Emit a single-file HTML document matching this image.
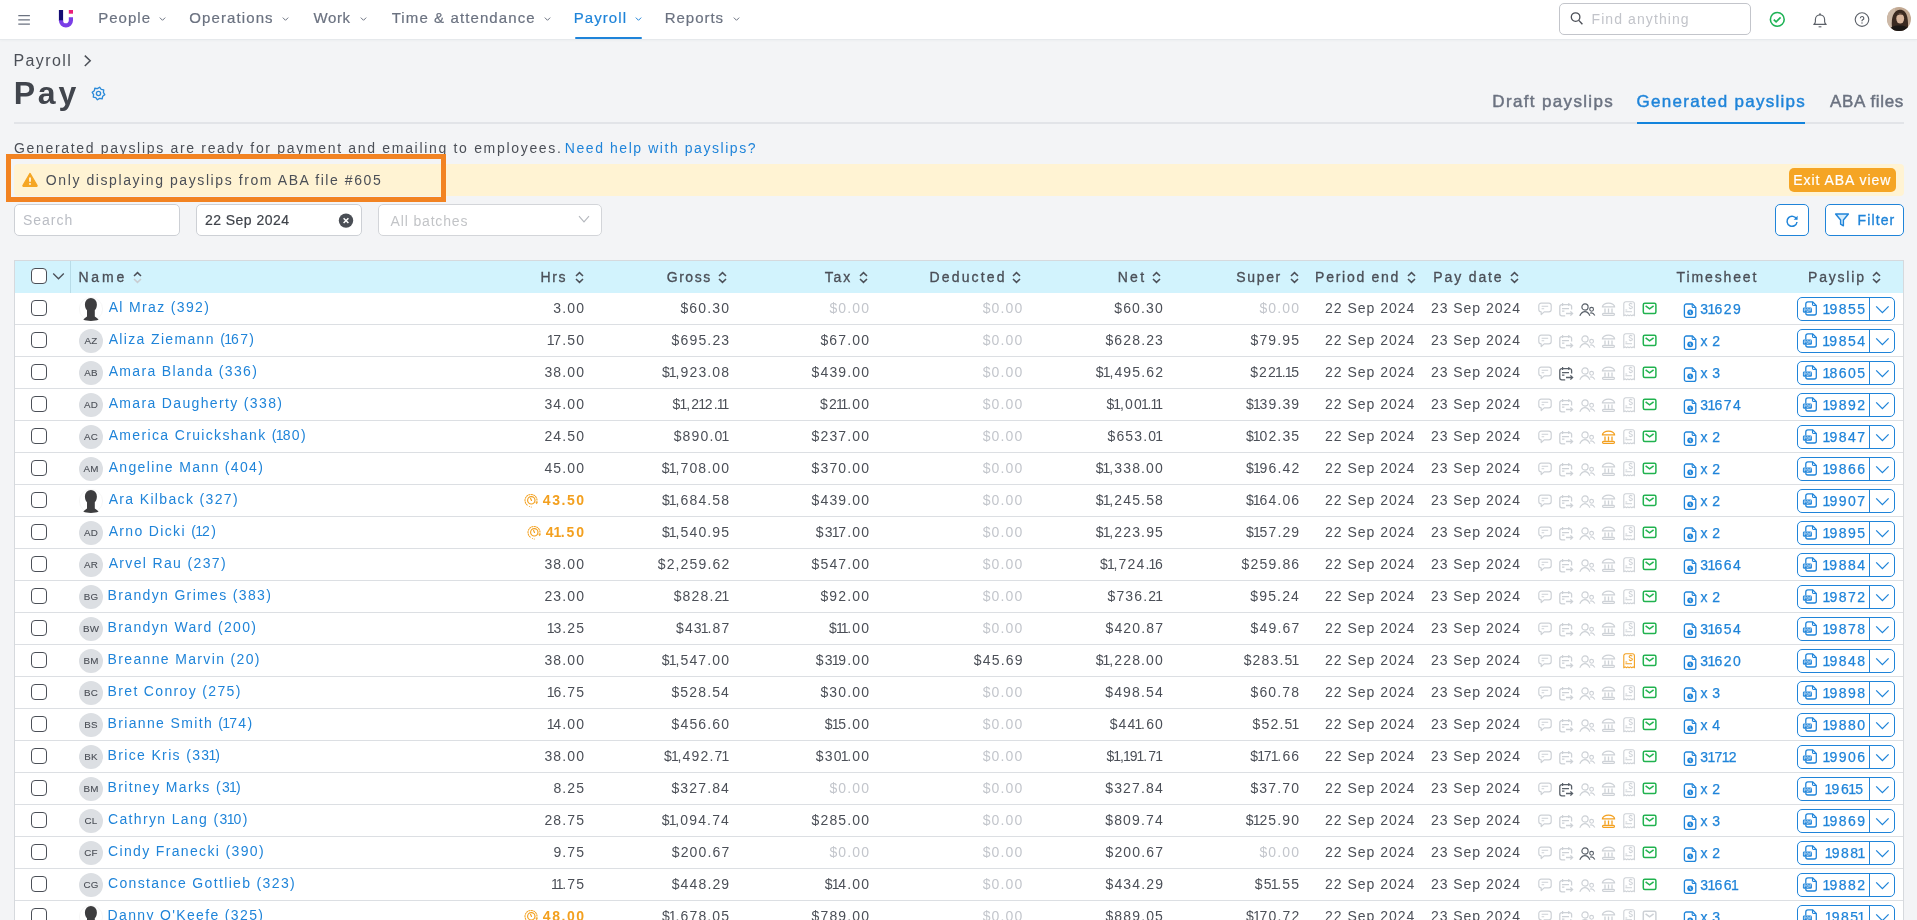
<!DOCTYPE html>
<html><head><meta charset="utf-8"><title>Pay</title>
<style>
html,body{margin:0;padding:0;}
body{width:1917px;height:920px;overflow:hidden;position:relative;background:#f3f4f6;font-family:"Liberation Sans",sans-serif;}
.t{position:absolute;white-space:nowrap;}
.b{position:absolute;}
.s{position:absolute;overflow:visible;}
.av{width:24px;height:24px;border-radius:50%;background:#dcdfe3;color:#4b4f57;font-size:9.8px;line-height:24.6px;text-align:center;letter-spacing:.15px;-webkit-text-stroke:.1px #4b4f57;}
</style></head><body>
<div style="position:absolute;left:0;top:0;width:1917px;height:920px;will-change:transform;">
<div class="b" style="left:0px;top:0px;width:1917px;height:39px;background:#fff;box-shadow:0 1px 3px rgba(30,60,80,.06);"></div>
<div class="b" style="left:0px;top:39px;width:1917px;height:1px;background:#e6e9ec;"></div>
<svg class="s" style="left:17px;top:13px;" width="14" height="13" viewBox="0 0 14 13" fill="none"><path d="M1.3 2.6h11.6M1.3 6.8h11.6M1.3 11.2h11.6" stroke="#6b7280" stroke-width="1.3"/></svg>
<svg class="s" style="left:58px;top:9px;" width="16" height="20" viewBox="0 0 16 20" fill="none"><path d="M3 1v11" stroke="#140c74" stroke-width="4.2"/><path d="M3 11.3v.2a4.95 4.95 0 0 0 9.9 0V8.2" stroke="#7a3ee6" stroke-width="4.2"/><rect x="10.8" y="1" width="4.2" height="3.7" fill="#ea1f78"/></svg>
<div class="t" style="top:10.00px;font-size:15px;line-height:15px;color:#6b7280;font-weight:400;letter-spacing:1.040px;-webkit-text-stroke:0.2px #6b7280;left:98.15px;">People</div>
<svg class="s" style="left:158.5px;top:16px;" width="7" height="6" viewBox="0 0 7 6" fill="none"><path d="M.8 1.6l2.7 2.7 2.7-2.7" stroke="#6b7280" stroke-width="1"/></svg>
<div class="t" style="top:10.00px;font-size:15px;line-height:15px;color:#6b7280;font-weight:400;letter-spacing:1.100px;-webkit-text-stroke:0.2px #6b7280;left:189.30px;">Operations</div>
<svg class="s" style="left:281.5px;top:16px;" width="7" height="6" viewBox="0 0 7 6" fill="none"><path d="M.8 1.6l2.7 2.7 2.7-2.7" stroke="#6b7280" stroke-width="1"/></svg>
<div class="t" style="top:10.00px;font-size:15px;line-height:15px;color:#6b7280;font-weight:400;letter-spacing:0.617px;-webkit-text-stroke:0.2px #6b7280;left:313.45px;">Work</div>
<svg class="s" style="left:359.5px;top:16px;" width="7" height="6" viewBox="0 0 7 6" fill="none"><path d="M.8 1.6l2.7 2.7 2.7-2.7" stroke="#6b7280" stroke-width="1"/></svg>
<div class="t" style="top:10.00px;font-size:15px;line-height:15px;color:#6b7280;font-weight:400;letter-spacing:1.103px;-webkit-text-stroke:0.2px #6b7280;left:391.65px;">Time &amp; attendance</div>
<svg class="s" style="left:543.5px;top:16px;" width="7" height="6" viewBox="0 0 7 6" fill="none"><path d="M.8 1.6l2.7 2.7 2.7-2.7" stroke="#6b7280" stroke-width="1"/></svg>
<div class="t" style="top:10.00px;font-size:15px;line-height:15px;color:#1f84d9;font-weight:400;letter-spacing:1.067px;-webkit-text-stroke:0.2px #1f84d9;left:573.75px;">Payroll</div>
<svg class="s" style="left:634.5px;top:16px;" width="7" height="6" viewBox="0 0 7 6" fill="none"><path d="M.8 1.6l2.7 2.7 2.7-2.7" stroke="#1f84d9" stroke-width="1"/></svg>
<div class="t" style="top:10.00px;font-size:15px;line-height:15px;color:#6b7280;font-weight:400;letter-spacing:0.967px;-webkit-text-stroke:0.2px #6b7280;left:664.75px;">Reports</div>
<svg class="s" style="left:732.5px;top:16px;" width="7" height="6" viewBox="0 0 7 6" fill="none"><path d="M.8 1.6l2.7 2.7 2.7-2.7" stroke="#6b7280" stroke-width="1"/></svg>
<div class="b" style="left:575px;top:37px;width:67px;height:2px;background:#1f84d9;border-radius:1px;"></div>
<div class="b" style="left:1559px;top:3px;width:192px;height:32px;border:1.2px solid #c3c5cb;border-radius:5px;box-sizing:border-box;background:#fff;"></div>
<svg class="s" style="left:1570px;top:11px;" width="14" height="15" viewBox="0 0 14 15" fill="none"><circle cx="5.6" cy="6.1" r="4.3" stroke="#4b4f57" stroke-width="1.3"/><path d="M8.8 9.4l3.6 3.9" stroke="#4b4f57" stroke-width="1.4"/></svg>
<div class="t" style="top:12.05px;font-size:14px;line-height:14px;color:#c2c4ca;font-weight:400;letter-spacing:1.083px;left:1591.55px;">Find anything</div>
<svg class="s" style="left:1769px;top:11px;" width="17" height="17" viewBox="0 0 17 17" fill="none"><circle cx="8.3" cy="8.4" r="6.9" stroke="#1fb356" stroke-width="1.6"/><path d="M4.8 8.6l2.3 2.2 4.5-4.4" stroke="#1fb356" stroke-width="1.7"/></svg>
<svg class="s" style="left:1812px;top:11px;" width="16" height="17" viewBox="0 0 16 17" fill="none"><path d="M1.8 13.4c1-.6 1.6-1.4 1.6-2.8V8.4a4.6 4.6 0 0 1 9.2 0v2.2c0 1.4.6 2.2 1.6 2.8z" stroke="#5b6068" stroke-width="1.15" stroke-linejoin="round"/><path d="M6.6 15.8h2.8" stroke="#5b6068" stroke-width="1.1"/><circle cx="8" cy="3.2" r=".9" fill="#5b6068"/></svg>
<svg class="s" style="left:1854px;top:12px;" width="16" height="16" viewBox="0 0 16 16" fill="none"><circle cx="8" cy="7.6" r="6.8" stroke="#5b6068" stroke-width="1.1"/><path d="M6.4 6.2a1.7 1.7 0 1 1 2.3 1.6c-.5.3-.7.6-.7 1.1v.4" stroke="#5b6068" stroke-width="1.2"/><circle cx="8" cy="11" r=".7" fill="#5b6068"/></svg>
<div class="b" style="left:1887px;top:7px;width:24px;height:24px;border-radius:50%;overflow:hidden;"><svg width="24" height="24" viewBox="0 0 24 24"><rect width="24" height="24" fill="#c2a993"/><rect x="0" y="0" width="8" height="24" fill="#cdb9a7"/><path d="M5.5 24C3.8 15 4.6 3.6 12.8 2.8 20.6 2.6 21.6 13 20.8 24z" fill="#3b2a21"/><ellipse cx="13.2" cy="11.6" rx="3.9" ry="5" fill="#d8b59c"/><path d="M9.8 8.6c1-2.6 5-3 6.9-.6-1.8-.9-5.2-.8-6.9.6z" fill="#3b2a21"/><path d="M1 24c2.4-4.2 6.2-5.8 11.6-5.6 5.2 0 8.8 1.6 10.6 5.6z" fill="#1b1715"/></svg></div>
<div class="t" style="top:53.36px;font-size:16px;line-height:16px;color:#4b4f57;font-weight:400;letter-spacing:1.408px;left:13.40px;">Payroll</div>
<svg class="s" style="left:83px;top:54px;" width="10" height="14" viewBox="0 0 10 14" fill="none"><path d="M1.8 1.6l5.4 5.2-5.4 5.2" stroke="#4b4f57" stroke-width="1.5"/></svg>
<div class="t" style="top:77.41px;font-size:32px;line-height:32px;color:#41454d;font-weight:700;letter-spacing:2.800px;left:13.65px;">Pay</div>
<svg class="s" style="left:90.8px;top:85.5px;" width="15" height="15" viewBox="0 0 15 15" fill="none"><path d="M8.61 1.20 L10.19 3.28 L12.74 3.83 L12.38 6.42 L13.80 8.61 L11.72 10.19 L11.17 12.74 L8.58 12.38 L6.39 13.80 L4.81 11.72 L2.26 11.17 L2.62 8.58 L1.20 6.39 L3.28 4.81 L3.83 2.26 L6.42 2.62z" stroke="#2a8ad9" stroke-width="1.3" stroke-linejoin="round"/><circle cx="7.5" cy="7.5" r="2.1" stroke="#2a8ad9" stroke-width="1.35"/></svg>
<div class="t" style="top:93.01px;font-size:17px;line-height:17px;color:#6b7280;font-weight:400;letter-spacing:1.346px;-webkit-text-stroke:0.45px #6b7280;left:1492.30px;">Draft payslips</div>
<div class="t" style="top:93.01px;font-size:17px;line-height:17px;color:#1f84d9;font-weight:400;letter-spacing:1.291px;-webkit-text-stroke:0.45px #1f84d9;left:1636.45px;">Generated payslips</div>
<div class="t" style="top:93.01px;font-size:17px;line-height:17px;color:#6b7280;font-weight:400;letter-spacing:0.675px;-webkit-text-stroke:0.45px #6b7280;left:1829.95px;">ABA files</div>
<div class="b" style="left:14px;top:122px;width:1890px;height:2px;background:#e2e4e8;"></div>
<div class="b" style="left:1637px;top:122px;width:168px;height:2px;background:#1283dc;"></div>
<div class="t" style="top:140.85px;font-size:14px;line-height:14px;color:#4b4f57;font-weight:400;letter-spacing:1.685px;left:13.90px;">Generated payslips are ready for payment and emailing to employees.</div>
<div class="t" style="top:140.85px;font-size:14px;line-height:14px;color:#1f84d9;font-weight:400;letter-spacing:1.557px;left:564.85px;">Need help with payslips?</div>
<div class="b" style="left:14px;top:164px;width:1890px;height:32px;background:#fff3d3;border-radius:4px;"></div>
<div class="b" style="left:6px;top:154px;width:440px;height:48px;border:5px solid #f28322;box-sizing:border-box;"></div>
<svg class="s" style="left:22px;top:172px;" width="16" height="15" viewBox="0 0 16 15" fill="none"><path d="M8 1.4L15 13.2a.9.9 0 0 1-.8 1.3H1.8a.9.9 0 0 1-.8-1.3z" fill="#f5a623" stroke="#f5a623" stroke-width="1.2" stroke-linejoin="round"/><path d="M8 5.6v4.2" stroke="#fff" stroke-width="1.6"/><circle cx="8" cy="11.9" r=".9" fill="#fff"/></svg>
<div class="t" style="top:173.15px;font-size:14px;line-height:14px;color:#4b4f57;font-weight:400;letter-spacing:1.582px;left:45.85px;">Only displaying payslips from ABA file #605</div>
<div class="b" style="left:1789px;top:168px;width:107px;height:24px;background:#f5a524;border-radius:5px;"></div>
<div class="t" style="top:173.15px;font-size:14px;line-height:14px;color:#fff;font-weight:400;letter-spacing:0.958px;-webkit-text-stroke:0.2px #fff;left:1793.25px;">Exit ABA view</div>
<div class="b" style="left:14px;top:204px;width:166px;height:32px;background:#fff;border:1px solid #cdd0d5;border-radius:5px;box-sizing:border-box;"></div>
<div class="t" style="top:213.05px;font-size:14px;line-height:14px;color:#babdc4;font-weight:400;letter-spacing:0.980px;left:22.95px;">Search</div>
<div class="b" style="left:196px;top:204px;width:166px;height:32px;background:#fff;border:1px solid #cdd0d5;border-radius:5px;box-sizing:border-box;"></div>
<div class="t" style="top:213.15px;font-size:14px;line-height:14px;color:#3f434a;font-weight:400;letter-spacing:0.470px;-webkit-text-stroke:0.2px #3f434a;left:204.90px;">22 Sep 2024</div>
<svg class="s" style="left:338px;top:213px;" width="16" height="16" viewBox="0 0 16 16" fill="none"><circle cx="8" cy="7.6" r="7.2" fill="#4a4e55"/><path d="M5.6 5.2l4.8 4.8M10.4 5.2l-4.8 4.8" stroke="#fff" stroke-width="1.5"/></svg>
<div class="b" style="left:378px;top:204px;width:224px;height:32px;background:#fff;border:1px solid #d3d5d9;border-radius:5px;box-sizing:border-box;"></div>
<div class="t" style="top:213.75px;font-size:14px;line-height:14px;color:#c2c4c7;font-weight:400;letter-spacing:0.845px;left:390.55px;">All batches</div>
<svg class="s" style="left:578px;top:215px;" width="12" height="9" viewBox="0 0 12 9" fill="none"><path d="M1 1.2l5 5.6 5-5.6" stroke="#b5b8be" stroke-width="1.1"/></svg>
<div class="b" style="left:1775px;top:204px;width:34px;height:32px;background:#fff;border:1.5px solid #1f84d9;border-radius:5px;box-sizing:border-box;"></div>
<svg class="s" style="left:1785px;top:214px;" width="14" height="14" viewBox="0 0 14 14" fill="none"><path d="M11.6 5.2A5 5 0 1 0 12 8" stroke="#1f84d9" stroke-width="1.5"/><path d="M12.6 1.8v4h-4z" fill="#1f84d9"/></svg>
<div class="b" style="left:1825px;top:204px;width:79px;height:32px;background:#fff;border:1.5px solid #1f84d9;border-radius:5px;box-sizing:border-box;"></div>
<svg class="s" style="left:1834px;top:212px;" width="16" height="16" viewBox="0 0 16 16" fill="none"><path d="M1.6 2h12.8l-5 6v5.8l-2.8-1.6V8z" stroke="#1f84d9" stroke-width="1.4" stroke-linejoin="round" fill="#d6ecfb"/></svg>
<div class="t" style="top:213.35px;font-size:14px;line-height:14px;color:#1f84d9;font-weight:400;letter-spacing:1.110px;-webkit-text-stroke:0.35px #1f84d9;left:1857.55px;">Filter</div>
<div class="b" style="left:14px;top:260px;width:1890px;height:660px;background:#fff;border:1px solid #d6d9dd;border-bottom:none;box-sizing:border-box;"></div>
<div class="b" style="left:15px;top:261px;width:1888px;height:32px;background:#d2f3fd;"></div>
<div class="b" style="left:70px;top:261px;width:1px;height:32px;background:#b8dce8;"></div>
<div class="b" style="left:31px;top:268px;width:16px;height:16px;background:#fff;border:1.5px solid #4b4f57;border-radius:4px;box-sizing:border-box;"></div>
<svg class="s" style="left:52px;top:272px;" width="13" height="9" viewBox="0 0 13 9" fill="none"><path d="M1.2 1.5l5.3 5.3 5.3-5.3" stroke="#4b4f57" stroke-width="1.3"/></svg>
<div class="t" style="top:270.15px;font-size:14px;line-height:14px;color:#4b4f57;font-weight:400;letter-spacing:2.817px;-webkit-text-stroke:0.32px #4b4f57;left:78.45px;">Name</div>
<svg class="s" style="left:132.5px;top:271px;" width="9" height="13" viewBox="0 0 9 13" fill="none"><path d="M1 5l3.5-3.4L8 5" stroke="#4b4f57" stroke-width="1.5"/><path d="M1 8l3.5 3.4L8 8" stroke="#c9cdd2" stroke-width="1.5"/></svg>
<div class="t" style="top:270.15px;font-size:14px;line-height:14px;color:#4b4f57;font-weight:400;letter-spacing:1.650px;-webkit-text-stroke:0.32px #4b4f57;right:1349.83px;">Hrs</div>
<svg class="s" style="left:574.5px;top:271px;" width="9" height="13" viewBox="0 0 9 13" fill="none"><path d="M1 5l3.5-3.4L8 5" stroke="#4b4f57" stroke-width="1.5"/><path d="M1 8l3.5 3.4L8 8" stroke="#4b4f57" stroke-width="1.5"/></svg>
<div class="t" style="top:270.15px;font-size:14px;line-height:14px;color:#4b4f57;font-weight:400;letter-spacing:1.537px;-webkit-text-stroke:0.32px #4b4f57;right:1205.27px;">Gross</div>
<svg class="s" style="left:718.4000000000001px;top:271px;" width="9" height="13" viewBox="0 0 9 13" fill="none"><path d="M1 5l3.5-3.4L8 5" stroke="#4b4f57" stroke-width="1.5"/><path d="M1 8l3.5 3.4L8 8" stroke="#4b4f57" stroke-width="1.5"/></svg>
<div class="t" style="top:270.15px;font-size:14px;line-height:14px;color:#4b4f57;font-weight:400;letter-spacing:1.825px;-webkit-text-stroke:0.32px #4b4f57;right:1065.04px;">Tax</div>
<svg class="s" style="left:859.2px;top:271px;" width="9" height="13" viewBox="0 0 9 13" fill="none"><path d="M1 5l3.5-3.4L8 5" stroke="#4b4f57" stroke-width="1.5"/><path d="M1 8l3.5 3.4L8 8" stroke="#4b4f57" stroke-width="1.5"/></svg>
<div class="t" style="top:270.15px;font-size:14px;line-height:14px;color:#4b4f57;font-weight:400;letter-spacing:2.171px;-webkit-text-stroke:0.32px #4b4f57;right:910.25px;">Deducted</div>
<svg class="s" style="left:1012.4000000000001px;top:271px;" width="9" height="13" viewBox="0 0 9 13" fill="none"><path d="M1 5l3.5-3.4L8 5" stroke="#4b4f57" stroke-width="1.5"/><path d="M1 8l3.5 3.4L8 8" stroke="#4b4f57" stroke-width="1.5"/></svg>
<div class="t" style="top:270.15px;font-size:14px;line-height:14px;color:#4b4f57;font-weight:400;letter-spacing:2.325px;-webkit-text-stroke:0.32px #4b4f57;right:770.59px;">Net</div>
<svg class="s" style="left:1152.3px;top:271px;" width="9" height="13" viewBox="0 0 9 13" fill="none"><path d="M1 5l3.5-3.4L8 5" stroke="#4b4f57" stroke-width="1.5"/><path d="M1 8l3.5 3.4L8 8" stroke="#4b4f57" stroke-width="1.5"/></svg>
<div class="t" style="top:270.15px;font-size:14px;line-height:14px;color:#4b4f57;font-weight:400;letter-spacing:1.650px;-webkit-text-stroke:0.32px #4b4f57;right:635.14px;">Super</div>
<svg class="s" style="left:1289.6000000000001px;top:271px;" width="9" height="13" viewBox="0 0 9 13" fill="none"><path d="M1 5l3.5-3.4L8 5" stroke="#4b4f57" stroke-width="1.5"/><path d="M1 8l3.5 3.4L8 8" stroke="#4b4f57" stroke-width="1.5"/></svg>
<div class="t" style="top:270.15px;font-size:14px;line-height:14px;color:#4b4f57;font-weight:400;letter-spacing:1.733px;-webkit-text-stroke:0.32px #4b4f57;right:516.90px;">Period end</div>
<svg class="s" style="left:1406.6000000000001px;top:271px;" width="9" height="13" viewBox="0 0 9 13" fill="none"><path d="M1 5l3.5-3.4L8 5" stroke="#4b4f57" stroke-width="1.5"/><path d="M1 8l3.5 3.4L8 8" stroke="#4b4f57" stroke-width="1.5"/></svg>
<div class="t" style="top:270.15px;font-size:14px;line-height:14px;color:#4b4f57;font-weight:400;letter-spacing:1.857px;-webkit-text-stroke:0.32px #4b4f57;right:413.53px;">Pay date</div>
<svg class="s" style="left:1510.4px;top:271px;" width="9" height="13" viewBox="0 0 9 13" fill="none"><path d="M1 5l3.5-3.4L8 5" stroke="#4b4f57" stroke-width="1.5"/><path d="M1 8l3.5 3.4L8 8" stroke="#4b4f57" stroke-width="1.5"/></svg>
<div class="t" style="top:270.15px;font-size:14px;line-height:14px;color:#4b4f57;font-weight:400;letter-spacing:1.869px;-webkit-text-stroke:0.32px #4b4f57;left:1676.60px;">Timesheet</div>
<div class="t" style="top:270.15px;font-size:14px;line-height:14px;color:#4b4f57;font-weight:400;letter-spacing:1.800px;-webkit-text-stroke:0.32px #4b4f57;left:1808.05px;">Payslip</div>
<svg class="s" style="left:1872px;top:271px;" width="9" height="13" viewBox="0 0 9 13" fill="none"><path d="M1 5l3.5-3.4L8 5" stroke="#4b4f57" stroke-width="1.5"/><path d="M1 8l3.5 3.4L8 8" stroke="#4b4f57" stroke-width="1.5"/></svg>
<div class="b" style="left:15px;top:324px;width:1888px;height:1px;background:#dcdfe3;"></div>
<div class="b" style="left:31px;top:300px;width:16px;height:16px;background:#fff;border:1.5px solid #4b4f57;border-radius:4px;box-sizing:border-box;"></div>
<svg class="s" style="left:79px;top:297px;" width="24" height="24" viewBox="0 0 24 24" fill="none"><circle cx="12" cy="12" r="11.6" fill="#fff" stroke="#f0f0f0" stroke-width=".6"/><path d="M5.9 7.6a6 6.7 0 0 1 12 0c0 2.6-.9 4.6-2.1 5.6v6.4c1 .9 2.4 1.7 3.8 2.9-1.9 1-4.7 1.4-7.7 1.4s-5.7-.4-7.6-1.4c1.4-1.2 2.7-2 3.7-2.9v-6.4C6.8 12.2 5.9 10.2 5.9 7.6z" fill="#3d3d3f"/></svg>
<div class="t" style="top:300.15px;font-size:14px;line-height:14px;color:#1f84d9;font-weight:400;letter-spacing:1.350px;left:108.65px;">Al Mraz (392)</div>
<div class="t" style="top:301.15px;font-size:14px;line-height:14px;color:#4b4f57;font-weight:400;letter-spacing:1.150px;right:1331.80px;">3.00</div>
<div class="t" style="top:301.15px;font-size:14px;line-height:14px;color:#4b4f57;font-weight:400;letter-spacing:1.150px;right:1186.83px;">$60.30</div>
<div class="t" style="top:301.15px;font-size:14px;line-height:14px;color:#c3c6cc;font-weight:400;letter-spacing:1.150px;right:1046.82px;">$0.00</div>
<div class="t" style="top:301.15px;font-size:14px;line-height:14px;color:#c3c6cc;font-weight:400;letter-spacing:1.150px;right:893.52px;">$0.00</div>
<div class="t" style="top:301.15px;font-size:14px;line-height:14px;color:#4b4f57;font-weight:400;letter-spacing:1.150px;right:753.03px;">$60.30</div>
<div class="t" style="top:301.15px;font-size:14px;line-height:14px;color:#c3c6cc;font-weight:400;letter-spacing:1.150px;right:616.82px;">$0.00</div>
<div class="t" style="top:301.15px;font-size:14px;line-height:14px;color:#4b4f57;font-weight:400;letter-spacing:0.970px;right:501.82px;">22 Sep 2024</div>
<div class="t" style="top:301.15px;font-size:14px;line-height:14px;color:#4b4f57;font-weight:400;letter-spacing:0.970px;right:396.02px;">23 Sep 2024</div>
<svg class="s" style="left:1538px;top:302px;" width="14" height="14" viewBox="0 0 14 14" fill="none"><path d="M3.2 1.2h7.6a2.4 2.4 0 0 1 2.4 2.4v3.9a2.4 2.4 0 0 1-2.4 2.4H6.2l-3 2.6V9.9A2.4 2.4 0 0 1 .8 7.5V3.6a2.4 2.4 0 0 1 2.4-2.4z" stroke="#cdd1d6" stroke-width="1.2" stroke-linejoin="round"/><path d="M3.6 4.3h6.6M3.6 6.7h2.6" stroke="#cdd1d6" stroke-width="1.1"/></svg>
<svg class="s" style="left:1558.6px;top:302px;" width="15" height="15" viewBox="0 0 15 15" fill="none"><path d="M12.6 7.4V4.6a2 2 0 0 0-2-2H2.8a2 2 0 0 0-2 2v7.2a2 2 0 0 0 2 2h3.4" stroke="#cdd1d6" stroke-width="1.3"/><path d="M3.6 1v3M9.8 1v3M3 6.6h7M3 9.2h2.4" stroke="#cdd1d6" stroke-width="1.2"/><path d="M7 11.5h6.6M11.4 9.4l2.2 2.1-2.2 2.1" stroke="#cdd1d6" stroke-width="1.3"/></svg>
<svg class="s" style="left:1578.6px;top:302.5px;" width="17" height="14" viewBox="0 0 17 14" fill="none"><circle cx="6" cy="4" r="3.1" stroke="#596069" stroke-width="1.2"/><path d="M.8 12.8C2.4 9.6 4.2 8.7 5.9 8.7s3.5.9 5 4.1" stroke="#596069" stroke-width="1.25"/><circle cx="12.6" cy="6.3" r="1.9" stroke="#596069" stroke-width="1.1"/><path d="M11.2 10.1c1.5-.5 3.3.1 4.6 2.4" stroke="#596069" stroke-width="1.15"/></svg>
<svg class="s" style="left:1600.6px;top:302px;" width="15" height="14" viewBox="0 0 15 14" fill="none"><path d="M1.4 4.9h12.2c0-2-2.7-3.7-6.1-3.7S1.4 2.9 1.4 4.9z" stroke="#cdd1d6" stroke-width="1.3" stroke-linejoin="round"/><path d="M4 6.4v4.4M7.5 6.4v4.4M11 6.4v4.4" stroke="#cdd1d6" stroke-width="1.3"/><rect x="1.5" y="11.3" width="12" height="2" rx="1" stroke="#cdd1d6" stroke-width="1.2"/></svg>
<svg class="s" style="left:1623px;top:301.2px;" width="13" height="16" viewBox="0 0 13 16" fill="none"><path d="M.8 14.8V2.7A2 2 0 0 1 2.8.7h6.6a2 2 0 0 1 2 2v12.1l-1.3-.9-1.3.9-1.3-.9-1.4.9-1.3-.9-1.3.9-1.3-.9z" stroke="#cdd1d6" stroke-width="1.1" stroke-linejoin="round"/><path d="M9.3 3.3c-.3-.5-.9-.8-1.6-.8-.9 0-1.6.5-1.6 1.2s.7 1 1.6 1.2 1.7.5 1.7 1.3-.7 1.2-1.7 1.2c-.7 0-1.4-.3-1.7-.9M7.7 1.7v.8M7.7 7.4v.9" stroke="#cdd1d6" stroke-width="1.05"/><path d="M2.4 8.9h1.8M2.4 10.8h6.6" stroke="#cdd1d6" stroke-width="1.05"/></svg>
<svg class="s" style="left:1642.4px;top:302.2px;" width="15" height="13" viewBox="0 0 15 13" fill="none"><rect x="1.3" y="1.2" width="12.6" height="10.2" rx="1.5" stroke="#21b24f" stroke-width="1.5"/><path d="M3.6 3.8l4 3 4-3" stroke="#21b24f" stroke-width="1.5"/></svg>
<svg class="s" style="left:1683.6px;top:302.5px;" width="13" height="15" viewBox="0 0 13 15" fill="none"><path d="M2.4 1h6l3.4 3.4v8a2 2 0 0 1-2 2H2.4a2 2 0 0 1-2-2V3a2 2 0 0 1 2-2z" stroke="#1f84d9" stroke-width="1.3"/><path d="M8.2 1.2v2.3a1 1 0 0 0 1 1h2.4" stroke="#1f84d9" stroke-width="1.1"/><circle cx="6.2" cy="9.3" r="2.9" fill="#1f84d9"/><path d="M6 7.9v1.7l1.2.8" stroke="#fff" stroke-width=".9"/></svg>
<div class="t" style="top:301.75px;font-size:14px;line-height:14px;color:#1f84d9;font-weight:400;letter-spacing:1.500px;-webkit-text-stroke:0.25px #1f84d9;left:1700.15px;">3<span style="margin-left:-2.00px;letter-spacing:-0.800px">1</span>629</div>
<div class="b" style="left:1797px;top:297.3px;width:98px;height:23.5px;border:1.4px solid #1f84d9;border-radius:5px;box-sizing:border-box;background:#fff;"></div>
<div class="b" style="left:1869px;top:297.3px;width:1.400000000000091px;height:23.5px;background:#1f84d9;"></div>
<svg class="s" style="left:1802px;top:301.4px;" width="16" height="15" viewBox="0 0 16 15" fill="none"><path d="M3.8 6.6V2.9A2 2 0 0 1 5.8.9h4.9l3.6 3.6v7.5a2 2 0 0 1-2 2H5.8a2 2 0 0 1-2-2v-.4" stroke="#1f84d9" stroke-width="1.3"/><path d="M10.5 1.1v2.3a1.1 1.1 0 0 0 1.1 1.1h2.5" stroke="#1f84d9" stroke-width="1.1"/><rect x=".9" y="6.4" width="9" height="5.3" rx="1.3" fill="#1f84d9"/><path d="M2.3 10.5V7.7h.9a.75.75 0 0 1 0 1.5h-.9M5 10.5V7.7h.6a1.3 1.3 0 0 1 0 2.8zM7.9 10.5V7.7h1.3M7.9 9h1" stroke="#fff" stroke-width=".55"/></svg>
<div class="t" style="top:301.75px;font-size:14px;line-height:14px;color:#1f84d9;font-weight:400;letter-spacing:1.500px;-webkit-text-stroke:0.25px #1f84d9;left:1824.45px;"><span style="margin-left:-2.00px;letter-spacing:-0.800px">1</span>9855</div>
<svg class="s" style="left:1874.5px;top:305px;" width="15" height="10" viewBox="0 0 15 10" fill="none"><path d="M1.2 1.4l6.2 6.2 6.2-6.2" stroke="#1f84d9" stroke-width="1.3"/></svg>
<div class="b" style="left:15px;top:356px;width:1888px;height:1px;background:#dcdfe3;"></div>
<div class="b" style="left:31px;top:332px;width:16px;height:16px;background:#fff;border:1.5px solid #4b4f57;border-radius:4px;box-sizing:border-box;"></div>
<div class="b av" style="left:79px;top:329px;">AZ</div>
<div class="t" style="top:332.15px;font-size:14px;line-height:14px;color:#1f84d9;font-weight:400;letter-spacing:1.350px;left:108.65px;">Aliza Ziemann (<span style="margin-left:-2.00px;letter-spacing:-0.950px">1</span>67)</div>
<div class="t" style="top:333.15px;font-size:14px;line-height:14px;color:#4b4f57;font-weight:400;letter-spacing:1.150px;right:1331.82px;"><span style="margin-left:-2.00px;letter-spacing:-1.150px">1</span>7.50</div>
<div class="t" style="top:333.15px;font-size:14px;line-height:14px;color:#4b4f57;font-weight:400;letter-spacing:1.150px;right:1186.74px;">$695.23</div>
<div class="t" style="top:333.15px;font-size:14px;line-height:14px;color:#4b4f57;font-weight:400;letter-spacing:1.150px;right:1046.83px;">$67.00</div>
<div class="t" style="top:333.15px;font-size:14px;line-height:14px;color:#c3c6cc;font-weight:400;letter-spacing:1.150px;right:893.52px;">$0.00</div>
<div class="t" style="top:333.15px;font-size:14px;line-height:14px;color:#4b4f57;font-weight:400;letter-spacing:1.150px;right:752.94px;">$628.23</div>
<div class="t" style="top:333.15px;font-size:14px;line-height:14px;color:#4b4f57;font-weight:400;letter-spacing:1.150px;right:616.78px;">$79.95</div>
<div class="t" style="top:333.15px;font-size:14px;line-height:14px;color:#4b4f57;font-weight:400;letter-spacing:0.970px;right:501.82px;">22 Sep 2024</div>
<div class="t" style="top:333.15px;font-size:14px;line-height:14px;color:#4b4f57;font-weight:400;letter-spacing:0.970px;right:396.02px;">23 Sep 2024</div>
<svg class="s" style="left:1538px;top:334px;" width="14" height="14" viewBox="0 0 14 14" fill="none"><path d="M3.2 1.2h7.6a2.4 2.4 0 0 1 2.4 2.4v3.9a2.4 2.4 0 0 1-2.4 2.4H6.2l-3 2.6V9.9A2.4 2.4 0 0 1 .8 7.5V3.6a2.4 2.4 0 0 1 2.4-2.4z" stroke="#cdd1d6" stroke-width="1.2" stroke-linejoin="round"/><path d="M3.6 4.3h6.6M3.6 6.7h2.6" stroke="#cdd1d6" stroke-width="1.1"/></svg>
<svg class="s" style="left:1558.6px;top:334px;" width="15" height="15" viewBox="0 0 15 15" fill="none"><path d="M12.6 7.4V4.6a2 2 0 0 0-2-2H2.8a2 2 0 0 0-2 2v7.2a2 2 0 0 0 2 2h3.4" stroke="#cdd1d6" stroke-width="1.3"/><path d="M3.6 1v3M9.8 1v3M3 6.6h7M3 9.2h2.4" stroke="#cdd1d6" stroke-width="1.2"/><path d="M7 11.5h6.6M11.4 9.4l2.2 2.1-2.2 2.1" stroke="#cdd1d6" stroke-width="1.3"/></svg>
<svg class="s" style="left:1578.6px;top:334.5px;" width="17" height="14" viewBox="0 0 17 14" fill="none"><circle cx="6" cy="4" r="3.1" stroke="#cdd1d6" stroke-width="1.2"/><path d="M.8 12.8C2.4 9.6 4.2 8.7 5.9 8.7s3.5.9 5 4.1" stroke="#cdd1d6" stroke-width="1.25"/><circle cx="12.6" cy="6.3" r="1.9" stroke="#cdd1d6" stroke-width="1.1"/><path d="M11.2 10.1c1.5-.5 3.3.1 4.6 2.4" stroke="#cdd1d6" stroke-width="1.15"/></svg>
<svg class="s" style="left:1600.6px;top:334px;" width="15" height="14" viewBox="0 0 15 14" fill="none"><path d="M1.4 4.9h12.2c0-2-2.7-3.7-6.1-3.7S1.4 2.9 1.4 4.9z" stroke="#cdd1d6" stroke-width="1.3" stroke-linejoin="round"/><path d="M4 6.4v4.4M7.5 6.4v4.4M11 6.4v4.4" stroke="#cdd1d6" stroke-width="1.3"/><rect x="1.5" y="11.3" width="12" height="2" rx="1" stroke="#cdd1d6" stroke-width="1.2"/></svg>
<svg class="s" style="left:1623px;top:333.2px;" width="13" height="16" viewBox="0 0 13 16" fill="none"><path d="M.8 14.8V2.7A2 2 0 0 1 2.8.7h6.6a2 2 0 0 1 2 2v12.1l-1.3-.9-1.3.9-1.3-.9-1.4.9-1.3-.9-1.3.9-1.3-.9z" stroke="#cdd1d6" stroke-width="1.1" stroke-linejoin="round"/><path d="M9.3 3.3c-.3-.5-.9-.8-1.6-.8-.9 0-1.6.5-1.6 1.2s.7 1 1.6 1.2 1.7.5 1.7 1.3-.7 1.2-1.7 1.2c-.7 0-1.4-.3-1.7-.9M7.7 1.7v.8M7.7 7.4v.9" stroke="#cdd1d6" stroke-width="1.05"/><path d="M2.4 8.9h1.8M2.4 10.8h6.6" stroke="#cdd1d6" stroke-width="1.05"/></svg>
<svg class="s" style="left:1642.4px;top:334.2px;" width="15" height="13" viewBox="0 0 15 13" fill="none"><rect x="1.3" y="1.2" width="12.6" height="10.2" rx="1.5" stroke="#21b24f" stroke-width="1.5"/><path d="M3.6 3.8l4 3 4-3" stroke="#21b24f" stroke-width="1.5"/></svg>
<svg class="s" style="left:1683.6px;top:334.5px;" width="13" height="15" viewBox="0 0 13 15" fill="none"><path d="M2.4 1h6l3.4 3.4v8a2 2 0 0 1-2 2H2.4a2 2 0 0 1-2-2V3a2 2 0 0 1 2-2z" stroke="#1f84d9" stroke-width="1.3"/><path d="M8.2 1.2v2.3a1 1 0 0 0 1 1h2.4" stroke="#1f84d9" stroke-width="1.1"/><circle cx="6.2" cy="9.3" r="2.9" fill="#1f84d9"/><path d="M6 7.9v1.7l1.2.8" stroke="#fff" stroke-width=".9"/></svg>
<div class="t" style="top:333.75px;font-size:14px;line-height:14px;color:#1f84d9;font-weight:400;letter-spacing:0.400px;-webkit-text-stroke:0.25px #1f84d9;left:1700.55px;">x 2</div>
<div class="b" style="left:1797px;top:329.3px;width:98px;height:23.5px;border:1.4px solid #1f84d9;border-radius:5px;box-sizing:border-box;background:#fff;"></div>
<div class="b" style="left:1869px;top:329.3px;width:1.400000000000091px;height:23.5px;background:#1f84d9;"></div>
<svg class="s" style="left:1802px;top:333.4px;" width="16" height="15" viewBox="0 0 16 15" fill="none"><path d="M3.8 6.6V2.9A2 2 0 0 1 5.8.9h4.9l3.6 3.6v7.5a2 2 0 0 1-2 2H5.8a2 2 0 0 1-2-2v-.4" stroke="#1f84d9" stroke-width="1.3"/><path d="M10.5 1.1v2.3a1.1 1.1 0 0 0 1.1 1.1h2.5" stroke="#1f84d9" stroke-width="1.1"/><rect x=".9" y="6.4" width="9" height="5.3" rx="1.3" fill="#1f84d9"/><path d="M2.3 10.5V7.7h.9a.75.75 0 0 1 0 1.5h-.9M5 10.5V7.7h.6a1.3 1.3 0 0 1 0 2.8zM7.9 10.5V7.7h1.3M7.9 9h1" stroke="#fff" stroke-width=".55"/></svg>
<div class="t" style="top:333.75px;font-size:14px;line-height:14px;color:#1f84d9;font-weight:400;letter-spacing:1.500px;-webkit-text-stroke:0.25px #1f84d9;left:1824.35px;"><span style="margin-left:-2.00px;letter-spacing:-0.800px">1</span>9854</div>
<svg class="s" style="left:1874.5px;top:337px;" width="15" height="10" viewBox="0 0 15 10" fill="none"><path d="M1.2 1.4l6.2 6.2 6.2-6.2" stroke="#1f84d9" stroke-width="1.3"/></svg>
<div class="b" style="left:15px;top:388px;width:1888px;height:1px;background:#dcdfe3;"></div>
<div class="b" style="left:31px;top:364px;width:16px;height:16px;background:#fff;border:1.5px solid #4b4f57;border-radius:4px;box-sizing:border-box;"></div>
<div class="b av" style="left:79px;top:361px;">AB</div>
<div class="t" style="top:364.15px;font-size:14px;line-height:14px;color:#1f84d9;font-weight:400;letter-spacing:1.350px;left:108.65px;">Amara Blanda (336)</div>
<div class="t" style="top:365.15px;font-size:14px;line-height:14px;color:#4b4f57;font-weight:400;letter-spacing:1.150px;right:1331.82px;">38.00</div>
<div class="t" style="top:365.15px;font-size:14px;line-height:14px;color:#4b4f57;font-weight:400;letter-spacing:1.150px;right:1186.77px;">$<span style="margin-left:-2.00px;letter-spacing:-1.150px">1</span>,923.08</div>
<div class="t" style="top:365.15px;font-size:14px;line-height:14px;color:#4b4f57;font-weight:400;letter-spacing:1.150px;right:1046.79px;">$439.00</div>
<div class="t" style="top:365.15px;font-size:14px;line-height:14px;color:#c3c6cc;font-weight:400;letter-spacing:1.150px;right:893.52px;">$0.00</div>
<div class="t" style="top:365.15px;font-size:14px;line-height:14px;color:#4b4f57;font-weight:400;letter-spacing:1.150px;right:752.87px;">$<span style="margin-left:-2.00px;letter-spacing:-1.150px">1</span>,495.62</div>
<div class="t" style="top:365.15px;font-size:14px;line-height:14px;color:#4b4f57;font-weight:400;letter-spacing:1.150px;right:616.74px;">$22<span style="margin-left:-2.00px;letter-spacing:-1.150px">1</span>.<span style="margin-left:-2.00px;letter-spacing:-1.150px">1</span>5</div>
<div class="t" style="top:365.15px;font-size:14px;line-height:14px;color:#4b4f57;font-weight:400;letter-spacing:0.970px;right:501.82px;">22 Sep 2024</div>
<div class="t" style="top:365.15px;font-size:14px;line-height:14px;color:#4b4f57;font-weight:400;letter-spacing:0.970px;right:396.02px;">23 Sep 2024</div>
<svg class="s" style="left:1538px;top:366px;" width="14" height="14" viewBox="0 0 14 14" fill="none"><path d="M3.2 1.2h7.6a2.4 2.4 0 0 1 2.4 2.4v3.9a2.4 2.4 0 0 1-2.4 2.4H6.2l-3 2.6V9.9A2.4 2.4 0 0 1 .8 7.5V3.6a2.4 2.4 0 0 1 2.4-2.4z" stroke="#cdd1d6" stroke-width="1.2" stroke-linejoin="round"/><path d="M3.6 4.3h6.6M3.6 6.7h2.6" stroke="#cdd1d6" stroke-width="1.1"/></svg>
<svg class="s" style="left:1558.6px;top:366px;" width="15" height="15" viewBox="0 0 15 15" fill="none"><path d="M12.6 7.4V4.6a2 2 0 0 0-2-2H2.8a2 2 0 0 0-2 2v7.2a2 2 0 0 0 2 2h3.4" stroke="#596069" stroke-width="1.3"/><path d="M3.6 1v3M9.8 1v3M3 6.6h7M3 9.2h2.4" stroke="#596069" stroke-width="1.2"/><path d="M7 11.5h6.6M11.4 9.4l2.2 2.1-2.2 2.1" stroke="#596069" stroke-width="1.3"/></svg>
<svg class="s" style="left:1578.6px;top:366.5px;" width="17" height="14" viewBox="0 0 17 14" fill="none"><circle cx="6" cy="4" r="3.1" stroke="#cdd1d6" stroke-width="1.2"/><path d="M.8 12.8C2.4 9.6 4.2 8.7 5.9 8.7s3.5.9 5 4.1" stroke="#cdd1d6" stroke-width="1.25"/><circle cx="12.6" cy="6.3" r="1.9" stroke="#cdd1d6" stroke-width="1.1"/><path d="M11.2 10.1c1.5-.5 3.3.1 4.6 2.4" stroke="#cdd1d6" stroke-width="1.15"/></svg>
<svg class="s" style="left:1600.6px;top:366px;" width="15" height="14" viewBox="0 0 15 14" fill="none"><path d="M1.4 4.9h12.2c0-2-2.7-3.7-6.1-3.7S1.4 2.9 1.4 4.9z" stroke="#cdd1d6" stroke-width="1.3" stroke-linejoin="round"/><path d="M4 6.4v4.4M7.5 6.4v4.4M11 6.4v4.4" stroke="#cdd1d6" stroke-width="1.3"/><rect x="1.5" y="11.3" width="12" height="2" rx="1" stroke="#cdd1d6" stroke-width="1.2"/></svg>
<svg class="s" style="left:1623px;top:365.2px;" width="13" height="16" viewBox="0 0 13 16" fill="none"><path d="M.8 14.8V2.7A2 2 0 0 1 2.8.7h6.6a2 2 0 0 1 2 2v12.1l-1.3-.9-1.3.9-1.3-.9-1.4.9-1.3-.9-1.3.9-1.3-.9z" stroke="#cdd1d6" stroke-width="1.1" stroke-linejoin="round"/><path d="M9.3 3.3c-.3-.5-.9-.8-1.6-.8-.9 0-1.6.5-1.6 1.2s.7 1 1.6 1.2 1.7.5 1.7 1.3-.7 1.2-1.7 1.2c-.7 0-1.4-.3-1.7-.9M7.7 1.7v.8M7.7 7.4v.9" stroke="#cdd1d6" stroke-width="1.05"/><path d="M2.4 8.9h1.8M2.4 10.8h6.6" stroke="#cdd1d6" stroke-width="1.05"/></svg>
<svg class="s" style="left:1642.4px;top:366.2px;" width="15" height="13" viewBox="0 0 15 13" fill="none"><rect x="1.3" y="1.2" width="12.6" height="10.2" rx="1.5" stroke="#21b24f" stroke-width="1.5"/><path d="M3.6 3.8l4 3 4-3" stroke="#21b24f" stroke-width="1.5"/></svg>
<svg class="s" style="left:1683.6px;top:366.5px;" width="13" height="15" viewBox="0 0 13 15" fill="none"><path d="M2.4 1h6l3.4 3.4v8a2 2 0 0 1-2 2H2.4a2 2 0 0 1-2-2V3a2 2 0 0 1 2-2z" stroke="#1f84d9" stroke-width="1.3"/><path d="M8.2 1.2v2.3a1 1 0 0 0 1 1h2.4" stroke="#1f84d9" stroke-width="1.1"/><circle cx="6.2" cy="9.3" r="2.9" fill="#1f84d9"/><path d="M6 7.9v1.7l1.2.8" stroke="#fff" stroke-width=".9"/></svg>
<div class="t" style="top:365.75px;font-size:14px;line-height:14px;color:#1f84d9;font-weight:400;letter-spacing:0.400px;-webkit-text-stroke:0.25px #1f84d9;left:1700.55px;">x 3</div>
<div class="b" style="left:1797px;top:361.3px;width:98px;height:23.5px;border:1.4px solid #1f84d9;border-radius:5px;box-sizing:border-box;background:#fff;"></div>
<div class="b" style="left:1869px;top:361.3px;width:1.400000000000091px;height:23.5px;background:#1f84d9;"></div>
<svg class="s" style="left:1802px;top:365.4px;" width="16" height="15" viewBox="0 0 16 15" fill="none"><path d="M3.8 6.6V2.9A2 2 0 0 1 5.8.9h4.9l3.6 3.6v7.5a2 2 0 0 1-2 2H5.8a2 2 0 0 1-2-2v-.4" stroke="#1f84d9" stroke-width="1.3"/><path d="M10.5 1.1v2.3a1.1 1.1 0 0 0 1.1 1.1h2.5" stroke="#1f84d9" stroke-width="1.1"/><rect x=".9" y="6.4" width="9" height="5.3" rx="1.3" fill="#1f84d9"/><path d="M2.3 10.5V7.7h.9a.75.75 0 0 1 0 1.5h-.9M5 10.5V7.7h.6a1.3 1.3 0 0 1 0 2.8zM7.9 10.5V7.7h1.3M7.9 9h1" stroke="#fff" stroke-width=".55"/></svg>
<div class="t" style="top:365.75px;font-size:14px;line-height:14px;color:#1f84d9;font-weight:400;letter-spacing:1.500px;-webkit-text-stroke:0.25px #1f84d9;left:1824.45px;"><span style="margin-left:-2.00px;letter-spacing:-0.800px">1</span>8605</div>
<svg class="s" style="left:1874.5px;top:369px;" width="15" height="10" viewBox="0 0 15 10" fill="none"><path d="M1.2 1.4l6.2 6.2 6.2-6.2" stroke="#1f84d9" stroke-width="1.3"/></svg>
<div class="b" style="left:15px;top:420px;width:1888px;height:1px;background:#dcdfe3;"></div>
<div class="b" style="left:31px;top:396px;width:16px;height:16px;background:#fff;border:1.5px solid #4b4f57;border-radius:4px;box-sizing:border-box;"></div>
<div class="b av" style="left:79px;top:393px;">AD</div>
<div class="t" style="top:396.15px;font-size:14px;line-height:14px;color:#1f84d9;font-weight:400;letter-spacing:1.350px;left:108.65px;">Amara Daugherty (338)</div>
<div class="t" style="top:397.15px;font-size:14px;line-height:14px;color:#4b4f57;font-weight:400;letter-spacing:1.150px;right:1331.82px;">34.00</div>
<div class="t" style="top:397.15px;font-size:14px;line-height:14px;color:#4b4f57;font-weight:400;letter-spacing:1.150px;right:1188.96px;">$<span style="margin-left:-2.00px;letter-spacing:-1.150px">1</span>,2<span style="margin-left:-2.00px;letter-spacing:-1.150px">1</span>2.<span style="margin-left:-2.00px;letter-spacing:-1.150px">1</span><span style="margin-left:-2.00px;letter-spacing:-1.150px">1</span></div>
<div class="t" style="top:397.15px;font-size:14px;line-height:14px;color:#4b4f57;font-weight:400;letter-spacing:1.150px;right:1046.83px;">$2<span style="margin-left:-2.00px;letter-spacing:-1.150px">1</span><span style="margin-left:-2.00px;letter-spacing:-1.150px">1</span>.00</div>
<div class="t" style="top:397.15px;font-size:14px;line-height:14px;color:#c3c6cc;font-weight:400;letter-spacing:1.150px;right:893.52px;">$0.00</div>
<div class="t" style="top:397.15px;font-size:14px;line-height:14px;color:#4b4f57;font-weight:400;letter-spacing:1.150px;right:755.16px;">$<span style="margin-left:-2.00px;letter-spacing:-1.150px">1</span>,00<span style="margin-left:-2.00px;letter-spacing:-1.150px">1</span>.<span style="margin-left:-2.00px;letter-spacing:-1.150px">1</span><span style="margin-left:-2.00px;letter-spacing:-1.150px">1</span></div>
<div class="t" style="top:397.15px;font-size:14px;line-height:14px;color:#4b4f57;font-weight:400;letter-spacing:1.150px;right:616.69px;">$<span style="margin-left:-2.00px;letter-spacing:-1.150px">1</span>39.39</div>
<div class="t" style="top:397.15px;font-size:14px;line-height:14px;color:#4b4f57;font-weight:400;letter-spacing:0.970px;right:501.82px;">22 Sep 2024</div>
<div class="t" style="top:397.15px;font-size:14px;line-height:14px;color:#4b4f57;font-weight:400;letter-spacing:0.970px;right:396.02px;">23 Sep 2024</div>
<svg class="s" style="left:1538px;top:398px;" width="14" height="14" viewBox="0 0 14 14" fill="none"><path d="M3.2 1.2h7.6a2.4 2.4 0 0 1 2.4 2.4v3.9a2.4 2.4 0 0 1-2.4 2.4H6.2l-3 2.6V9.9A2.4 2.4 0 0 1 .8 7.5V3.6a2.4 2.4 0 0 1 2.4-2.4z" stroke="#cdd1d6" stroke-width="1.2" stroke-linejoin="round"/><path d="M3.6 4.3h6.6M3.6 6.7h2.6" stroke="#cdd1d6" stroke-width="1.1"/></svg>
<svg class="s" style="left:1558.6px;top:398px;" width="15" height="15" viewBox="0 0 15 15" fill="none"><path d="M12.6 7.4V4.6a2 2 0 0 0-2-2H2.8a2 2 0 0 0-2 2v7.2a2 2 0 0 0 2 2h3.4" stroke="#cdd1d6" stroke-width="1.3"/><path d="M3.6 1v3M9.8 1v3M3 6.6h7M3 9.2h2.4" stroke="#cdd1d6" stroke-width="1.2"/><path d="M7 11.5h6.6M11.4 9.4l2.2 2.1-2.2 2.1" stroke="#cdd1d6" stroke-width="1.3"/></svg>
<svg class="s" style="left:1578.6px;top:398.5px;" width="17" height="14" viewBox="0 0 17 14" fill="none"><circle cx="6" cy="4" r="3.1" stroke="#cdd1d6" stroke-width="1.2"/><path d="M.8 12.8C2.4 9.6 4.2 8.7 5.9 8.7s3.5.9 5 4.1" stroke="#cdd1d6" stroke-width="1.25"/><circle cx="12.6" cy="6.3" r="1.9" stroke="#cdd1d6" stroke-width="1.1"/><path d="M11.2 10.1c1.5-.5 3.3.1 4.6 2.4" stroke="#cdd1d6" stroke-width="1.15"/></svg>
<svg class="s" style="left:1600.6px;top:398px;" width="15" height="14" viewBox="0 0 15 14" fill="none"><path d="M1.4 4.9h12.2c0-2-2.7-3.7-6.1-3.7S1.4 2.9 1.4 4.9z" stroke="#cdd1d6" stroke-width="1.3" stroke-linejoin="round"/><path d="M4 6.4v4.4M7.5 6.4v4.4M11 6.4v4.4" stroke="#cdd1d6" stroke-width="1.3"/><rect x="1.5" y="11.3" width="12" height="2" rx="1" stroke="#cdd1d6" stroke-width="1.2"/></svg>
<svg class="s" style="left:1623px;top:397.2px;" width="13" height="16" viewBox="0 0 13 16" fill="none"><path d="M.8 14.8V2.7A2 2 0 0 1 2.8.7h6.6a2 2 0 0 1 2 2v12.1l-1.3-.9-1.3.9-1.3-.9-1.4.9-1.3-.9-1.3.9-1.3-.9z" stroke="#cdd1d6" stroke-width="1.1" stroke-linejoin="round"/><path d="M9.3 3.3c-.3-.5-.9-.8-1.6-.8-.9 0-1.6.5-1.6 1.2s.7 1 1.6 1.2 1.7.5 1.7 1.3-.7 1.2-1.7 1.2c-.7 0-1.4-.3-1.7-.9M7.7 1.7v.8M7.7 7.4v.9" stroke="#cdd1d6" stroke-width="1.05"/><path d="M2.4 8.9h1.8M2.4 10.8h6.6" stroke="#cdd1d6" stroke-width="1.05"/></svg>
<svg class="s" style="left:1642.4px;top:398.2px;" width="15" height="13" viewBox="0 0 15 13" fill="none"><rect x="1.3" y="1.2" width="12.6" height="10.2" rx="1.5" stroke="#21b24f" stroke-width="1.5"/><path d="M3.6 3.8l4 3 4-3" stroke="#21b24f" stroke-width="1.5"/></svg>
<svg class="s" style="left:1683.6px;top:398.5px;" width="13" height="15" viewBox="0 0 13 15" fill="none"><path d="M2.4 1h6l3.4 3.4v8a2 2 0 0 1-2 2H2.4a2 2 0 0 1-2-2V3a2 2 0 0 1 2-2z" stroke="#1f84d9" stroke-width="1.3"/><path d="M8.2 1.2v2.3a1 1 0 0 0 1 1h2.4" stroke="#1f84d9" stroke-width="1.1"/><circle cx="6.2" cy="9.3" r="2.9" fill="#1f84d9"/><path d="M6 7.9v1.7l1.2.8" stroke="#fff" stroke-width=".9"/></svg>
<div class="t" style="top:397.75px;font-size:14px;line-height:14px;color:#1f84d9;font-weight:400;letter-spacing:1.500px;-webkit-text-stroke:0.25px #1f84d9;left:1700.15px;">3<span style="margin-left:-2.00px;letter-spacing:-0.800px">1</span>674</div>
<div class="b" style="left:1797px;top:393.3px;width:98px;height:23.5px;border:1.4px solid #1f84d9;border-radius:5px;box-sizing:border-box;background:#fff;"></div>
<div class="b" style="left:1869px;top:393.3px;width:1.400000000000091px;height:23.5px;background:#1f84d9;"></div>
<svg class="s" style="left:1802px;top:397.4px;" width="16" height="15" viewBox="0 0 16 15" fill="none"><path d="M3.8 6.6V2.9A2 2 0 0 1 5.8.9h4.9l3.6 3.6v7.5a2 2 0 0 1-2 2H5.8a2 2 0 0 1-2-2v-.4" stroke="#1f84d9" stroke-width="1.3"/><path d="M10.5 1.1v2.3a1.1 1.1 0 0 0 1.1 1.1h2.5" stroke="#1f84d9" stroke-width="1.1"/><rect x=".9" y="6.4" width="9" height="5.3" rx="1.3" fill="#1f84d9"/><path d="M2.3 10.5V7.7h.9a.75.75 0 0 1 0 1.5h-.9M5 10.5V7.7h.6a1.3 1.3 0 0 1 0 2.8zM7.9 10.5V7.7h1.3M7.9 9h1" stroke="#fff" stroke-width=".55"/></svg>
<div class="t" style="top:397.75px;font-size:14px;line-height:14px;color:#1f84d9;font-weight:400;letter-spacing:1.500px;-webkit-text-stroke:0.25px #1f84d9;left:1824.50px;"><span style="margin-left:-2.00px;letter-spacing:-0.800px">1</span>9892</div>
<svg class="s" style="left:1874.5px;top:401px;" width="15" height="10" viewBox="0 0 15 10" fill="none"><path d="M1.2 1.4l6.2 6.2 6.2-6.2" stroke="#1f84d9" stroke-width="1.3"/></svg>
<div class="b" style="left:15px;top:452px;width:1888px;height:1px;background:#dcdfe3;"></div>
<div class="b" style="left:31px;top:428px;width:16px;height:16px;background:#fff;border:1.5px solid #4b4f57;border-radius:4px;box-sizing:border-box;"></div>
<div class="b av" style="left:79px;top:425px;">AC</div>
<div class="t" style="top:428.15px;font-size:14px;line-height:14px;color:#1f84d9;font-weight:400;letter-spacing:1.350px;left:108.65px;">America Cruickshank (<span style="margin-left:-2.00px;letter-spacing:-0.950px">1</span>80)</div>
<div class="t" style="top:429.15px;font-size:14px;line-height:14px;color:#4b4f57;font-weight:400;letter-spacing:1.150px;right:1331.82px;">24.50</div>
<div class="t" style="top:429.15px;font-size:14px;line-height:14px;color:#4b4f57;font-weight:400;letter-spacing:1.150px;right:1188.94px;">$890.0<span style="margin-left:-2.00px;letter-spacing:-1.150px">1</span></div>
<div class="t" style="top:429.15px;font-size:14px;line-height:14px;color:#4b4f57;font-weight:400;letter-spacing:1.150px;right:1046.79px;">$237.00</div>
<div class="t" style="top:429.15px;font-size:14px;line-height:14px;color:#c3c6cc;font-weight:400;letter-spacing:1.150px;right:893.52px;">$0.00</div>
<div class="t" style="top:429.15px;font-size:14px;line-height:14px;color:#4b4f57;font-weight:400;letter-spacing:1.150px;right:755.14px;">$653.0<span style="margin-left:-2.00px;letter-spacing:-1.150px">1</span></div>
<div class="t" style="top:429.15px;font-size:14px;line-height:14px;color:#4b4f57;font-weight:400;letter-spacing:1.150px;right:616.74px;">$<span style="margin-left:-2.00px;letter-spacing:-1.150px">1</span>02.35</div>
<div class="t" style="top:429.15px;font-size:14px;line-height:14px;color:#4b4f57;font-weight:400;letter-spacing:0.970px;right:501.82px;">22 Sep 2024</div>
<div class="t" style="top:429.15px;font-size:14px;line-height:14px;color:#4b4f57;font-weight:400;letter-spacing:0.970px;right:396.02px;">23 Sep 2024</div>
<svg class="s" style="left:1538px;top:430px;" width="14" height="14" viewBox="0 0 14 14" fill="none"><path d="M3.2 1.2h7.6a2.4 2.4 0 0 1 2.4 2.4v3.9a2.4 2.4 0 0 1-2.4 2.4H6.2l-3 2.6V9.9A2.4 2.4 0 0 1 .8 7.5V3.6a2.4 2.4 0 0 1 2.4-2.4z" stroke="#cdd1d6" stroke-width="1.2" stroke-linejoin="round"/><path d="M3.6 4.3h6.6M3.6 6.7h2.6" stroke="#cdd1d6" stroke-width="1.1"/></svg>
<svg class="s" style="left:1558.6px;top:430px;" width="15" height="15" viewBox="0 0 15 15" fill="none"><path d="M12.6 7.4V4.6a2 2 0 0 0-2-2H2.8a2 2 0 0 0-2 2v7.2a2 2 0 0 0 2 2h3.4" stroke="#cdd1d6" stroke-width="1.3"/><path d="M3.6 1v3M9.8 1v3M3 6.6h7M3 9.2h2.4" stroke="#cdd1d6" stroke-width="1.2"/><path d="M7 11.5h6.6M11.4 9.4l2.2 2.1-2.2 2.1" stroke="#cdd1d6" stroke-width="1.3"/></svg>
<svg class="s" style="left:1578.6px;top:430.5px;" width="17" height="14" viewBox="0 0 17 14" fill="none"><circle cx="6" cy="4" r="3.1" stroke="#cdd1d6" stroke-width="1.2"/><path d="M.8 12.8C2.4 9.6 4.2 8.7 5.9 8.7s3.5.9 5 4.1" stroke="#cdd1d6" stroke-width="1.25"/><circle cx="12.6" cy="6.3" r="1.9" stroke="#cdd1d6" stroke-width="1.1"/><path d="M11.2 10.1c1.5-.5 3.3.1 4.6 2.4" stroke="#cdd1d6" stroke-width="1.15"/></svg>
<svg class="s" style="left:1600.6px;top:430px;" width="15" height="14" viewBox="0 0 15 14" fill="none"><path d="M1.4 4.9h12.2c0-2-2.7-3.7-6.1-3.7S1.4 2.9 1.4 4.9z" stroke="#f3a01f" stroke-width="1.3" stroke-linejoin="round"/><path d="M4 6.4v4.4M7.5 6.4v4.4M11 6.4v4.4" stroke="#f3a01f" stroke-width="1.3"/><rect x="1.5" y="11.3" width="12" height="2" rx="1" stroke="#f3a01f" stroke-width="1.2"/></svg>
<svg class="s" style="left:1623px;top:429.2px;" width="13" height="16" viewBox="0 0 13 16" fill="none"><path d="M.8 14.8V2.7A2 2 0 0 1 2.8.7h6.6a2 2 0 0 1 2 2v12.1l-1.3-.9-1.3.9-1.3-.9-1.4.9-1.3-.9-1.3.9-1.3-.9z" stroke="#cdd1d6" stroke-width="1.1" stroke-linejoin="round"/><path d="M9.3 3.3c-.3-.5-.9-.8-1.6-.8-.9 0-1.6.5-1.6 1.2s.7 1 1.6 1.2 1.7.5 1.7 1.3-.7 1.2-1.7 1.2c-.7 0-1.4-.3-1.7-.9M7.7 1.7v.8M7.7 7.4v.9" stroke="#cdd1d6" stroke-width="1.05"/><path d="M2.4 8.9h1.8M2.4 10.8h6.6" stroke="#cdd1d6" stroke-width="1.05"/></svg>
<svg class="s" style="left:1642.4px;top:430.2px;" width="15" height="13" viewBox="0 0 15 13" fill="none"><rect x="1.3" y="1.2" width="12.6" height="10.2" rx="1.5" stroke="#21b24f" stroke-width="1.5"/><path d="M3.6 3.8l4 3 4-3" stroke="#21b24f" stroke-width="1.5"/></svg>
<svg class="s" style="left:1683.6px;top:430.5px;" width="13" height="15" viewBox="0 0 13 15" fill="none"><path d="M2.4 1h6l3.4 3.4v8a2 2 0 0 1-2 2H2.4a2 2 0 0 1-2-2V3a2 2 0 0 1 2-2z" stroke="#1f84d9" stroke-width="1.3"/><path d="M8.2 1.2v2.3a1 1 0 0 0 1 1h2.4" stroke="#1f84d9" stroke-width="1.1"/><circle cx="6.2" cy="9.3" r="2.9" fill="#1f84d9"/><path d="M6 7.9v1.7l1.2.8" stroke="#fff" stroke-width=".9"/></svg>
<div class="t" style="top:429.75px;font-size:14px;line-height:14px;color:#1f84d9;font-weight:400;letter-spacing:0.400px;-webkit-text-stroke:0.25px #1f84d9;left:1700.55px;">x 2</div>
<div class="b" style="left:1797px;top:425.3px;width:98px;height:23.5px;border:1.4px solid #1f84d9;border-radius:5px;box-sizing:border-box;background:#fff;"></div>
<div class="b" style="left:1869px;top:425.3px;width:1.400000000000091px;height:23.5px;background:#1f84d9;"></div>
<svg class="s" style="left:1802px;top:429.4px;" width="16" height="15" viewBox="0 0 16 15" fill="none"><path d="M3.8 6.6V2.9A2 2 0 0 1 5.8.9h4.9l3.6 3.6v7.5a2 2 0 0 1-2 2H5.8a2 2 0 0 1-2-2v-.4" stroke="#1f84d9" stroke-width="1.3"/><path d="M10.5 1.1v2.3a1.1 1.1 0 0 0 1.1 1.1h2.5" stroke="#1f84d9" stroke-width="1.1"/><rect x=".9" y="6.4" width="9" height="5.3" rx="1.3" fill="#1f84d9"/><path d="M2.3 10.5V7.7h.9a.75.75 0 0 1 0 1.5h-.9M5 10.5V7.7h.6a1.3 1.3 0 0 1 0 2.8zM7.9 10.5V7.7h1.3M7.9 9h1" stroke="#fff" stroke-width=".55"/></svg>
<div class="t" style="top:429.75px;font-size:14px;line-height:14px;color:#1f84d9;font-weight:400;letter-spacing:1.500px;-webkit-text-stroke:0.25px #1f84d9;left:1824.50px;"><span style="margin-left:-2.00px;letter-spacing:-0.800px">1</span>9847</div>
<svg class="s" style="left:1874.5px;top:433px;" width="15" height="10" viewBox="0 0 15 10" fill="none"><path d="M1.2 1.4l6.2 6.2 6.2-6.2" stroke="#1f84d9" stroke-width="1.3"/></svg>
<div class="b" style="left:15px;top:484px;width:1888px;height:1px;background:#dcdfe3;"></div>
<div class="b" style="left:31px;top:460px;width:16px;height:16px;background:#fff;border:1.5px solid #4b4f57;border-radius:4px;box-sizing:border-box;"></div>
<div class="b av" style="left:79px;top:457px;">AM</div>
<div class="t" style="top:460.15px;font-size:14px;line-height:14px;color:#1f84d9;font-weight:400;letter-spacing:1.350px;left:108.65px;">Angeline Mann (404)</div>
<div class="t" style="top:461.15px;font-size:14px;line-height:14px;color:#4b4f57;font-weight:400;letter-spacing:1.150px;right:1331.82px;">45.00</div>
<div class="t" style="top:461.15px;font-size:14px;line-height:14px;color:#4b4f57;font-weight:400;letter-spacing:1.150px;right:1186.82px;">$<span style="margin-left:-2.00px;letter-spacing:-1.150px">1</span>,708.00</div>
<div class="t" style="top:461.15px;font-size:14px;line-height:14px;color:#4b4f57;font-weight:400;letter-spacing:1.150px;right:1046.79px;">$370.00</div>
<div class="t" style="top:461.15px;font-size:14px;line-height:14px;color:#c3c6cc;font-weight:400;letter-spacing:1.150px;right:893.52px;">$0.00</div>
<div class="t" style="top:461.15px;font-size:14px;line-height:14px;color:#4b4f57;font-weight:400;letter-spacing:1.150px;right:753.02px;">$<span style="margin-left:-2.00px;letter-spacing:-1.150px">1</span>,338.00</div>
<div class="t" style="top:461.15px;font-size:14px;line-height:14px;color:#4b4f57;font-weight:400;letter-spacing:1.150px;right:616.64px;">$<span style="margin-left:-2.00px;letter-spacing:-1.150px">1</span>96.42</div>
<div class="t" style="top:461.15px;font-size:14px;line-height:14px;color:#4b4f57;font-weight:400;letter-spacing:0.970px;right:501.82px;">22 Sep 2024</div>
<div class="t" style="top:461.15px;font-size:14px;line-height:14px;color:#4b4f57;font-weight:400;letter-spacing:0.970px;right:396.02px;">23 Sep 2024</div>
<svg class="s" style="left:1538px;top:462px;" width="14" height="14" viewBox="0 0 14 14" fill="none"><path d="M3.2 1.2h7.6a2.4 2.4 0 0 1 2.4 2.4v3.9a2.4 2.4 0 0 1-2.4 2.4H6.2l-3 2.6V9.9A2.4 2.4 0 0 1 .8 7.5V3.6a2.4 2.4 0 0 1 2.4-2.4z" stroke="#cdd1d6" stroke-width="1.2" stroke-linejoin="round"/><path d="M3.6 4.3h6.6M3.6 6.7h2.6" stroke="#cdd1d6" stroke-width="1.1"/></svg>
<svg class="s" style="left:1558.6px;top:462px;" width="15" height="15" viewBox="0 0 15 15" fill="none"><path d="M12.6 7.4V4.6a2 2 0 0 0-2-2H2.8a2 2 0 0 0-2 2v7.2a2 2 0 0 0 2 2h3.4" stroke="#cdd1d6" stroke-width="1.3"/><path d="M3.6 1v3M9.8 1v3M3 6.6h7M3 9.2h2.4" stroke="#cdd1d6" stroke-width="1.2"/><path d="M7 11.5h6.6M11.4 9.4l2.2 2.1-2.2 2.1" stroke="#cdd1d6" stroke-width="1.3"/></svg>
<svg class="s" style="left:1578.6px;top:462.5px;" width="17" height="14" viewBox="0 0 17 14" fill="none"><circle cx="6" cy="4" r="3.1" stroke="#cdd1d6" stroke-width="1.2"/><path d="M.8 12.8C2.4 9.6 4.2 8.7 5.9 8.7s3.5.9 5 4.1" stroke="#cdd1d6" stroke-width="1.25"/><circle cx="12.6" cy="6.3" r="1.9" stroke="#cdd1d6" stroke-width="1.1"/><path d="M11.2 10.1c1.5-.5 3.3.1 4.6 2.4" stroke="#cdd1d6" stroke-width="1.15"/></svg>
<svg class="s" style="left:1600.6px;top:462px;" width="15" height="14" viewBox="0 0 15 14" fill="none"><path d="M1.4 4.9h12.2c0-2-2.7-3.7-6.1-3.7S1.4 2.9 1.4 4.9z" stroke="#cdd1d6" stroke-width="1.3" stroke-linejoin="round"/><path d="M4 6.4v4.4M7.5 6.4v4.4M11 6.4v4.4" stroke="#cdd1d6" stroke-width="1.3"/><rect x="1.5" y="11.3" width="12" height="2" rx="1" stroke="#cdd1d6" stroke-width="1.2"/></svg>
<svg class="s" style="left:1623px;top:461.2px;" width="13" height="16" viewBox="0 0 13 16" fill="none"><path d="M.8 14.8V2.7A2 2 0 0 1 2.8.7h6.6a2 2 0 0 1 2 2v12.1l-1.3-.9-1.3.9-1.3-.9-1.4.9-1.3-.9-1.3.9-1.3-.9z" stroke="#cdd1d6" stroke-width="1.1" stroke-linejoin="round"/><path d="M9.3 3.3c-.3-.5-.9-.8-1.6-.8-.9 0-1.6.5-1.6 1.2s.7 1 1.6 1.2 1.7.5 1.7 1.3-.7 1.2-1.7 1.2c-.7 0-1.4-.3-1.7-.9M7.7 1.7v.8M7.7 7.4v.9" stroke="#cdd1d6" stroke-width="1.05"/><path d="M2.4 8.9h1.8M2.4 10.8h6.6" stroke="#cdd1d6" stroke-width="1.05"/></svg>
<svg class="s" style="left:1642.4px;top:462.2px;" width="15" height="13" viewBox="0 0 15 13" fill="none"><rect x="1.3" y="1.2" width="12.6" height="10.2" rx="1.5" stroke="#21b24f" stroke-width="1.5"/><path d="M3.6 3.8l4 3 4-3" stroke="#21b24f" stroke-width="1.5"/></svg>
<svg class="s" style="left:1683.6px;top:462.5px;" width="13" height="15" viewBox="0 0 13 15" fill="none"><path d="M2.4 1h6l3.4 3.4v8a2 2 0 0 1-2 2H2.4a2 2 0 0 1-2-2V3a2 2 0 0 1 2-2z" stroke="#1f84d9" stroke-width="1.3"/><path d="M8.2 1.2v2.3a1 1 0 0 0 1 1h2.4" stroke="#1f84d9" stroke-width="1.1"/><circle cx="6.2" cy="9.3" r="2.9" fill="#1f84d9"/><path d="M6 7.9v1.7l1.2.8" stroke="#fff" stroke-width=".9"/></svg>
<div class="t" style="top:461.75px;font-size:14px;line-height:14px;color:#1f84d9;font-weight:400;letter-spacing:0.400px;-webkit-text-stroke:0.25px #1f84d9;left:1700.55px;">x 2</div>
<div class="b" style="left:1797px;top:457.3px;width:98px;height:23.5px;border:1.4px solid #1f84d9;border-radius:5px;box-sizing:border-box;background:#fff;"></div>
<div class="b" style="left:1869px;top:457.3px;width:1.400000000000091px;height:23.5px;background:#1f84d9;"></div>
<svg class="s" style="left:1802px;top:461.4px;" width="16" height="15" viewBox="0 0 16 15" fill="none"><path d="M3.8 6.6V2.9A2 2 0 0 1 5.8.9h4.9l3.6 3.6v7.5a2 2 0 0 1-2 2H5.8a2 2 0 0 1-2-2v-.4" stroke="#1f84d9" stroke-width="1.3"/><path d="M10.5 1.1v2.3a1.1 1.1 0 0 0 1.1 1.1h2.5" stroke="#1f84d9" stroke-width="1.1"/><rect x=".9" y="6.4" width="9" height="5.3" rx="1.3" fill="#1f84d9"/><path d="M2.3 10.5V7.7h.9a.75.75 0 0 1 0 1.5h-.9M5 10.5V7.7h.6a1.3 1.3 0 0 1 0 2.8zM7.9 10.5V7.7h1.3M7.9 9h1" stroke="#fff" stroke-width=".55"/></svg>
<div class="t" style="top:461.75px;font-size:14px;line-height:14px;color:#1f84d9;font-weight:400;letter-spacing:1.500px;-webkit-text-stroke:0.25px #1f84d9;left:1824.45px;"><span style="margin-left:-2.00px;letter-spacing:-0.800px">1</span>9866</div>
<svg class="s" style="left:1874.5px;top:465px;" width="15" height="10" viewBox="0 0 15 10" fill="none"><path d="M1.2 1.4l6.2 6.2 6.2-6.2" stroke="#1f84d9" stroke-width="1.3"/></svg>
<div class="b" style="left:15px;top:516px;width:1888px;height:1px;background:#dcdfe3;"></div>
<div class="b" style="left:31px;top:492px;width:16px;height:16px;background:#fff;border:1.5px solid #4b4f57;border-radius:4px;box-sizing:border-box;"></div>
<svg class="s" style="left:79px;top:489px;" width="24" height="24" viewBox="0 0 24 24" fill="none"><circle cx="12" cy="12" r="11.6" fill="#fff" stroke="#f0f0f0" stroke-width=".6"/><path d="M5.9 7.6a6 6.7 0 0 1 12 0c0 2.6-.9 4.6-2.1 5.6v6.4c1 .9 2.4 1.7 3.8 2.9-1.9 1-4.7 1.4-7.7 1.4s-5.7-.4-7.6-1.4c1.4-1.2 2.7-2 3.7-2.9v-6.4C6.8 12.2 5.9 10.2 5.9 7.6z" fill="#3d3d3f"/></svg>
<div class="t" style="top:492.15px;font-size:14px;line-height:14px;color:#1f84d9;font-weight:400;letter-spacing:1.350px;left:108.65px;">Ara Kilback (327)</div>
<div class="t" style="top:493.15px;font-size:14px;line-height:14px;color:#f3a01f;font-weight:700;letter-spacing:1.562px;right:1331.35px;">43.50</div>
<svg class="s" style="left:523.5px;top:492.7px;" width="15" height="15" viewBox="0 0 15 15" fill="none"><path d="M3.6 12.4A6 6 0 1 1 12.6 9.6" stroke="#f3a01f" stroke-width="1.05" stroke-dasharray="2 .45"/><circle cx="5.4" cy="13.5" r=".55" fill="#f3a01f"/><circle cx="7.3" cy="14" r=".55" fill="#f3a01f"/><path d="M11.2 9.4l2.6-.4-.9 2.3z" fill="#f3a01f"/><circle cx="7.3" cy="7.3" r="3.7" stroke="#f3a01f" stroke-width="1.15"/><path d="M6.6 5.6l.9 1.9" stroke="#f3a01f" stroke-width="1.2" stroke-linecap="round"/></svg>
<div class="t" style="top:493.15px;font-size:14px;line-height:14px;color:#4b4f57;font-weight:400;letter-spacing:1.150px;right:1186.77px;">$<span style="margin-left:-2.00px;letter-spacing:-1.150px">1</span>,684.58</div>
<div class="t" style="top:493.15px;font-size:14px;line-height:14px;color:#4b4f57;font-weight:400;letter-spacing:1.150px;right:1046.79px;">$439.00</div>
<div class="t" style="top:493.15px;font-size:14px;line-height:14px;color:#c3c6cc;font-weight:400;letter-spacing:1.150px;right:893.52px;">$0.00</div>
<div class="t" style="top:493.15px;font-size:14px;line-height:14px;color:#4b4f57;font-weight:400;letter-spacing:1.150px;right:752.97px;">$<span style="margin-left:-2.00px;letter-spacing:-1.150px">1</span>,245.58</div>
<div class="t" style="top:493.15px;font-size:14px;line-height:14px;color:#4b4f57;font-weight:400;letter-spacing:1.150px;right:616.74px;">$<span style="margin-left:-2.00px;letter-spacing:-1.150px">1</span>64.06</div>
<div class="t" style="top:493.15px;font-size:14px;line-height:14px;color:#4b4f57;font-weight:400;letter-spacing:0.970px;right:501.82px;">22 Sep 2024</div>
<div class="t" style="top:493.15px;font-size:14px;line-height:14px;color:#4b4f57;font-weight:400;letter-spacing:0.970px;right:396.02px;">23 Sep 2024</div>
<svg class="s" style="left:1538px;top:494px;" width="14" height="14" viewBox="0 0 14 14" fill="none"><path d="M3.2 1.2h7.6a2.4 2.4 0 0 1 2.4 2.4v3.9a2.4 2.4 0 0 1-2.4 2.4H6.2l-3 2.6V9.9A2.4 2.4 0 0 1 .8 7.5V3.6a2.4 2.4 0 0 1 2.4-2.4z" stroke="#cdd1d6" stroke-width="1.2" stroke-linejoin="round"/><path d="M3.6 4.3h6.6M3.6 6.7h2.6" stroke="#cdd1d6" stroke-width="1.1"/></svg>
<svg class="s" style="left:1558.6px;top:494px;" width="15" height="15" viewBox="0 0 15 15" fill="none"><path d="M12.6 7.4V4.6a2 2 0 0 0-2-2H2.8a2 2 0 0 0-2 2v7.2a2 2 0 0 0 2 2h3.4" stroke="#cdd1d6" stroke-width="1.3"/><path d="M3.6 1v3M9.8 1v3M3 6.6h7M3 9.2h2.4" stroke="#cdd1d6" stroke-width="1.2"/><path d="M7 11.5h6.6M11.4 9.4l2.2 2.1-2.2 2.1" stroke="#cdd1d6" stroke-width="1.3"/></svg>
<svg class="s" style="left:1578.6px;top:494.5px;" width="17" height="14" viewBox="0 0 17 14" fill="none"><circle cx="6" cy="4" r="3.1" stroke="#cdd1d6" stroke-width="1.2"/><path d="M.8 12.8C2.4 9.6 4.2 8.7 5.9 8.7s3.5.9 5 4.1" stroke="#cdd1d6" stroke-width="1.25"/><circle cx="12.6" cy="6.3" r="1.9" stroke="#cdd1d6" stroke-width="1.1"/><path d="M11.2 10.1c1.5-.5 3.3.1 4.6 2.4" stroke="#cdd1d6" stroke-width="1.15"/></svg>
<svg class="s" style="left:1600.6px;top:494px;" width="15" height="14" viewBox="0 0 15 14" fill="none"><path d="M1.4 4.9h12.2c0-2-2.7-3.7-6.1-3.7S1.4 2.9 1.4 4.9z" stroke="#cdd1d6" stroke-width="1.3" stroke-linejoin="round"/><path d="M4 6.4v4.4M7.5 6.4v4.4M11 6.4v4.4" stroke="#cdd1d6" stroke-width="1.3"/><rect x="1.5" y="11.3" width="12" height="2" rx="1" stroke="#cdd1d6" stroke-width="1.2"/></svg>
<svg class="s" style="left:1623px;top:493.2px;" width="13" height="16" viewBox="0 0 13 16" fill="none"><path d="M.8 14.8V2.7A2 2 0 0 1 2.8.7h6.6a2 2 0 0 1 2 2v12.1l-1.3-.9-1.3.9-1.3-.9-1.4.9-1.3-.9-1.3.9-1.3-.9z" stroke="#cdd1d6" stroke-width="1.1" stroke-linejoin="round"/><path d="M9.3 3.3c-.3-.5-.9-.8-1.6-.8-.9 0-1.6.5-1.6 1.2s.7 1 1.6 1.2 1.7.5 1.7 1.3-.7 1.2-1.7 1.2c-.7 0-1.4-.3-1.7-.9M7.7 1.7v.8M7.7 7.4v.9" stroke="#cdd1d6" stroke-width="1.05"/><path d="M2.4 8.9h1.8M2.4 10.8h6.6" stroke="#cdd1d6" stroke-width="1.05"/></svg>
<svg class="s" style="left:1642.4px;top:494.2px;" width="15" height="13" viewBox="0 0 15 13" fill="none"><rect x="1.3" y="1.2" width="12.6" height="10.2" rx="1.5" stroke="#21b24f" stroke-width="1.5"/><path d="M3.6 3.8l4 3 4-3" stroke="#21b24f" stroke-width="1.5"/></svg>
<svg class="s" style="left:1683.6px;top:494.5px;" width="13" height="15" viewBox="0 0 13 15" fill="none"><path d="M2.4 1h6l3.4 3.4v8a2 2 0 0 1-2 2H2.4a2 2 0 0 1-2-2V3a2 2 0 0 1 2-2z" stroke="#1f84d9" stroke-width="1.3"/><path d="M8.2 1.2v2.3a1 1 0 0 0 1 1h2.4" stroke="#1f84d9" stroke-width="1.1"/><circle cx="6.2" cy="9.3" r="2.9" fill="#1f84d9"/><path d="M6 7.9v1.7l1.2.8" stroke="#fff" stroke-width=".9"/></svg>
<div class="t" style="top:493.75px;font-size:14px;line-height:14px;color:#1f84d9;font-weight:400;letter-spacing:0.400px;-webkit-text-stroke:0.25px #1f84d9;left:1700.55px;">x 2</div>
<div class="b" style="left:1797px;top:489.3px;width:98px;height:23.499999999999943px;border:1.4px solid #1f84d9;border-radius:5px;box-sizing:border-box;background:#fff;"></div>
<div class="b" style="left:1869px;top:489.3px;width:1.400000000000091px;height:23.499999999999943px;background:#1f84d9;"></div>
<svg class="s" style="left:1802px;top:493.4px;" width="16" height="15" viewBox="0 0 16 15" fill="none"><path d="M3.8 6.6V2.9A2 2 0 0 1 5.8.9h4.9l3.6 3.6v7.5a2 2 0 0 1-2 2H5.8a2 2 0 0 1-2-2v-.4" stroke="#1f84d9" stroke-width="1.3"/><path d="M10.5 1.1v2.3a1.1 1.1 0 0 0 1.1 1.1h2.5" stroke="#1f84d9" stroke-width="1.1"/><rect x=".9" y="6.4" width="9" height="5.3" rx="1.3" fill="#1f84d9"/><path d="M2.3 10.5V7.7h.9a.75.75 0 0 1 0 1.5h-.9M5 10.5V7.7h.6a1.3 1.3 0 0 1 0 2.8zM7.9 10.5V7.7h1.3M7.9 9h1" stroke="#fff" stroke-width=".55"/></svg>
<div class="t" style="top:493.75px;font-size:14px;line-height:14px;color:#1f84d9;font-weight:400;letter-spacing:1.500px;-webkit-text-stroke:0.25px #1f84d9;left:1824.50px;"><span style="margin-left:-2.00px;letter-spacing:-0.800px">1</span>9907</div>
<svg class="s" style="left:1874.5px;top:497px;" width="15" height="10" viewBox="0 0 15 10" fill="none"><path d="M1.2 1.4l6.2 6.2 6.2-6.2" stroke="#1f84d9" stroke-width="1.3"/></svg>
<div class="b" style="left:15px;top:548px;width:1888px;height:1px;background:#dcdfe3;"></div>
<div class="b" style="left:31px;top:524px;width:16px;height:16px;background:#fff;border:1.5px solid #4b4f57;border-radius:4px;box-sizing:border-box;"></div>
<div class="b av" style="left:79px;top:521px;">AD</div>
<div class="t" style="top:524.15px;font-size:14px;line-height:14px;color:#1f84d9;font-weight:400;letter-spacing:1.350px;left:108.65px;">Arno Dicki (<span style="margin-left:-2.00px;letter-spacing:-0.950px">1</span>2)</div>
<div class="t" style="top:525.15px;font-size:14px;line-height:14px;color:#f3a01f;font-weight:700;letter-spacing:1.888px;right:1331.03px;">4<span style="margin-left:-2.00px;letter-spacing:-0.412px">1</span>.50</div>
<svg class="s" style="left:526.5px;top:524.7px;" width="15" height="15" viewBox="0 0 15 15" fill="none"><path d="M3.6 12.4A6 6 0 1 1 12.6 9.6" stroke="#f3a01f" stroke-width="1.05" stroke-dasharray="2 .45"/><circle cx="5.4" cy="13.5" r=".55" fill="#f3a01f"/><circle cx="7.3" cy="14" r=".55" fill="#f3a01f"/><path d="M11.2 9.4l2.6-.4-.9 2.3z" fill="#f3a01f"/><circle cx="7.3" cy="7.3" r="3.7" stroke="#f3a01f" stroke-width="1.15"/><path d="M6.6 5.6l.9 1.9" stroke="#f3a01f" stroke-width="1.2" stroke-linecap="round"/></svg>
<div class="t" style="top:525.15px;font-size:14px;line-height:14px;color:#4b4f57;font-weight:400;letter-spacing:1.150px;right:1186.77px;">$<span style="margin-left:-2.00px;letter-spacing:-1.150px">1</span>,540.95</div>
<div class="t" style="top:525.15px;font-size:14px;line-height:14px;color:#4b4f57;font-weight:400;letter-spacing:1.150px;right:1046.79px;">$3<span style="margin-left:-2.00px;letter-spacing:-1.150px">1</span>7.00</div>
<div class="t" style="top:525.15px;font-size:14px;line-height:14px;color:#c3c6cc;font-weight:400;letter-spacing:1.150px;right:893.52px;">$0.00</div>
<div class="t" style="top:525.15px;font-size:14px;line-height:14px;color:#4b4f57;font-weight:400;letter-spacing:1.150px;right:752.97px;">$<span style="margin-left:-2.00px;letter-spacing:-1.150px">1</span>,223.95</div>
<div class="t" style="top:525.15px;font-size:14px;line-height:14px;color:#4b4f57;font-weight:400;letter-spacing:1.150px;right:616.69px;">$<span style="margin-left:-2.00px;letter-spacing:-1.150px">1</span>57.29</div>
<div class="t" style="top:525.15px;font-size:14px;line-height:14px;color:#4b4f57;font-weight:400;letter-spacing:0.970px;right:501.82px;">22 Sep 2024</div>
<div class="t" style="top:525.15px;font-size:14px;line-height:14px;color:#4b4f57;font-weight:400;letter-spacing:0.970px;right:396.02px;">23 Sep 2024</div>
<svg class="s" style="left:1538px;top:526px;" width="14" height="14" viewBox="0 0 14 14" fill="none"><path d="M3.2 1.2h7.6a2.4 2.4 0 0 1 2.4 2.4v3.9a2.4 2.4 0 0 1-2.4 2.4H6.2l-3 2.6V9.9A2.4 2.4 0 0 1 .8 7.5V3.6a2.4 2.4 0 0 1 2.4-2.4z" stroke="#cdd1d6" stroke-width="1.2" stroke-linejoin="round"/><path d="M3.6 4.3h6.6M3.6 6.7h2.6" stroke="#cdd1d6" stroke-width="1.1"/></svg>
<svg class="s" style="left:1558.6px;top:526px;" width="15" height="15" viewBox="0 0 15 15" fill="none"><path d="M12.6 7.4V4.6a2 2 0 0 0-2-2H2.8a2 2 0 0 0-2 2v7.2a2 2 0 0 0 2 2h3.4" stroke="#cdd1d6" stroke-width="1.3"/><path d="M3.6 1v3M9.8 1v3M3 6.6h7M3 9.2h2.4" stroke="#cdd1d6" stroke-width="1.2"/><path d="M7 11.5h6.6M11.4 9.4l2.2 2.1-2.2 2.1" stroke="#cdd1d6" stroke-width="1.3"/></svg>
<svg class="s" style="left:1578.6px;top:526.5px;" width="17" height="14" viewBox="0 0 17 14" fill="none"><circle cx="6" cy="4" r="3.1" stroke="#cdd1d6" stroke-width="1.2"/><path d="M.8 12.8C2.4 9.6 4.2 8.7 5.9 8.7s3.5.9 5 4.1" stroke="#cdd1d6" stroke-width="1.25"/><circle cx="12.6" cy="6.3" r="1.9" stroke="#cdd1d6" stroke-width="1.1"/><path d="M11.2 10.1c1.5-.5 3.3.1 4.6 2.4" stroke="#cdd1d6" stroke-width="1.15"/></svg>
<svg class="s" style="left:1600.6px;top:526px;" width="15" height="14" viewBox="0 0 15 14" fill="none"><path d="M1.4 4.9h12.2c0-2-2.7-3.7-6.1-3.7S1.4 2.9 1.4 4.9z" stroke="#cdd1d6" stroke-width="1.3" stroke-linejoin="round"/><path d="M4 6.4v4.4M7.5 6.4v4.4M11 6.4v4.4" stroke="#cdd1d6" stroke-width="1.3"/><rect x="1.5" y="11.3" width="12" height="2" rx="1" stroke="#cdd1d6" stroke-width="1.2"/></svg>
<svg class="s" style="left:1623px;top:525.2px;" width="13" height="16" viewBox="0 0 13 16" fill="none"><path d="M.8 14.8V2.7A2 2 0 0 1 2.8.7h6.6a2 2 0 0 1 2 2v12.1l-1.3-.9-1.3.9-1.3-.9-1.4.9-1.3-.9-1.3.9-1.3-.9z" stroke="#cdd1d6" stroke-width="1.1" stroke-linejoin="round"/><path d="M9.3 3.3c-.3-.5-.9-.8-1.6-.8-.9 0-1.6.5-1.6 1.2s.7 1 1.6 1.2 1.7.5 1.7 1.3-.7 1.2-1.7 1.2c-.7 0-1.4-.3-1.7-.9M7.7 1.7v.8M7.7 7.4v.9" stroke="#cdd1d6" stroke-width="1.05"/><path d="M2.4 8.9h1.8M2.4 10.8h6.6" stroke="#cdd1d6" stroke-width="1.05"/></svg>
<svg class="s" style="left:1642.4px;top:526.2px;" width="15" height="13" viewBox="0 0 15 13" fill="none"><rect x="1.3" y="1.2" width="12.6" height="10.2" rx="1.5" stroke="#21b24f" stroke-width="1.5"/><path d="M3.6 3.8l4 3 4-3" stroke="#21b24f" stroke-width="1.5"/></svg>
<svg class="s" style="left:1683.6px;top:526.5px;" width="13" height="15" viewBox="0 0 13 15" fill="none"><path d="M2.4 1h6l3.4 3.4v8a2 2 0 0 1-2 2H2.4a2 2 0 0 1-2-2V3a2 2 0 0 1 2-2z" stroke="#1f84d9" stroke-width="1.3"/><path d="M8.2 1.2v2.3a1 1 0 0 0 1 1h2.4" stroke="#1f84d9" stroke-width="1.1"/><circle cx="6.2" cy="9.3" r="2.9" fill="#1f84d9"/><path d="M6 7.9v1.7l1.2.8" stroke="#fff" stroke-width=".9"/></svg>
<div class="t" style="top:525.75px;font-size:14px;line-height:14px;color:#1f84d9;font-weight:400;letter-spacing:0.400px;-webkit-text-stroke:0.25px #1f84d9;left:1700.55px;">x 2</div>
<div class="b" style="left:1797px;top:521.3px;width:98px;height:23.5px;border:1.4px solid #1f84d9;border-radius:5px;box-sizing:border-box;background:#fff;"></div>
<div class="b" style="left:1869px;top:521.3px;width:1.400000000000091px;height:23.5px;background:#1f84d9;"></div>
<svg class="s" style="left:1802px;top:525.4px;" width="16" height="15" viewBox="0 0 16 15" fill="none"><path d="M3.8 6.6V2.9A2 2 0 0 1 5.8.9h4.9l3.6 3.6v7.5a2 2 0 0 1-2 2H5.8a2 2 0 0 1-2-2v-.4" stroke="#1f84d9" stroke-width="1.3"/><path d="M10.5 1.1v2.3a1.1 1.1 0 0 0 1.1 1.1h2.5" stroke="#1f84d9" stroke-width="1.1"/><rect x=".9" y="6.4" width="9" height="5.3" rx="1.3" fill="#1f84d9"/><path d="M2.3 10.5V7.7h.9a.75.75 0 0 1 0 1.5h-.9M5 10.5V7.7h.6a1.3 1.3 0 0 1 0 2.8zM7.9 10.5V7.7h1.3M7.9 9h1" stroke="#fff" stroke-width=".55"/></svg>
<div class="t" style="top:525.75px;font-size:14px;line-height:14px;color:#1f84d9;font-weight:400;letter-spacing:1.500px;-webkit-text-stroke:0.25px #1f84d9;left:1824.45px;"><span style="margin-left:-2.00px;letter-spacing:-0.800px">1</span>9895</div>
<svg class="s" style="left:1874.5px;top:529px;" width="15" height="10" viewBox="0 0 15 10" fill="none"><path d="M1.2 1.4l6.2 6.2 6.2-6.2" stroke="#1f84d9" stroke-width="1.3"/></svg>
<div class="b" style="left:15px;top:580px;width:1888px;height:1px;background:#dcdfe3;"></div>
<div class="b" style="left:31px;top:556px;width:16px;height:16px;background:#fff;border:1.5px solid #4b4f57;border-radius:4px;box-sizing:border-box;"></div>
<div class="b av" style="left:79px;top:553px;">AR</div>
<div class="t" style="top:556.15px;font-size:14px;line-height:14px;color:#1f84d9;font-weight:400;letter-spacing:1.350px;left:108.65px;">Arvel Rau (237)</div>
<div class="t" style="top:557.15px;font-size:14px;line-height:14px;color:#4b4f57;font-weight:400;letter-spacing:1.150px;right:1331.82px;">38.00</div>
<div class="t" style="top:557.15px;font-size:14px;line-height:14px;color:#4b4f57;font-weight:400;letter-spacing:1.150px;right:1186.67px;">$2,259.62</div>
<div class="t" style="top:557.15px;font-size:14px;line-height:14px;color:#4b4f57;font-weight:400;letter-spacing:1.150px;right:1046.79px;">$547.00</div>
<div class="t" style="top:557.15px;font-size:14px;line-height:14px;color:#c3c6cc;font-weight:400;letter-spacing:1.150px;right:893.52px;">$0.00</div>
<div class="t" style="top:557.15px;font-size:14px;line-height:14px;color:#4b4f57;font-weight:400;letter-spacing:1.150px;right:752.97px;">$<span style="margin-left:-2.00px;letter-spacing:-1.150px">1</span>,724.<span style="margin-left:-2.00px;letter-spacing:-1.150px">1</span>6</div>
<div class="t" style="top:557.15px;font-size:14px;line-height:14px;color:#4b4f57;font-weight:400;letter-spacing:1.150px;right:616.74px;">$259.86</div>
<div class="t" style="top:557.15px;font-size:14px;line-height:14px;color:#4b4f57;font-weight:400;letter-spacing:0.970px;right:501.82px;">22 Sep 2024</div>
<div class="t" style="top:557.15px;font-size:14px;line-height:14px;color:#4b4f57;font-weight:400;letter-spacing:0.970px;right:396.02px;">23 Sep 2024</div>
<svg class="s" style="left:1538px;top:558px;" width="14" height="14" viewBox="0 0 14 14" fill="none"><path d="M3.2 1.2h7.6a2.4 2.4 0 0 1 2.4 2.4v3.9a2.4 2.4 0 0 1-2.4 2.4H6.2l-3 2.6V9.9A2.4 2.4 0 0 1 .8 7.5V3.6a2.4 2.4 0 0 1 2.4-2.4z" stroke="#cdd1d6" stroke-width="1.2" stroke-linejoin="round"/><path d="M3.6 4.3h6.6M3.6 6.7h2.6" stroke="#cdd1d6" stroke-width="1.1"/></svg>
<svg class="s" style="left:1558.6px;top:558px;" width="15" height="15" viewBox="0 0 15 15" fill="none"><path d="M12.6 7.4V4.6a2 2 0 0 0-2-2H2.8a2 2 0 0 0-2 2v7.2a2 2 0 0 0 2 2h3.4" stroke="#cdd1d6" stroke-width="1.3"/><path d="M3.6 1v3M9.8 1v3M3 6.6h7M3 9.2h2.4" stroke="#cdd1d6" stroke-width="1.2"/><path d="M7 11.5h6.6M11.4 9.4l2.2 2.1-2.2 2.1" stroke="#cdd1d6" stroke-width="1.3"/></svg>
<svg class="s" style="left:1578.6px;top:558.5px;" width="17" height="14" viewBox="0 0 17 14" fill="none"><circle cx="6" cy="4" r="3.1" stroke="#cdd1d6" stroke-width="1.2"/><path d="M.8 12.8C2.4 9.6 4.2 8.7 5.9 8.7s3.5.9 5 4.1" stroke="#cdd1d6" stroke-width="1.25"/><circle cx="12.6" cy="6.3" r="1.9" stroke="#cdd1d6" stroke-width="1.1"/><path d="M11.2 10.1c1.5-.5 3.3.1 4.6 2.4" stroke="#cdd1d6" stroke-width="1.15"/></svg>
<svg class="s" style="left:1600.6px;top:558px;" width="15" height="14" viewBox="0 0 15 14" fill="none"><path d="M1.4 4.9h12.2c0-2-2.7-3.7-6.1-3.7S1.4 2.9 1.4 4.9z" stroke="#cdd1d6" stroke-width="1.3" stroke-linejoin="round"/><path d="M4 6.4v4.4M7.5 6.4v4.4M11 6.4v4.4" stroke="#cdd1d6" stroke-width="1.3"/><rect x="1.5" y="11.3" width="12" height="2" rx="1" stroke="#cdd1d6" stroke-width="1.2"/></svg>
<svg class="s" style="left:1623px;top:557.2px;" width="13" height="16" viewBox="0 0 13 16" fill="none"><path d="M.8 14.8V2.7A2 2 0 0 1 2.8.7h6.6a2 2 0 0 1 2 2v12.1l-1.3-.9-1.3.9-1.3-.9-1.4.9-1.3-.9-1.3.9-1.3-.9z" stroke="#cdd1d6" stroke-width="1.1" stroke-linejoin="round"/><path d="M9.3 3.3c-.3-.5-.9-.8-1.6-.8-.9 0-1.6.5-1.6 1.2s.7 1 1.6 1.2 1.7.5 1.7 1.3-.7 1.2-1.7 1.2c-.7 0-1.4-.3-1.7-.9M7.7 1.7v.8M7.7 7.4v.9" stroke="#cdd1d6" stroke-width="1.05"/><path d="M2.4 8.9h1.8M2.4 10.8h6.6" stroke="#cdd1d6" stroke-width="1.05"/></svg>
<svg class="s" style="left:1642.4px;top:558.2px;" width="15" height="13" viewBox="0 0 15 13" fill="none"><rect x="1.3" y="1.2" width="12.6" height="10.2" rx="1.5" stroke="#21b24f" stroke-width="1.5"/><path d="M3.6 3.8l4 3 4-3" stroke="#21b24f" stroke-width="1.5"/></svg>
<svg class="s" style="left:1683.6px;top:558.5px;" width="13" height="15" viewBox="0 0 13 15" fill="none"><path d="M2.4 1h6l3.4 3.4v8a2 2 0 0 1-2 2H2.4a2 2 0 0 1-2-2V3a2 2 0 0 1 2-2z" stroke="#1f84d9" stroke-width="1.3"/><path d="M8.2 1.2v2.3a1 1 0 0 0 1 1h2.4" stroke="#1f84d9" stroke-width="1.1"/><circle cx="6.2" cy="9.3" r="2.9" fill="#1f84d9"/><path d="M6 7.9v1.7l1.2.8" stroke="#fff" stroke-width=".9"/></svg>
<div class="t" style="top:557.75px;font-size:14px;line-height:14px;color:#1f84d9;font-weight:400;letter-spacing:1.500px;-webkit-text-stroke:0.25px #1f84d9;left:1700.15px;">3<span style="margin-left:-2.00px;letter-spacing:-0.800px">1</span>664</div>
<div class="b" style="left:1797px;top:553.3px;width:98px;height:23.5px;border:1.4px solid #1f84d9;border-radius:5px;box-sizing:border-box;background:#fff;"></div>
<div class="b" style="left:1869px;top:553.3px;width:1.400000000000091px;height:23.5px;background:#1f84d9;"></div>
<svg class="s" style="left:1802px;top:557.4px;" width="16" height="15" viewBox="0 0 16 15" fill="none"><path d="M3.8 6.6V2.9A2 2 0 0 1 5.8.9h4.9l3.6 3.6v7.5a2 2 0 0 1-2 2H5.8a2 2 0 0 1-2-2v-.4" stroke="#1f84d9" stroke-width="1.3"/><path d="M10.5 1.1v2.3a1.1 1.1 0 0 0 1.1 1.1h2.5" stroke="#1f84d9" stroke-width="1.1"/><rect x=".9" y="6.4" width="9" height="5.3" rx="1.3" fill="#1f84d9"/><path d="M2.3 10.5V7.7h.9a.75.75 0 0 1 0 1.5h-.9M5 10.5V7.7h.6a1.3 1.3 0 0 1 0 2.8zM7.9 10.5V7.7h1.3M7.9 9h1" stroke="#fff" stroke-width=".55"/></svg>
<div class="t" style="top:557.75px;font-size:14px;line-height:14px;color:#1f84d9;font-weight:400;letter-spacing:1.500px;-webkit-text-stroke:0.25px #1f84d9;left:1824.35px;"><span style="margin-left:-2.00px;letter-spacing:-0.800px">1</span>9884</div>
<svg class="s" style="left:1874.5px;top:561px;" width="15" height="10" viewBox="0 0 15 10" fill="none"><path d="M1.2 1.4l6.2 6.2 6.2-6.2" stroke="#1f84d9" stroke-width="1.3"/></svg>
<div class="b" style="left:15px;top:612px;width:1888px;height:1px;background:#dcdfe3;"></div>
<div class="b" style="left:31px;top:588px;width:16px;height:16px;background:#fff;border:1.5px solid #4b4f57;border-radius:4px;box-sizing:border-box;"></div>
<div class="b av" style="left:79px;top:585px;">BG</div>
<div class="t" style="top:588.15px;font-size:14px;line-height:14px;color:#1f84d9;font-weight:400;letter-spacing:1.350px;left:107.55px;">Brandyn Grimes (383)</div>
<div class="t" style="top:589.15px;font-size:14px;line-height:14px;color:#4b4f57;font-weight:400;letter-spacing:1.150px;right:1331.82px;">23.00</div>
<div class="t" style="top:589.15px;font-size:14px;line-height:14px;color:#4b4f57;font-weight:400;letter-spacing:1.150px;right:1188.94px;">$828.2<span style="margin-left:-2.00px;letter-spacing:-1.150px">1</span></div>
<div class="t" style="top:589.15px;font-size:14px;line-height:14px;color:#4b4f57;font-weight:400;letter-spacing:1.150px;right:1046.83px;">$92.00</div>
<div class="t" style="top:589.15px;font-size:14px;line-height:14px;color:#c3c6cc;font-weight:400;letter-spacing:1.150px;right:893.52px;">$0.00</div>
<div class="t" style="top:589.15px;font-size:14px;line-height:14px;color:#4b4f57;font-weight:400;letter-spacing:1.150px;right:755.14px;">$736.2<span style="margin-left:-2.00px;letter-spacing:-1.150px">1</span></div>
<div class="t" style="top:589.15px;font-size:14px;line-height:14px;color:#4b4f57;font-weight:400;letter-spacing:1.150px;right:616.98px;">$95.24</div>
<div class="t" style="top:589.15px;font-size:14px;line-height:14px;color:#4b4f57;font-weight:400;letter-spacing:0.970px;right:501.82px;">22 Sep 2024</div>
<div class="t" style="top:589.15px;font-size:14px;line-height:14px;color:#4b4f57;font-weight:400;letter-spacing:0.970px;right:396.02px;">23 Sep 2024</div>
<svg class="s" style="left:1538px;top:590px;" width="14" height="14" viewBox="0 0 14 14" fill="none"><path d="M3.2 1.2h7.6a2.4 2.4 0 0 1 2.4 2.4v3.9a2.4 2.4 0 0 1-2.4 2.4H6.2l-3 2.6V9.9A2.4 2.4 0 0 1 .8 7.5V3.6a2.4 2.4 0 0 1 2.4-2.4z" stroke="#cdd1d6" stroke-width="1.2" stroke-linejoin="round"/><path d="M3.6 4.3h6.6M3.6 6.7h2.6" stroke="#cdd1d6" stroke-width="1.1"/></svg>
<svg class="s" style="left:1558.6px;top:590px;" width="15" height="15" viewBox="0 0 15 15" fill="none"><path d="M12.6 7.4V4.6a2 2 0 0 0-2-2H2.8a2 2 0 0 0-2 2v7.2a2 2 0 0 0 2 2h3.4" stroke="#cdd1d6" stroke-width="1.3"/><path d="M3.6 1v3M9.8 1v3M3 6.6h7M3 9.2h2.4" stroke="#cdd1d6" stroke-width="1.2"/><path d="M7 11.5h6.6M11.4 9.4l2.2 2.1-2.2 2.1" stroke="#cdd1d6" stroke-width="1.3"/></svg>
<svg class="s" style="left:1578.6px;top:590.5px;" width="17" height="14" viewBox="0 0 17 14" fill="none"><circle cx="6" cy="4" r="3.1" stroke="#cdd1d6" stroke-width="1.2"/><path d="M.8 12.8C2.4 9.6 4.2 8.7 5.9 8.7s3.5.9 5 4.1" stroke="#cdd1d6" stroke-width="1.25"/><circle cx="12.6" cy="6.3" r="1.9" stroke="#cdd1d6" stroke-width="1.1"/><path d="M11.2 10.1c1.5-.5 3.3.1 4.6 2.4" stroke="#cdd1d6" stroke-width="1.15"/></svg>
<svg class="s" style="left:1600.6px;top:590px;" width="15" height="14" viewBox="0 0 15 14" fill="none"><path d="M1.4 4.9h12.2c0-2-2.7-3.7-6.1-3.7S1.4 2.9 1.4 4.9z" stroke="#cdd1d6" stroke-width="1.3" stroke-linejoin="round"/><path d="M4 6.4v4.4M7.5 6.4v4.4M11 6.4v4.4" stroke="#cdd1d6" stroke-width="1.3"/><rect x="1.5" y="11.3" width="12" height="2" rx="1" stroke="#cdd1d6" stroke-width="1.2"/></svg>
<svg class="s" style="left:1623px;top:589.2px;" width="13" height="16" viewBox="0 0 13 16" fill="none"><path d="M.8 14.8V2.7A2 2 0 0 1 2.8.7h6.6a2 2 0 0 1 2 2v12.1l-1.3-.9-1.3.9-1.3-.9-1.4.9-1.3-.9-1.3.9-1.3-.9z" stroke="#cdd1d6" stroke-width="1.1" stroke-linejoin="round"/><path d="M9.3 3.3c-.3-.5-.9-.8-1.6-.8-.9 0-1.6.5-1.6 1.2s.7 1 1.6 1.2 1.7.5 1.7 1.3-.7 1.2-1.7 1.2c-.7 0-1.4-.3-1.7-.9M7.7 1.7v.8M7.7 7.4v.9" stroke="#cdd1d6" stroke-width="1.05"/><path d="M2.4 8.9h1.8M2.4 10.8h6.6" stroke="#cdd1d6" stroke-width="1.05"/></svg>
<svg class="s" style="left:1642.4px;top:590.2px;" width="15" height="13" viewBox="0 0 15 13" fill="none"><rect x="1.3" y="1.2" width="12.6" height="10.2" rx="1.5" stroke="#21b24f" stroke-width="1.5"/><path d="M3.6 3.8l4 3 4-3" stroke="#21b24f" stroke-width="1.5"/></svg>
<svg class="s" style="left:1683.6px;top:590.5px;" width="13" height="15" viewBox="0 0 13 15" fill="none"><path d="M2.4 1h6l3.4 3.4v8a2 2 0 0 1-2 2H2.4a2 2 0 0 1-2-2V3a2 2 0 0 1 2-2z" stroke="#1f84d9" stroke-width="1.3"/><path d="M8.2 1.2v2.3a1 1 0 0 0 1 1h2.4" stroke="#1f84d9" stroke-width="1.1"/><circle cx="6.2" cy="9.3" r="2.9" fill="#1f84d9"/><path d="M6 7.9v1.7l1.2.8" stroke="#fff" stroke-width=".9"/></svg>
<div class="t" style="top:589.75px;font-size:14px;line-height:14px;color:#1f84d9;font-weight:400;letter-spacing:0.400px;-webkit-text-stroke:0.25px #1f84d9;left:1700.55px;">x 2</div>
<div class="b" style="left:1797px;top:585.3px;width:98px;height:23.5px;border:1.4px solid #1f84d9;border-radius:5px;box-sizing:border-box;background:#fff;"></div>
<div class="b" style="left:1869px;top:585.3px;width:1.400000000000091px;height:23.5px;background:#1f84d9;"></div>
<svg class="s" style="left:1802px;top:589.4px;" width="16" height="15" viewBox="0 0 16 15" fill="none"><path d="M3.8 6.6V2.9A2 2 0 0 1 5.8.9h4.9l3.6 3.6v7.5a2 2 0 0 1-2 2H5.8a2 2 0 0 1-2-2v-.4" stroke="#1f84d9" stroke-width="1.3"/><path d="M10.5 1.1v2.3a1.1 1.1 0 0 0 1.1 1.1h2.5" stroke="#1f84d9" stroke-width="1.1"/><rect x=".9" y="6.4" width="9" height="5.3" rx="1.3" fill="#1f84d9"/><path d="M2.3 10.5V7.7h.9a.75.75 0 0 1 0 1.5h-.9M5 10.5V7.7h.6a1.3 1.3 0 0 1 0 2.8zM7.9 10.5V7.7h1.3M7.9 9h1" stroke="#fff" stroke-width=".55"/></svg>
<div class="t" style="top:589.75px;font-size:14px;line-height:14px;color:#1f84d9;font-weight:400;letter-spacing:1.500px;-webkit-text-stroke:0.25px #1f84d9;left:1824.50px;"><span style="margin-left:-2.00px;letter-spacing:-0.800px">1</span>9872</div>
<svg class="s" style="left:1874.5px;top:593px;" width="15" height="10" viewBox="0 0 15 10" fill="none"><path d="M1.2 1.4l6.2 6.2 6.2-6.2" stroke="#1f84d9" stroke-width="1.3"/></svg>
<div class="b" style="left:15px;top:644px;width:1888px;height:1px;background:#dcdfe3;"></div>
<div class="b" style="left:31px;top:620px;width:16px;height:16px;background:#fff;border:1.5px solid #4b4f57;border-radius:4px;box-sizing:border-box;"></div>
<div class="b av" style="left:79px;top:617px;">BW</div>
<div class="t" style="top:620.15px;font-size:14px;line-height:14px;color:#1f84d9;font-weight:400;letter-spacing:1.350px;left:107.55px;">Brandyn Ward (200)</div>
<div class="t" style="top:621.15px;font-size:14px;line-height:14px;color:#4b4f57;font-weight:400;letter-spacing:1.150px;right:1331.77px;"><span style="margin-left:-2.00px;letter-spacing:-1.150px">1</span>3.25</div>
<div class="t" style="top:621.15px;font-size:14px;line-height:14px;color:#4b4f57;font-weight:400;letter-spacing:1.150px;right:1186.64px;">$43<span style="margin-left:-2.00px;letter-spacing:-1.150px">1</span>.87</div>
<div class="t" style="top:621.15px;font-size:14px;line-height:14px;color:#4b4f57;font-weight:400;letter-spacing:1.150px;right:1046.82px;">$<span style="margin-left:-2.00px;letter-spacing:-1.150px">1</span><span style="margin-left:-2.00px;letter-spacing:-1.150px">1</span>.00</div>
<div class="t" style="top:621.15px;font-size:14px;line-height:14px;color:#c3c6cc;font-weight:400;letter-spacing:1.150px;right:893.52px;">$0.00</div>
<div class="t" style="top:621.15px;font-size:14px;line-height:14px;color:#4b4f57;font-weight:400;letter-spacing:1.150px;right:752.84px;">$420.87</div>
<div class="t" style="top:621.15px;font-size:14px;line-height:14px;color:#4b4f57;font-weight:400;letter-spacing:1.150px;right:616.68px;">$49.67</div>
<div class="t" style="top:621.15px;font-size:14px;line-height:14px;color:#4b4f57;font-weight:400;letter-spacing:0.970px;right:501.82px;">22 Sep 2024</div>
<div class="t" style="top:621.15px;font-size:14px;line-height:14px;color:#4b4f57;font-weight:400;letter-spacing:0.970px;right:396.02px;">23 Sep 2024</div>
<svg class="s" style="left:1538px;top:622px;" width="14" height="14" viewBox="0 0 14 14" fill="none"><path d="M3.2 1.2h7.6a2.4 2.4 0 0 1 2.4 2.4v3.9a2.4 2.4 0 0 1-2.4 2.4H6.2l-3 2.6V9.9A2.4 2.4 0 0 1 .8 7.5V3.6a2.4 2.4 0 0 1 2.4-2.4z" stroke="#cdd1d6" stroke-width="1.2" stroke-linejoin="round"/><path d="M3.6 4.3h6.6M3.6 6.7h2.6" stroke="#cdd1d6" stroke-width="1.1"/></svg>
<svg class="s" style="left:1558.6px;top:622px;" width="15" height="15" viewBox="0 0 15 15" fill="none"><path d="M12.6 7.4V4.6a2 2 0 0 0-2-2H2.8a2 2 0 0 0-2 2v7.2a2 2 0 0 0 2 2h3.4" stroke="#cdd1d6" stroke-width="1.3"/><path d="M3.6 1v3M9.8 1v3M3 6.6h7M3 9.2h2.4" stroke="#cdd1d6" stroke-width="1.2"/><path d="M7 11.5h6.6M11.4 9.4l2.2 2.1-2.2 2.1" stroke="#cdd1d6" stroke-width="1.3"/></svg>
<svg class="s" style="left:1578.6px;top:622.5px;" width="17" height="14" viewBox="0 0 17 14" fill="none"><circle cx="6" cy="4" r="3.1" stroke="#cdd1d6" stroke-width="1.2"/><path d="M.8 12.8C2.4 9.6 4.2 8.7 5.9 8.7s3.5.9 5 4.1" stroke="#cdd1d6" stroke-width="1.25"/><circle cx="12.6" cy="6.3" r="1.9" stroke="#cdd1d6" stroke-width="1.1"/><path d="M11.2 10.1c1.5-.5 3.3.1 4.6 2.4" stroke="#cdd1d6" stroke-width="1.15"/></svg>
<svg class="s" style="left:1600.6px;top:622px;" width="15" height="14" viewBox="0 0 15 14" fill="none"><path d="M1.4 4.9h12.2c0-2-2.7-3.7-6.1-3.7S1.4 2.9 1.4 4.9z" stroke="#cdd1d6" stroke-width="1.3" stroke-linejoin="round"/><path d="M4 6.4v4.4M7.5 6.4v4.4M11 6.4v4.4" stroke="#cdd1d6" stroke-width="1.3"/><rect x="1.5" y="11.3" width="12" height="2" rx="1" stroke="#cdd1d6" stroke-width="1.2"/></svg>
<svg class="s" style="left:1623px;top:621.2px;" width="13" height="16" viewBox="0 0 13 16" fill="none"><path d="M.8 14.8V2.7A2 2 0 0 1 2.8.7h6.6a2 2 0 0 1 2 2v12.1l-1.3-.9-1.3.9-1.3-.9-1.4.9-1.3-.9-1.3.9-1.3-.9z" stroke="#cdd1d6" stroke-width="1.1" stroke-linejoin="round"/><path d="M9.3 3.3c-.3-.5-.9-.8-1.6-.8-.9 0-1.6.5-1.6 1.2s.7 1 1.6 1.2 1.7.5 1.7 1.3-.7 1.2-1.7 1.2c-.7 0-1.4-.3-1.7-.9M7.7 1.7v.8M7.7 7.4v.9" stroke="#cdd1d6" stroke-width="1.05"/><path d="M2.4 8.9h1.8M2.4 10.8h6.6" stroke="#cdd1d6" stroke-width="1.05"/></svg>
<svg class="s" style="left:1642.4px;top:622.2px;" width="15" height="13" viewBox="0 0 15 13" fill="none"><rect x="1.3" y="1.2" width="12.6" height="10.2" rx="1.5" stroke="#21b24f" stroke-width="1.5"/><path d="M3.6 3.8l4 3 4-3" stroke="#21b24f" stroke-width="1.5"/></svg>
<svg class="s" style="left:1683.6px;top:622.5px;" width="13" height="15" viewBox="0 0 13 15" fill="none"><path d="M2.4 1h6l3.4 3.4v8a2 2 0 0 1-2 2H2.4a2 2 0 0 1-2-2V3a2 2 0 0 1 2-2z" stroke="#1f84d9" stroke-width="1.3"/><path d="M8.2 1.2v2.3a1 1 0 0 0 1 1h2.4" stroke="#1f84d9" stroke-width="1.1"/><circle cx="6.2" cy="9.3" r="2.9" fill="#1f84d9"/><path d="M6 7.9v1.7l1.2.8" stroke="#fff" stroke-width=".9"/></svg>
<div class="t" style="top:621.75px;font-size:14px;line-height:14px;color:#1f84d9;font-weight:400;letter-spacing:1.500px;-webkit-text-stroke:0.25px #1f84d9;left:1700.15px;">3<span style="margin-left:-2.00px;letter-spacing:-0.800px">1</span>654</div>
<div class="b" style="left:1797px;top:617.3px;width:98px;height:23.5px;border:1.4px solid #1f84d9;border-radius:5px;box-sizing:border-box;background:#fff;"></div>
<div class="b" style="left:1869px;top:617.3px;width:1.400000000000091px;height:23.5px;background:#1f84d9;"></div>
<svg class="s" style="left:1802px;top:621.4px;" width="16" height="15" viewBox="0 0 16 15" fill="none"><path d="M3.8 6.6V2.9A2 2 0 0 1 5.8.9h4.9l3.6 3.6v7.5a2 2 0 0 1-2 2H5.8a2 2 0 0 1-2-2v-.4" stroke="#1f84d9" stroke-width="1.3"/><path d="M10.5 1.1v2.3a1.1 1.1 0 0 0 1.1 1.1h2.5" stroke="#1f84d9" stroke-width="1.1"/><rect x=".9" y="6.4" width="9" height="5.3" rx="1.3" fill="#1f84d9"/><path d="M2.3 10.5V7.7h.9a.75.75 0 0 1 0 1.5h-.9M5 10.5V7.7h.6a1.3 1.3 0 0 1 0 2.8zM7.9 10.5V7.7h1.3M7.9 9h1" stroke="#fff" stroke-width=".55"/></svg>
<div class="t" style="top:621.75px;font-size:14px;line-height:14px;color:#1f84d9;font-weight:400;letter-spacing:1.500px;-webkit-text-stroke:0.25px #1f84d9;left:1824.45px;"><span style="margin-left:-2.00px;letter-spacing:-0.800px">1</span>9878</div>
<svg class="s" style="left:1874.5px;top:625px;" width="15" height="10" viewBox="0 0 15 10" fill="none"><path d="M1.2 1.4l6.2 6.2 6.2-6.2" stroke="#1f84d9" stroke-width="1.3"/></svg>
<div class="b" style="left:15px;top:676px;width:1888px;height:1px;background:#dcdfe3;"></div>
<div class="b" style="left:31px;top:652px;width:16px;height:16px;background:#fff;border:1.5px solid #4b4f57;border-radius:4px;box-sizing:border-box;"></div>
<div class="b av" style="left:79px;top:649px;">BM</div>
<div class="t" style="top:652.15px;font-size:14px;line-height:14px;color:#1f84d9;font-weight:400;letter-spacing:1.350px;left:107.55px;">Breanne Marvin (20)</div>
<div class="t" style="top:653.15px;font-size:14px;line-height:14px;color:#4b4f57;font-weight:400;letter-spacing:1.150px;right:1331.82px;">38.00</div>
<div class="t" style="top:653.15px;font-size:14px;line-height:14px;color:#4b4f57;font-weight:400;letter-spacing:1.150px;right:1186.82px;">$<span style="margin-left:-2.00px;letter-spacing:-1.150px">1</span>,547.00</div>
<div class="t" style="top:653.15px;font-size:14px;line-height:14px;color:#4b4f57;font-weight:400;letter-spacing:1.150px;right:1046.79px;">$3<span style="margin-left:-2.00px;letter-spacing:-1.150px">1</span>9.00</div>
<div class="t" style="top:653.15px;font-size:14px;line-height:14px;color:#4b4f57;font-weight:400;letter-spacing:1.150px;right:893.43px;">$45.69</div>
<div class="t" style="top:653.15px;font-size:14px;line-height:14px;color:#4b4f57;font-weight:400;letter-spacing:1.150px;right:753.02px;">$<span style="margin-left:-2.00px;letter-spacing:-1.150px">1</span>,228.00</div>
<div class="t" style="top:653.15px;font-size:14px;line-height:14px;color:#4b4f57;font-weight:400;letter-spacing:1.150px;right:618.94px;">$283.5<span style="margin-left:-2.00px;letter-spacing:-1.150px">1</span></div>
<div class="t" style="top:653.15px;font-size:14px;line-height:14px;color:#4b4f57;font-weight:400;letter-spacing:0.970px;right:501.82px;">22 Sep 2024</div>
<div class="t" style="top:653.15px;font-size:14px;line-height:14px;color:#4b4f57;font-weight:400;letter-spacing:0.970px;right:396.02px;">23 Sep 2024</div>
<svg class="s" style="left:1538px;top:654px;" width="14" height="14" viewBox="0 0 14 14" fill="none"><path d="M3.2 1.2h7.6a2.4 2.4 0 0 1 2.4 2.4v3.9a2.4 2.4 0 0 1-2.4 2.4H6.2l-3 2.6V9.9A2.4 2.4 0 0 1 .8 7.5V3.6a2.4 2.4 0 0 1 2.4-2.4z" stroke="#cdd1d6" stroke-width="1.2" stroke-linejoin="round"/><path d="M3.6 4.3h6.6M3.6 6.7h2.6" stroke="#cdd1d6" stroke-width="1.1"/></svg>
<svg class="s" style="left:1558.6px;top:654px;" width="15" height="15" viewBox="0 0 15 15" fill="none"><path d="M12.6 7.4V4.6a2 2 0 0 0-2-2H2.8a2 2 0 0 0-2 2v7.2a2 2 0 0 0 2 2h3.4" stroke="#cdd1d6" stroke-width="1.3"/><path d="M3.6 1v3M9.8 1v3M3 6.6h7M3 9.2h2.4" stroke="#cdd1d6" stroke-width="1.2"/><path d="M7 11.5h6.6M11.4 9.4l2.2 2.1-2.2 2.1" stroke="#cdd1d6" stroke-width="1.3"/></svg>
<svg class="s" style="left:1578.6px;top:654.5px;" width="17" height="14" viewBox="0 0 17 14" fill="none"><circle cx="6" cy="4" r="3.1" stroke="#cdd1d6" stroke-width="1.2"/><path d="M.8 12.8C2.4 9.6 4.2 8.7 5.9 8.7s3.5.9 5 4.1" stroke="#cdd1d6" stroke-width="1.25"/><circle cx="12.6" cy="6.3" r="1.9" stroke="#cdd1d6" stroke-width="1.1"/><path d="M11.2 10.1c1.5-.5 3.3.1 4.6 2.4" stroke="#cdd1d6" stroke-width="1.15"/></svg>
<svg class="s" style="left:1600.6px;top:654px;" width="15" height="14" viewBox="0 0 15 14" fill="none"><path d="M1.4 4.9h12.2c0-2-2.7-3.7-6.1-3.7S1.4 2.9 1.4 4.9z" stroke="#cdd1d6" stroke-width="1.3" stroke-linejoin="round"/><path d="M4 6.4v4.4M7.5 6.4v4.4M11 6.4v4.4" stroke="#cdd1d6" stroke-width="1.3"/><rect x="1.5" y="11.3" width="12" height="2" rx="1" stroke="#cdd1d6" stroke-width="1.2"/></svg>
<svg class="s" style="left:1623px;top:653.2px;" width="13" height="16" viewBox="0 0 13 16" fill="none"><path d="M.8 14.8V2.7A2 2 0 0 1 2.8.7h6.6a2 2 0 0 1 2 2v12.1l-1.3-.9-1.3.9-1.3-.9-1.4.9-1.3-.9-1.3.9-1.3-.9z" stroke="#f3a01f" stroke-width="1.1" stroke-linejoin="round"/><path d="M9.3 3.3c-.3-.5-.9-.8-1.6-.8-.9 0-1.6.5-1.6 1.2s.7 1 1.6 1.2 1.7.5 1.7 1.3-.7 1.2-1.7 1.2c-.7 0-1.4-.3-1.7-.9M7.7 1.7v.8M7.7 7.4v.9" stroke="#f3a01f" stroke-width="1.05"/><path d="M2.4 8.9h1.8M2.4 10.8h6.6" stroke="#f3a01f" stroke-width="1.05"/></svg>
<svg class="s" style="left:1642.4px;top:654.2px;" width="15" height="13" viewBox="0 0 15 13" fill="none"><rect x="1.3" y="1.2" width="12.6" height="10.2" rx="1.5" stroke="#21b24f" stroke-width="1.5"/><path d="M3.6 3.8l4 3 4-3" stroke="#21b24f" stroke-width="1.5"/></svg>
<svg class="s" style="left:1683.6px;top:654.5px;" width="13" height="15" viewBox="0 0 13 15" fill="none"><path d="M2.4 1h6l3.4 3.4v8a2 2 0 0 1-2 2H2.4a2 2 0 0 1-2-2V3a2 2 0 0 1 2-2z" stroke="#1f84d9" stroke-width="1.3"/><path d="M8.2 1.2v2.3a1 1 0 0 0 1 1h2.4" stroke="#1f84d9" stroke-width="1.1"/><circle cx="6.2" cy="9.3" r="2.9" fill="#1f84d9"/><path d="M6 7.9v1.7l1.2.8" stroke="#fff" stroke-width=".9"/></svg>
<div class="t" style="top:653.75px;font-size:14px;line-height:14px;color:#1f84d9;font-weight:400;letter-spacing:1.500px;-webkit-text-stroke:0.25px #1f84d9;left:1700.15px;">3<span style="margin-left:-2.00px;letter-spacing:-0.800px">1</span>620</div>
<div class="b" style="left:1797px;top:649.3px;width:98px;height:23.5px;border:1.4px solid #1f84d9;border-radius:5px;box-sizing:border-box;background:#fff;"></div>
<div class="b" style="left:1869px;top:649.3px;width:1.400000000000091px;height:23.5px;background:#1f84d9;"></div>
<svg class="s" style="left:1802px;top:653.4px;" width="16" height="15" viewBox="0 0 16 15" fill="none"><path d="M3.8 6.6V2.9A2 2 0 0 1 5.8.9h4.9l3.6 3.6v7.5a2 2 0 0 1-2 2H5.8a2 2 0 0 1-2-2v-.4" stroke="#1f84d9" stroke-width="1.3"/><path d="M10.5 1.1v2.3a1.1 1.1 0 0 0 1.1 1.1h2.5" stroke="#1f84d9" stroke-width="1.1"/><rect x=".9" y="6.4" width="9" height="5.3" rx="1.3" fill="#1f84d9"/><path d="M2.3 10.5V7.7h.9a.75.75 0 0 1 0 1.5h-.9M5 10.5V7.7h.6a1.3 1.3 0 0 1 0 2.8zM7.9 10.5V7.7h1.3M7.9 9h1" stroke="#fff" stroke-width=".55"/></svg>
<div class="t" style="top:653.75px;font-size:14px;line-height:14px;color:#1f84d9;font-weight:400;letter-spacing:1.500px;-webkit-text-stroke:0.25px #1f84d9;left:1824.45px;"><span style="margin-left:-2.00px;letter-spacing:-0.800px">1</span>9848</div>
<svg class="s" style="left:1874.5px;top:657px;" width="15" height="10" viewBox="0 0 15 10" fill="none"><path d="M1.2 1.4l6.2 6.2 6.2-6.2" stroke="#1f84d9" stroke-width="1.3"/></svg>
<div class="b" style="left:15px;top:708px;width:1888px;height:1px;background:#dcdfe3;"></div>
<div class="b" style="left:31px;top:684px;width:16px;height:16px;background:#fff;border:1.5px solid #4b4f57;border-radius:4px;box-sizing:border-box;"></div>
<div class="b av" style="left:79px;top:681px;">BC</div>
<div class="t" style="top:684.15px;font-size:14px;line-height:14px;color:#1f84d9;font-weight:400;letter-spacing:1.350px;left:107.55px;">Bret Conroy (275)</div>
<div class="t" style="top:685.15px;font-size:14px;line-height:14px;color:#4b4f57;font-weight:400;letter-spacing:1.150px;right:1331.77px;"><span style="margin-left:-2.00px;letter-spacing:-1.150px">1</span>6.75</div>
<div class="t" style="top:685.15px;font-size:14px;line-height:14px;color:#4b4f57;font-weight:400;letter-spacing:1.150px;right:1186.94px;">$528.54</div>
<div class="t" style="top:685.15px;font-size:14px;line-height:14px;color:#4b4f57;font-weight:400;letter-spacing:1.150px;right:1046.83px;">$30.00</div>
<div class="t" style="top:685.15px;font-size:14px;line-height:14px;color:#c3c6cc;font-weight:400;letter-spacing:1.150px;right:893.52px;">$0.00</div>
<div class="t" style="top:685.15px;font-size:14px;line-height:14px;color:#4b4f57;font-weight:400;letter-spacing:1.150px;right:753.14px;">$498.54</div>
<div class="t" style="top:685.15px;font-size:14px;line-height:14px;color:#4b4f57;font-weight:400;letter-spacing:1.150px;right:616.78px;">$60.78</div>
<div class="t" style="top:685.15px;font-size:14px;line-height:14px;color:#4b4f57;font-weight:400;letter-spacing:0.970px;right:501.82px;">22 Sep 2024</div>
<div class="t" style="top:685.15px;font-size:14px;line-height:14px;color:#4b4f57;font-weight:400;letter-spacing:0.970px;right:396.02px;">23 Sep 2024</div>
<svg class="s" style="left:1538px;top:686px;" width="14" height="14" viewBox="0 0 14 14" fill="none"><path d="M3.2 1.2h7.6a2.4 2.4 0 0 1 2.4 2.4v3.9a2.4 2.4 0 0 1-2.4 2.4H6.2l-3 2.6V9.9A2.4 2.4 0 0 1 .8 7.5V3.6a2.4 2.4 0 0 1 2.4-2.4z" stroke="#cdd1d6" stroke-width="1.2" stroke-linejoin="round"/><path d="M3.6 4.3h6.6M3.6 6.7h2.6" stroke="#cdd1d6" stroke-width="1.1"/></svg>
<svg class="s" style="left:1558.6px;top:686px;" width="15" height="15" viewBox="0 0 15 15" fill="none"><path d="M12.6 7.4V4.6a2 2 0 0 0-2-2H2.8a2 2 0 0 0-2 2v7.2a2 2 0 0 0 2 2h3.4" stroke="#cdd1d6" stroke-width="1.3"/><path d="M3.6 1v3M9.8 1v3M3 6.6h7M3 9.2h2.4" stroke="#cdd1d6" stroke-width="1.2"/><path d="M7 11.5h6.6M11.4 9.4l2.2 2.1-2.2 2.1" stroke="#cdd1d6" stroke-width="1.3"/></svg>
<svg class="s" style="left:1578.6px;top:686.5px;" width="17" height="14" viewBox="0 0 17 14" fill="none"><circle cx="6" cy="4" r="3.1" stroke="#cdd1d6" stroke-width="1.2"/><path d="M.8 12.8C2.4 9.6 4.2 8.7 5.9 8.7s3.5.9 5 4.1" stroke="#cdd1d6" stroke-width="1.25"/><circle cx="12.6" cy="6.3" r="1.9" stroke="#cdd1d6" stroke-width="1.1"/><path d="M11.2 10.1c1.5-.5 3.3.1 4.6 2.4" stroke="#cdd1d6" stroke-width="1.15"/></svg>
<svg class="s" style="left:1600.6px;top:686px;" width="15" height="14" viewBox="0 0 15 14" fill="none"><path d="M1.4 4.9h12.2c0-2-2.7-3.7-6.1-3.7S1.4 2.9 1.4 4.9z" stroke="#cdd1d6" stroke-width="1.3" stroke-linejoin="round"/><path d="M4 6.4v4.4M7.5 6.4v4.4M11 6.4v4.4" stroke="#cdd1d6" stroke-width="1.3"/><rect x="1.5" y="11.3" width="12" height="2" rx="1" stroke="#cdd1d6" stroke-width="1.2"/></svg>
<svg class="s" style="left:1623px;top:685.2px;" width="13" height="16" viewBox="0 0 13 16" fill="none"><path d="M.8 14.8V2.7A2 2 0 0 1 2.8.7h6.6a2 2 0 0 1 2 2v12.1l-1.3-.9-1.3.9-1.3-.9-1.4.9-1.3-.9-1.3.9-1.3-.9z" stroke="#cdd1d6" stroke-width="1.1" stroke-linejoin="round"/><path d="M9.3 3.3c-.3-.5-.9-.8-1.6-.8-.9 0-1.6.5-1.6 1.2s.7 1 1.6 1.2 1.7.5 1.7 1.3-.7 1.2-1.7 1.2c-.7 0-1.4-.3-1.7-.9M7.7 1.7v.8M7.7 7.4v.9" stroke="#cdd1d6" stroke-width="1.05"/><path d="M2.4 8.9h1.8M2.4 10.8h6.6" stroke="#cdd1d6" stroke-width="1.05"/></svg>
<svg class="s" style="left:1642.4px;top:686.2px;" width="15" height="13" viewBox="0 0 15 13" fill="none"><rect x="1.3" y="1.2" width="12.6" height="10.2" rx="1.5" stroke="#21b24f" stroke-width="1.5"/><path d="M3.6 3.8l4 3 4-3" stroke="#21b24f" stroke-width="1.5"/></svg>
<svg class="s" style="left:1683.6px;top:686.5px;" width="13" height="15" viewBox="0 0 13 15" fill="none"><path d="M2.4 1h6l3.4 3.4v8a2 2 0 0 1-2 2H2.4a2 2 0 0 1-2-2V3a2 2 0 0 1 2-2z" stroke="#1f84d9" stroke-width="1.3"/><path d="M8.2 1.2v2.3a1 1 0 0 0 1 1h2.4" stroke="#1f84d9" stroke-width="1.1"/><circle cx="6.2" cy="9.3" r="2.9" fill="#1f84d9"/><path d="M6 7.9v1.7l1.2.8" stroke="#fff" stroke-width=".9"/></svg>
<div class="t" style="top:685.75px;font-size:14px;line-height:14px;color:#1f84d9;font-weight:400;letter-spacing:0.400px;-webkit-text-stroke:0.25px #1f84d9;left:1700.55px;">x 3</div>
<div class="b" style="left:1797px;top:681.3px;width:98px;height:23.5px;border:1.4px solid #1f84d9;border-radius:5px;box-sizing:border-box;background:#fff;"></div>
<div class="b" style="left:1869px;top:681.3px;width:1.400000000000091px;height:23.5px;background:#1f84d9;"></div>
<svg class="s" style="left:1802px;top:685.4px;" width="16" height="15" viewBox="0 0 16 15" fill="none"><path d="M3.8 6.6V2.9A2 2 0 0 1 5.8.9h4.9l3.6 3.6v7.5a2 2 0 0 1-2 2H5.8a2 2 0 0 1-2-2v-.4" stroke="#1f84d9" stroke-width="1.3"/><path d="M10.5 1.1v2.3a1.1 1.1 0 0 0 1.1 1.1h2.5" stroke="#1f84d9" stroke-width="1.1"/><rect x=".9" y="6.4" width="9" height="5.3" rx="1.3" fill="#1f84d9"/><path d="M2.3 10.5V7.7h.9a.75.75 0 0 1 0 1.5h-.9M5 10.5V7.7h.6a1.3 1.3 0 0 1 0 2.8zM7.9 10.5V7.7h1.3M7.9 9h1" stroke="#fff" stroke-width=".55"/></svg>
<div class="t" style="top:685.75px;font-size:14px;line-height:14px;color:#1f84d9;font-weight:400;letter-spacing:1.500px;-webkit-text-stroke:0.25px #1f84d9;left:1824.45px;"><span style="margin-left:-2.00px;letter-spacing:-0.800px">1</span>9898</div>
<svg class="s" style="left:1874.5px;top:689px;" width="15" height="10" viewBox="0 0 15 10" fill="none"><path d="M1.2 1.4l6.2 6.2 6.2-6.2" stroke="#1f84d9" stroke-width="1.3"/></svg>
<div class="b" style="left:15px;top:740px;width:1888px;height:1px;background:#dcdfe3;"></div>
<div class="b" style="left:31px;top:716px;width:16px;height:16px;background:#fff;border:1.5px solid #4b4f57;border-radius:4px;box-sizing:border-box;"></div>
<div class="b av" style="left:79px;top:713px;">BS</div>
<div class="t" style="top:716.15px;font-size:14px;line-height:14px;color:#1f84d9;font-weight:400;letter-spacing:1.350px;left:107.55px;">Brianne Smith (<span style="margin-left:-2.00px;letter-spacing:-0.950px">1</span>74)</div>
<div class="t" style="top:717.15px;font-size:14px;line-height:14px;color:#4b4f57;font-weight:400;letter-spacing:1.150px;right:1331.82px;"><span style="margin-left:-2.00px;letter-spacing:-1.150px">1</span>4.00</div>
<div class="t" style="top:717.15px;font-size:14px;line-height:14px;color:#4b4f57;font-weight:400;letter-spacing:1.150px;right:1186.79px;">$456.60</div>
<div class="t" style="top:717.15px;font-size:14px;line-height:14px;color:#4b4f57;font-weight:400;letter-spacing:1.150px;right:1046.83px;">$<span style="margin-left:-2.00px;letter-spacing:-1.150px">1</span>5.00</div>
<div class="t" style="top:717.15px;font-size:14px;line-height:14px;color:#c3c6cc;font-weight:400;letter-spacing:1.150px;right:893.52px;">$0.00</div>
<div class="t" style="top:717.15px;font-size:14px;line-height:14px;color:#4b4f57;font-weight:400;letter-spacing:1.150px;right:752.99px;">$44<span style="margin-left:-2.00px;letter-spacing:-1.150px">1</span>.60</div>
<div class="t" style="top:717.15px;font-size:14px;line-height:14px;color:#4b4f57;font-weight:400;letter-spacing:1.150px;right:618.98px;">$52.5<span style="margin-left:-2.00px;letter-spacing:-1.150px">1</span></div>
<div class="t" style="top:717.15px;font-size:14px;line-height:14px;color:#4b4f57;font-weight:400;letter-spacing:0.970px;right:501.82px;">22 Sep 2024</div>
<div class="t" style="top:717.15px;font-size:14px;line-height:14px;color:#4b4f57;font-weight:400;letter-spacing:0.970px;right:396.02px;">23 Sep 2024</div>
<svg class="s" style="left:1538px;top:718px;" width="14" height="14" viewBox="0 0 14 14" fill="none"><path d="M3.2 1.2h7.6a2.4 2.4 0 0 1 2.4 2.4v3.9a2.4 2.4 0 0 1-2.4 2.4H6.2l-3 2.6V9.9A2.4 2.4 0 0 1 .8 7.5V3.6a2.4 2.4 0 0 1 2.4-2.4z" stroke="#cdd1d6" stroke-width="1.2" stroke-linejoin="round"/><path d="M3.6 4.3h6.6M3.6 6.7h2.6" stroke="#cdd1d6" stroke-width="1.1"/></svg>
<svg class="s" style="left:1558.6px;top:718px;" width="15" height="15" viewBox="0 0 15 15" fill="none"><path d="M12.6 7.4V4.6a2 2 0 0 0-2-2H2.8a2 2 0 0 0-2 2v7.2a2 2 0 0 0 2 2h3.4" stroke="#cdd1d6" stroke-width="1.3"/><path d="M3.6 1v3M9.8 1v3M3 6.6h7M3 9.2h2.4" stroke="#cdd1d6" stroke-width="1.2"/><path d="M7 11.5h6.6M11.4 9.4l2.2 2.1-2.2 2.1" stroke="#cdd1d6" stroke-width="1.3"/></svg>
<svg class="s" style="left:1578.6px;top:718.5px;" width="17" height="14" viewBox="0 0 17 14" fill="none"><circle cx="6" cy="4" r="3.1" stroke="#cdd1d6" stroke-width="1.2"/><path d="M.8 12.8C2.4 9.6 4.2 8.7 5.9 8.7s3.5.9 5 4.1" stroke="#cdd1d6" stroke-width="1.25"/><circle cx="12.6" cy="6.3" r="1.9" stroke="#cdd1d6" stroke-width="1.1"/><path d="M11.2 10.1c1.5-.5 3.3.1 4.6 2.4" stroke="#cdd1d6" stroke-width="1.15"/></svg>
<svg class="s" style="left:1600.6px;top:718px;" width="15" height="14" viewBox="0 0 15 14" fill="none"><path d="M1.4 4.9h12.2c0-2-2.7-3.7-6.1-3.7S1.4 2.9 1.4 4.9z" stroke="#cdd1d6" stroke-width="1.3" stroke-linejoin="round"/><path d="M4 6.4v4.4M7.5 6.4v4.4M11 6.4v4.4" stroke="#cdd1d6" stroke-width="1.3"/><rect x="1.5" y="11.3" width="12" height="2" rx="1" stroke="#cdd1d6" stroke-width="1.2"/></svg>
<svg class="s" style="left:1623px;top:717.2px;" width="13" height="16" viewBox="0 0 13 16" fill="none"><path d="M.8 14.8V2.7A2 2 0 0 1 2.8.7h6.6a2 2 0 0 1 2 2v12.1l-1.3-.9-1.3.9-1.3-.9-1.4.9-1.3-.9-1.3.9-1.3-.9z" stroke="#cdd1d6" stroke-width="1.1" stroke-linejoin="round"/><path d="M9.3 3.3c-.3-.5-.9-.8-1.6-.8-.9 0-1.6.5-1.6 1.2s.7 1 1.6 1.2 1.7.5 1.7 1.3-.7 1.2-1.7 1.2c-.7 0-1.4-.3-1.7-.9M7.7 1.7v.8M7.7 7.4v.9" stroke="#cdd1d6" stroke-width="1.05"/><path d="M2.4 8.9h1.8M2.4 10.8h6.6" stroke="#cdd1d6" stroke-width="1.05"/></svg>
<svg class="s" style="left:1642.4px;top:718.2px;" width="15" height="13" viewBox="0 0 15 13" fill="none"><rect x="1.3" y="1.2" width="12.6" height="10.2" rx="1.5" stroke="#21b24f" stroke-width="1.5"/><path d="M3.6 3.8l4 3 4-3" stroke="#21b24f" stroke-width="1.5"/></svg>
<svg class="s" style="left:1683.6px;top:718.5px;" width="13" height="15" viewBox="0 0 13 15" fill="none"><path d="M2.4 1h6l3.4 3.4v8a2 2 0 0 1-2 2H2.4a2 2 0 0 1-2-2V3a2 2 0 0 1 2-2z" stroke="#1f84d9" stroke-width="1.3"/><path d="M8.2 1.2v2.3a1 1 0 0 0 1 1h2.4" stroke="#1f84d9" stroke-width="1.1"/><circle cx="6.2" cy="9.3" r="2.9" fill="#1f84d9"/><path d="M6 7.9v1.7l1.2.8" stroke="#fff" stroke-width=".9"/></svg>
<div class="t" style="top:717.75px;font-size:14px;line-height:14px;color:#1f84d9;font-weight:400;letter-spacing:0.400px;-webkit-text-stroke:0.25px #1f84d9;left:1700.55px;">x 4</div>
<div class="b" style="left:1797px;top:713.3px;width:98px;height:23.5px;border:1.4px solid #1f84d9;border-radius:5px;box-sizing:border-box;background:#fff;"></div>
<div class="b" style="left:1869px;top:713.3px;width:1.400000000000091px;height:23.5px;background:#1f84d9;"></div>
<svg class="s" style="left:1802px;top:717.4px;" width="16" height="15" viewBox="0 0 16 15" fill="none"><path d="M3.8 6.6V2.9A2 2 0 0 1 5.8.9h4.9l3.6 3.6v7.5a2 2 0 0 1-2 2H5.8a2 2 0 0 1-2-2v-.4" stroke="#1f84d9" stroke-width="1.3"/><path d="M10.5 1.1v2.3a1.1 1.1 0 0 0 1.1 1.1h2.5" stroke="#1f84d9" stroke-width="1.1"/><rect x=".9" y="6.4" width="9" height="5.3" rx="1.3" fill="#1f84d9"/><path d="M2.3 10.5V7.7h.9a.75.75 0 0 1 0 1.5h-.9M5 10.5V7.7h.6a1.3 1.3 0 0 1 0 2.8zM7.9 10.5V7.7h1.3M7.9 9h1" stroke="#fff" stroke-width=".55"/></svg>
<div class="t" style="top:717.75px;font-size:14px;line-height:14px;color:#1f84d9;font-weight:400;letter-spacing:1.500px;-webkit-text-stroke:0.25px #1f84d9;left:1824.42px;"><span style="margin-left:-2.00px;letter-spacing:-0.800px">1</span>9880</div>
<svg class="s" style="left:1874.5px;top:721px;" width="15" height="10" viewBox="0 0 15 10" fill="none"><path d="M1.2 1.4l6.2 6.2 6.2-6.2" stroke="#1f84d9" stroke-width="1.3"/></svg>
<div class="b" style="left:15px;top:772px;width:1888px;height:1px;background:#dcdfe3;"></div>
<div class="b" style="left:31px;top:748px;width:16px;height:16px;background:#fff;border:1.5px solid #4b4f57;border-radius:4px;box-sizing:border-box;"></div>
<div class="b av" style="left:79px;top:745px;">BK</div>
<div class="t" style="top:748.15px;font-size:14px;line-height:14px;color:#1f84d9;font-weight:400;letter-spacing:1.350px;left:107.55px;">Brice Kris (33<span style="margin-left:-2.00px;letter-spacing:-0.950px">1</span>)</div>
<div class="t" style="top:749.15px;font-size:14px;line-height:14px;color:#4b4f57;font-weight:400;letter-spacing:1.150px;right:1331.82px;">38.00</div>
<div class="t" style="top:749.15px;font-size:14px;line-height:14px;color:#4b4f57;font-weight:400;letter-spacing:1.150px;right:1188.97px;">$<span style="margin-left:-2.00px;letter-spacing:-1.150px">1</span>,492.7<span style="margin-left:-2.00px;letter-spacing:-1.150px">1</span></div>
<div class="t" style="top:749.15px;font-size:14px;line-height:14px;color:#4b4f57;font-weight:400;letter-spacing:1.150px;right:1046.79px;">$30<span style="margin-left:-2.00px;letter-spacing:-1.150px">1</span>.00</div>
<div class="t" style="top:749.15px;font-size:14px;line-height:14px;color:#c3c6cc;font-weight:400;letter-spacing:1.150px;right:893.52px;">$0.00</div>
<div class="t" style="top:749.15px;font-size:14px;line-height:14px;color:#4b4f57;font-weight:400;letter-spacing:1.150px;right:755.17px;">$<span style="margin-left:-2.00px;letter-spacing:-1.150px">1</span>,<span style="margin-left:-2.00px;letter-spacing:-1.150px">1</span>9<span style="margin-left:-2.00px;letter-spacing:-1.150px">1</span>.7<span style="margin-left:-2.00px;letter-spacing:-1.150px">1</span></div>
<div class="t" style="top:749.15px;font-size:14px;line-height:14px;color:#4b4f57;font-weight:400;letter-spacing:1.150px;right:616.74px;">$<span style="margin-left:-2.00px;letter-spacing:-1.150px">1</span>7<span style="margin-left:-2.00px;letter-spacing:-1.150px">1</span>.66</div>
<div class="t" style="top:749.15px;font-size:14px;line-height:14px;color:#4b4f57;font-weight:400;letter-spacing:0.970px;right:501.82px;">22 Sep 2024</div>
<div class="t" style="top:749.15px;font-size:14px;line-height:14px;color:#4b4f57;font-weight:400;letter-spacing:0.970px;right:396.02px;">23 Sep 2024</div>
<svg class="s" style="left:1538px;top:750px;" width="14" height="14" viewBox="0 0 14 14" fill="none"><path d="M3.2 1.2h7.6a2.4 2.4 0 0 1 2.4 2.4v3.9a2.4 2.4 0 0 1-2.4 2.4H6.2l-3 2.6V9.9A2.4 2.4 0 0 1 .8 7.5V3.6a2.4 2.4 0 0 1 2.4-2.4z" stroke="#cdd1d6" stroke-width="1.2" stroke-linejoin="round"/><path d="M3.6 4.3h6.6M3.6 6.7h2.6" stroke="#cdd1d6" stroke-width="1.1"/></svg>
<svg class="s" style="left:1558.6px;top:750px;" width="15" height="15" viewBox="0 0 15 15" fill="none"><path d="M12.6 7.4V4.6a2 2 0 0 0-2-2H2.8a2 2 0 0 0-2 2v7.2a2 2 0 0 0 2 2h3.4" stroke="#cdd1d6" stroke-width="1.3"/><path d="M3.6 1v3M9.8 1v3M3 6.6h7M3 9.2h2.4" stroke="#cdd1d6" stroke-width="1.2"/><path d="M7 11.5h6.6M11.4 9.4l2.2 2.1-2.2 2.1" stroke="#cdd1d6" stroke-width="1.3"/></svg>
<svg class="s" style="left:1578.6px;top:750.5px;" width="17" height="14" viewBox="0 0 17 14" fill="none"><circle cx="6" cy="4" r="3.1" stroke="#cdd1d6" stroke-width="1.2"/><path d="M.8 12.8C2.4 9.6 4.2 8.7 5.9 8.7s3.5.9 5 4.1" stroke="#cdd1d6" stroke-width="1.25"/><circle cx="12.6" cy="6.3" r="1.9" stroke="#cdd1d6" stroke-width="1.1"/><path d="M11.2 10.1c1.5-.5 3.3.1 4.6 2.4" stroke="#cdd1d6" stroke-width="1.15"/></svg>
<svg class="s" style="left:1600.6px;top:750px;" width="15" height="14" viewBox="0 0 15 14" fill="none"><path d="M1.4 4.9h12.2c0-2-2.7-3.7-6.1-3.7S1.4 2.9 1.4 4.9z" stroke="#cdd1d6" stroke-width="1.3" stroke-linejoin="round"/><path d="M4 6.4v4.4M7.5 6.4v4.4M11 6.4v4.4" stroke="#cdd1d6" stroke-width="1.3"/><rect x="1.5" y="11.3" width="12" height="2" rx="1" stroke="#cdd1d6" stroke-width="1.2"/></svg>
<svg class="s" style="left:1623px;top:749.2px;" width="13" height="16" viewBox="0 0 13 16" fill="none"><path d="M.8 14.8V2.7A2 2 0 0 1 2.8.7h6.6a2 2 0 0 1 2 2v12.1l-1.3-.9-1.3.9-1.3-.9-1.4.9-1.3-.9-1.3.9-1.3-.9z" stroke="#cdd1d6" stroke-width="1.1" stroke-linejoin="round"/><path d="M9.3 3.3c-.3-.5-.9-.8-1.6-.8-.9 0-1.6.5-1.6 1.2s.7 1 1.6 1.2 1.7.5 1.7 1.3-.7 1.2-1.7 1.2c-.7 0-1.4-.3-1.7-.9M7.7 1.7v.8M7.7 7.4v.9" stroke="#cdd1d6" stroke-width="1.05"/><path d="M2.4 8.9h1.8M2.4 10.8h6.6" stroke="#cdd1d6" stroke-width="1.05"/></svg>
<svg class="s" style="left:1642.4px;top:750.2px;" width="15" height="13" viewBox="0 0 15 13" fill="none"><rect x="1.3" y="1.2" width="12.6" height="10.2" rx="1.5" stroke="#21b24f" stroke-width="1.5"/><path d="M3.6 3.8l4 3 4-3" stroke="#21b24f" stroke-width="1.5"/></svg>
<svg class="s" style="left:1683.6px;top:750.5px;" width="13" height="15" viewBox="0 0 13 15" fill="none"><path d="M2.4 1h6l3.4 3.4v8a2 2 0 0 1-2 2H2.4a2 2 0 0 1-2-2V3a2 2 0 0 1 2-2z" stroke="#1f84d9" stroke-width="1.3"/><path d="M8.2 1.2v2.3a1 1 0 0 0 1 1h2.4" stroke="#1f84d9" stroke-width="1.1"/><circle cx="6.2" cy="9.3" r="2.9" fill="#1f84d9"/><path d="M6 7.9v1.7l1.2.8" stroke="#fff" stroke-width=".9"/></svg>
<div class="t" style="top:749.75px;font-size:14px;line-height:14px;color:#1f84d9;font-weight:400;letter-spacing:1.500px;-webkit-text-stroke:0.25px #1f84d9;left:1700.15px;">3<span style="margin-left:-2.00px;letter-spacing:-0.800px">1</span>7<span style="margin-left:-2.00px;letter-spacing:-0.800px">1</span>2</div>
<div class="b" style="left:1797px;top:745.3px;width:98px;height:23.5px;border:1.4px solid #1f84d9;border-radius:5px;box-sizing:border-box;background:#fff;"></div>
<div class="b" style="left:1869px;top:745.3px;width:1.400000000000091px;height:23.5px;background:#1f84d9;"></div>
<svg class="s" style="left:1802px;top:749.4px;" width="16" height="15" viewBox="0 0 16 15" fill="none"><path d="M3.8 6.6V2.9A2 2 0 0 1 5.8.9h4.9l3.6 3.6v7.5a2 2 0 0 1-2 2H5.8a2 2 0 0 1-2-2v-.4" stroke="#1f84d9" stroke-width="1.3"/><path d="M10.5 1.1v2.3a1.1 1.1 0 0 0 1.1 1.1h2.5" stroke="#1f84d9" stroke-width="1.1"/><rect x=".9" y="6.4" width="9" height="5.3" rx="1.3" fill="#1f84d9"/><path d="M2.3 10.5V7.7h.9a.75.75 0 0 1 0 1.5h-.9M5 10.5V7.7h.6a1.3 1.3 0 0 1 0 2.8zM7.9 10.5V7.7h1.3M7.9 9h1" stroke="#fff" stroke-width=".55"/></svg>
<div class="t" style="top:749.75px;font-size:14px;line-height:14px;color:#1f84d9;font-weight:400;letter-spacing:1.500px;-webkit-text-stroke:0.25px #1f84d9;left:1824.45px;"><span style="margin-left:-2.00px;letter-spacing:-0.800px">1</span>9906</div>
<svg class="s" style="left:1874.5px;top:753px;" width="15" height="10" viewBox="0 0 15 10" fill="none"><path d="M1.2 1.4l6.2 6.2 6.2-6.2" stroke="#1f84d9" stroke-width="1.3"/></svg>
<div class="b" style="left:15px;top:804px;width:1888px;height:1px;background:#dcdfe3;"></div>
<div class="b" style="left:31px;top:780px;width:16px;height:16px;background:#fff;border:1.5px solid #4b4f57;border-radius:4px;box-sizing:border-box;"></div>
<div class="b av" style="left:79px;top:777px;">BM</div>
<div class="t" style="top:780.15px;font-size:14px;line-height:14px;color:#1f84d9;font-weight:400;letter-spacing:1.350px;left:107.55px;">Britney Marks (3<span style="margin-left:-2.00px;letter-spacing:-0.950px">1</span>)</div>
<div class="t" style="top:781.15px;font-size:14px;line-height:14px;color:#4b4f57;font-weight:400;letter-spacing:1.150px;right:1331.75px;">8.25</div>
<div class="t" style="top:781.15px;font-size:14px;line-height:14px;color:#4b4f57;font-weight:400;letter-spacing:1.150px;right:1186.94px;">$327.84</div>
<div class="t" style="top:781.15px;font-size:14px;line-height:14px;color:#c3c6cc;font-weight:400;letter-spacing:1.150px;right:1046.82px;">$0.00</div>
<div class="t" style="top:781.15px;font-size:14px;line-height:14px;color:#c3c6cc;font-weight:400;letter-spacing:1.150px;right:893.52px;">$0.00</div>
<div class="t" style="top:781.15px;font-size:14px;line-height:14px;color:#4b4f57;font-weight:400;letter-spacing:1.150px;right:753.14px;">$327.84</div>
<div class="t" style="top:781.15px;font-size:14px;line-height:14px;color:#4b4f57;font-weight:400;letter-spacing:1.150px;right:616.83px;">$37.70</div>
<div class="t" style="top:781.15px;font-size:14px;line-height:14px;color:#4b4f57;font-weight:400;letter-spacing:0.970px;right:501.82px;">22 Sep 2024</div>
<div class="t" style="top:781.15px;font-size:14px;line-height:14px;color:#4b4f57;font-weight:400;letter-spacing:0.970px;right:396.02px;">23 Sep 2024</div>
<svg class="s" style="left:1538px;top:782px;" width="14" height="14" viewBox="0 0 14 14" fill="none"><path d="M3.2 1.2h7.6a2.4 2.4 0 0 1 2.4 2.4v3.9a2.4 2.4 0 0 1-2.4 2.4H6.2l-3 2.6V9.9A2.4 2.4 0 0 1 .8 7.5V3.6a2.4 2.4 0 0 1 2.4-2.4z" stroke="#cdd1d6" stroke-width="1.2" stroke-linejoin="round"/><path d="M3.6 4.3h6.6M3.6 6.7h2.6" stroke="#cdd1d6" stroke-width="1.1"/></svg>
<svg class="s" style="left:1558.6px;top:782px;" width="15" height="15" viewBox="0 0 15 15" fill="none"><path d="M12.6 7.4V4.6a2 2 0 0 0-2-2H2.8a2 2 0 0 0-2 2v7.2a2 2 0 0 0 2 2h3.4" stroke="#596069" stroke-width="1.3"/><path d="M3.6 1v3M9.8 1v3M3 6.6h7M3 9.2h2.4" stroke="#596069" stroke-width="1.2"/><path d="M7 11.5h6.6M11.4 9.4l2.2 2.1-2.2 2.1" stroke="#596069" stroke-width="1.3"/></svg>
<svg class="s" style="left:1578.6px;top:782.5px;" width="17" height="14" viewBox="0 0 17 14" fill="none"><circle cx="6" cy="4" r="3.1" stroke="#cdd1d6" stroke-width="1.2"/><path d="M.8 12.8C2.4 9.6 4.2 8.7 5.9 8.7s3.5.9 5 4.1" stroke="#cdd1d6" stroke-width="1.25"/><circle cx="12.6" cy="6.3" r="1.9" stroke="#cdd1d6" stroke-width="1.1"/><path d="M11.2 10.1c1.5-.5 3.3.1 4.6 2.4" stroke="#cdd1d6" stroke-width="1.15"/></svg>
<svg class="s" style="left:1600.6px;top:782px;" width="15" height="14" viewBox="0 0 15 14" fill="none"><path d="M1.4 4.9h12.2c0-2-2.7-3.7-6.1-3.7S1.4 2.9 1.4 4.9z" stroke="#cdd1d6" stroke-width="1.3" stroke-linejoin="round"/><path d="M4 6.4v4.4M7.5 6.4v4.4M11 6.4v4.4" stroke="#cdd1d6" stroke-width="1.3"/><rect x="1.5" y="11.3" width="12" height="2" rx="1" stroke="#cdd1d6" stroke-width="1.2"/></svg>
<svg class="s" style="left:1623px;top:781.2px;" width="13" height="16" viewBox="0 0 13 16" fill="none"><path d="M.8 14.8V2.7A2 2 0 0 1 2.8.7h6.6a2 2 0 0 1 2 2v12.1l-1.3-.9-1.3.9-1.3-.9-1.4.9-1.3-.9-1.3.9-1.3-.9z" stroke="#cdd1d6" stroke-width="1.1" stroke-linejoin="round"/><path d="M9.3 3.3c-.3-.5-.9-.8-1.6-.8-.9 0-1.6.5-1.6 1.2s.7 1 1.6 1.2 1.7.5 1.7 1.3-.7 1.2-1.7 1.2c-.7 0-1.4-.3-1.7-.9M7.7 1.7v.8M7.7 7.4v.9" stroke="#cdd1d6" stroke-width="1.05"/><path d="M2.4 8.9h1.8M2.4 10.8h6.6" stroke="#cdd1d6" stroke-width="1.05"/></svg>
<svg class="s" style="left:1642.4px;top:782.2px;" width="15" height="13" viewBox="0 0 15 13" fill="none"><rect x="1.3" y="1.2" width="12.6" height="10.2" rx="1.5" stroke="#21b24f" stroke-width="1.5"/><path d="M3.6 3.8l4 3 4-3" stroke="#21b24f" stroke-width="1.5"/></svg>
<svg class="s" style="left:1683.6px;top:782.5px;" width="13" height="15" viewBox="0 0 13 15" fill="none"><path d="M2.4 1h6l3.4 3.4v8a2 2 0 0 1-2 2H2.4a2 2 0 0 1-2-2V3a2 2 0 0 1 2-2z" stroke="#1f84d9" stroke-width="1.3"/><path d="M8.2 1.2v2.3a1 1 0 0 0 1 1h2.4" stroke="#1f84d9" stroke-width="1.1"/><circle cx="6.2" cy="9.3" r="2.9" fill="#1f84d9"/><path d="M6 7.9v1.7l1.2.8" stroke="#fff" stroke-width=".9"/></svg>
<div class="t" style="top:781.75px;font-size:14px;line-height:14px;color:#1f84d9;font-weight:400;letter-spacing:0.400px;-webkit-text-stroke:0.25px #1f84d9;left:1700.55px;">x 2</div>
<div class="b" style="left:1797px;top:777.3px;width:98px;height:23.5px;border:1.4px solid #1f84d9;border-radius:5px;box-sizing:border-box;background:#fff;"></div>
<div class="b" style="left:1869px;top:777.3px;width:1.400000000000091px;height:23.5px;background:#1f84d9;"></div>
<svg class="s" style="left:1802px;top:781.4px;" width="16" height="15" viewBox="0 0 16 15" fill="none"><path d="M3.8 6.6V2.9A2 2 0 0 1 5.8.9h4.9l3.6 3.6v7.5a2 2 0 0 1-2 2H5.8a2 2 0 0 1-2-2v-.4" stroke="#1f84d9" stroke-width="1.3"/><path d="M10.5 1.1v2.3a1.1 1.1 0 0 0 1.1 1.1h2.5" stroke="#1f84d9" stroke-width="1.1"/><rect x=".9" y="6.4" width="9" height="5.3" rx="1.3" fill="#1f84d9"/><path d="M2.3 10.5V7.7h.9a.75.75 0 0 1 0 1.5h-.9M5 10.5V7.7h.6a1.3 1.3 0 0 1 0 2.8zM7.9 10.5V7.7h1.3M7.9 9h1" stroke="#fff" stroke-width=".55"/></svg>
<div class="t" style="top:781.75px;font-size:14px;line-height:14px;color:#1f84d9;font-weight:400;letter-spacing:1.500px;-webkit-text-stroke:0.25px #1f84d9;left:1826.60px;"><span style="margin-left:-2.00px;letter-spacing:-0.800px">1</span>96<span style="margin-left:-2.00px;letter-spacing:-0.800px">1</span>5</div>
<svg class="s" style="left:1874.5px;top:785px;" width="15" height="10" viewBox="0 0 15 10" fill="none"><path d="M1.2 1.4l6.2 6.2 6.2-6.2" stroke="#1f84d9" stroke-width="1.3"/></svg>
<div class="b" style="left:15px;top:836px;width:1888px;height:1px;background:#dcdfe3;"></div>
<div class="b" style="left:31px;top:812px;width:16px;height:16px;background:#fff;border:1.5px solid #4b4f57;border-radius:4px;box-sizing:border-box;"></div>
<div class="b av" style="left:79px;top:809px;">CL</div>
<div class="t" style="top:812.15px;font-size:14px;line-height:14px;color:#1f84d9;font-weight:400;letter-spacing:1.350px;left:108.00px;">Cathryn Lang (3<span style="margin-left:-2.00px;letter-spacing:-0.950px">1</span>0)</div>
<div class="t" style="top:813.15px;font-size:14px;line-height:14px;color:#4b4f57;font-weight:400;letter-spacing:1.150px;right:1331.77px;">28.75</div>
<div class="t" style="top:813.15px;font-size:14px;line-height:14px;color:#4b4f57;font-weight:400;letter-spacing:1.150px;right:1186.97px;">$<span style="margin-left:-2.00px;letter-spacing:-1.150px">1</span>,094.74</div>
<div class="t" style="top:813.15px;font-size:14px;line-height:14px;color:#4b4f57;font-weight:400;letter-spacing:1.150px;right:1046.79px;">$285.00</div>
<div class="t" style="top:813.15px;font-size:14px;line-height:14px;color:#c3c6cc;font-weight:400;letter-spacing:1.150px;right:893.52px;">$0.00</div>
<div class="t" style="top:813.15px;font-size:14px;line-height:14px;color:#4b4f57;font-weight:400;letter-spacing:1.150px;right:753.14px;">$809.74</div>
<div class="t" style="top:813.15px;font-size:14px;line-height:14px;color:#4b4f57;font-weight:400;letter-spacing:1.150px;right:616.79px;">$<span style="margin-left:-2.00px;letter-spacing:-1.150px">1</span>25.90</div>
<div class="t" style="top:813.15px;font-size:14px;line-height:14px;color:#4b4f57;font-weight:400;letter-spacing:0.970px;right:501.82px;">22 Sep 2024</div>
<div class="t" style="top:813.15px;font-size:14px;line-height:14px;color:#4b4f57;font-weight:400;letter-spacing:0.970px;right:396.02px;">23 Sep 2024</div>
<svg class="s" style="left:1538px;top:814px;" width="14" height="14" viewBox="0 0 14 14" fill="none"><path d="M3.2 1.2h7.6a2.4 2.4 0 0 1 2.4 2.4v3.9a2.4 2.4 0 0 1-2.4 2.4H6.2l-3 2.6V9.9A2.4 2.4 0 0 1 .8 7.5V3.6a2.4 2.4 0 0 1 2.4-2.4z" stroke="#cdd1d6" stroke-width="1.2" stroke-linejoin="round"/><path d="M3.6 4.3h6.6M3.6 6.7h2.6" stroke="#cdd1d6" stroke-width="1.1"/></svg>
<svg class="s" style="left:1558.6px;top:814px;" width="15" height="15" viewBox="0 0 15 15" fill="none"><path d="M12.6 7.4V4.6a2 2 0 0 0-2-2H2.8a2 2 0 0 0-2 2v7.2a2 2 0 0 0 2 2h3.4" stroke="#cdd1d6" stroke-width="1.3"/><path d="M3.6 1v3M9.8 1v3M3 6.6h7M3 9.2h2.4" stroke="#cdd1d6" stroke-width="1.2"/><path d="M7 11.5h6.6M11.4 9.4l2.2 2.1-2.2 2.1" stroke="#cdd1d6" stroke-width="1.3"/></svg>
<svg class="s" style="left:1578.6px;top:814.5px;" width="17" height="14" viewBox="0 0 17 14" fill="none"><circle cx="6" cy="4" r="3.1" stroke="#cdd1d6" stroke-width="1.2"/><path d="M.8 12.8C2.4 9.6 4.2 8.7 5.9 8.7s3.5.9 5 4.1" stroke="#cdd1d6" stroke-width="1.25"/><circle cx="12.6" cy="6.3" r="1.9" stroke="#cdd1d6" stroke-width="1.1"/><path d="M11.2 10.1c1.5-.5 3.3.1 4.6 2.4" stroke="#cdd1d6" stroke-width="1.15"/></svg>
<svg class="s" style="left:1600.6px;top:814px;" width="15" height="14" viewBox="0 0 15 14" fill="none"><path d="M1.4 4.9h12.2c0-2-2.7-3.7-6.1-3.7S1.4 2.9 1.4 4.9z" stroke="#f3a01f" stroke-width="1.3" stroke-linejoin="round"/><path d="M4 6.4v4.4M7.5 6.4v4.4M11 6.4v4.4" stroke="#f3a01f" stroke-width="1.3"/><rect x="1.5" y="11.3" width="12" height="2" rx="1" stroke="#f3a01f" stroke-width="1.2"/></svg>
<svg class="s" style="left:1623px;top:813.2px;" width="13" height="16" viewBox="0 0 13 16" fill="none"><path d="M.8 14.8V2.7A2 2 0 0 1 2.8.7h6.6a2 2 0 0 1 2 2v12.1l-1.3-.9-1.3.9-1.3-.9-1.4.9-1.3-.9-1.3.9-1.3-.9z" stroke="#cdd1d6" stroke-width="1.1" stroke-linejoin="round"/><path d="M9.3 3.3c-.3-.5-.9-.8-1.6-.8-.9 0-1.6.5-1.6 1.2s.7 1 1.6 1.2 1.7.5 1.7 1.3-.7 1.2-1.7 1.2c-.7 0-1.4-.3-1.7-.9M7.7 1.7v.8M7.7 7.4v.9" stroke="#cdd1d6" stroke-width="1.05"/><path d="M2.4 8.9h1.8M2.4 10.8h6.6" stroke="#cdd1d6" stroke-width="1.05"/></svg>
<svg class="s" style="left:1642.4px;top:814.2px;" width="15" height="13" viewBox="0 0 15 13" fill="none"><rect x="1.3" y="1.2" width="12.6" height="10.2" rx="1.5" stroke="#21b24f" stroke-width="1.5"/><path d="M3.6 3.8l4 3 4-3" stroke="#21b24f" stroke-width="1.5"/></svg>
<svg class="s" style="left:1683.6px;top:814.5px;" width="13" height="15" viewBox="0 0 13 15" fill="none"><path d="M2.4 1h6l3.4 3.4v8a2 2 0 0 1-2 2H2.4a2 2 0 0 1-2-2V3a2 2 0 0 1 2-2z" stroke="#1f84d9" stroke-width="1.3"/><path d="M8.2 1.2v2.3a1 1 0 0 0 1 1h2.4" stroke="#1f84d9" stroke-width="1.1"/><circle cx="6.2" cy="9.3" r="2.9" fill="#1f84d9"/><path d="M6 7.9v1.7l1.2.8" stroke="#fff" stroke-width=".9"/></svg>
<div class="t" style="top:813.75px;font-size:14px;line-height:14px;color:#1f84d9;font-weight:400;letter-spacing:0.400px;-webkit-text-stroke:0.25px #1f84d9;left:1700.55px;">x 3</div>
<div class="b" style="left:1797px;top:809.3px;width:98px;height:23.5px;border:1.4px solid #1f84d9;border-radius:5px;box-sizing:border-box;background:#fff;"></div>
<div class="b" style="left:1869px;top:809.3px;width:1.400000000000091px;height:23.5px;background:#1f84d9;"></div>
<svg class="s" style="left:1802px;top:813.4px;" width="16" height="15" viewBox="0 0 16 15" fill="none"><path d="M3.8 6.6V2.9A2 2 0 0 1 5.8.9h4.9l3.6 3.6v7.5a2 2 0 0 1-2 2H5.8a2 2 0 0 1-2-2v-.4" stroke="#1f84d9" stroke-width="1.3"/><path d="M10.5 1.1v2.3a1.1 1.1 0 0 0 1.1 1.1h2.5" stroke="#1f84d9" stroke-width="1.1"/><rect x=".9" y="6.4" width="9" height="5.3" rx="1.3" fill="#1f84d9"/><path d="M2.3 10.5V7.7h.9a.75.75 0 0 1 0 1.5h-.9M5 10.5V7.7h.6a1.3 1.3 0 0 1 0 2.8zM7.9 10.5V7.7h1.3M7.9 9h1" stroke="#fff" stroke-width=".55"/></svg>
<div class="t" style="top:813.75px;font-size:14px;line-height:14px;color:#1f84d9;font-weight:400;letter-spacing:1.500px;-webkit-text-stroke:0.25px #1f84d9;left:1824.48px;"><span style="margin-left:-2.00px;letter-spacing:-0.800px">1</span>9869</div>
<svg class="s" style="left:1874.5px;top:817px;" width="15" height="10" viewBox="0 0 15 10" fill="none"><path d="M1.2 1.4l6.2 6.2 6.2-6.2" stroke="#1f84d9" stroke-width="1.3"/></svg>
<div class="b" style="left:15px;top:868px;width:1888px;height:1px;background:#dcdfe3;"></div>
<div class="b" style="left:31px;top:844px;width:16px;height:16px;background:#fff;border:1.5px solid #4b4f57;border-radius:4px;box-sizing:border-box;"></div>
<div class="b av" style="left:79px;top:841px;">CF</div>
<div class="t" style="top:844.15px;font-size:14px;line-height:14px;color:#1f84d9;font-weight:400;letter-spacing:1.350px;left:108.00px;">Cindy Franecki (390)</div>
<div class="t" style="top:845.15px;font-size:14px;line-height:14px;color:#4b4f57;font-weight:400;letter-spacing:1.150px;right:1331.75px;">9.75</div>
<div class="t" style="top:845.15px;font-size:14px;line-height:14px;color:#4b4f57;font-weight:400;letter-spacing:1.150px;right:1186.64px;">$200.67</div>
<div class="t" style="top:845.15px;font-size:14px;line-height:14px;color:#c3c6cc;font-weight:400;letter-spacing:1.150px;right:1046.82px;">$0.00</div>
<div class="t" style="top:845.15px;font-size:14px;line-height:14px;color:#c3c6cc;font-weight:400;letter-spacing:1.150px;right:893.52px;">$0.00</div>
<div class="t" style="top:845.15px;font-size:14px;line-height:14px;color:#4b4f57;font-weight:400;letter-spacing:1.150px;right:752.84px;">$200.67</div>
<div class="t" style="top:845.15px;font-size:14px;line-height:14px;color:#c3c6cc;font-weight:400;letter-spacing:1.150px;right:616.82px;">$0.00</div>
<div class="t" style="top:845.15px;font-size:14px;line-height:14px;color:#4b4f57;font-weight:400;letter-spacing:0.970px;right:501.82px;">22 Sep 2024</div>
<div class="t" style="top:845.15px;font-size:14px;line-height:14px;color:#4b4f57;font-weight:400;letter-spacing:0.970px;right:396.02px;">23 Sep 2024</div>
<svg class="s" style="left:1538px;top:846px;" width="14" height="14" viewBox="0 0 14 14" fill="none"><path d="M3.2 1.2h7.6a2.4 2.4 0 0 1 2.4 2.4v3.9a2.4 2.4 0 0 1-2.4 2.4H6.2l-3 2.6V9.9A2.4 2.4 0 0 1 .8 7.5V3.6a2.4 2.4 0 0 1 2.4-2.4z" stroke="#cdd1d6" stroke-width="1.2" stroke-linejoin="round"/><path d="M3.6 4.3h6.6M3.6 6.7h2.6" stroke="#cdd1d6" stroke-width="1.1"/></svg>
<svg class="s" style="left:1558.6px;top:846px;" width="15" height="15" viewBox="0 0 15 15" fill="none"><path d="M12.6 7.4V4.6a2 2 0 0 0-2-2H2.8a2 2 0 0 0-2 2v7.2a2 2 0 0 0 2 2h3.4" stroke="#cdd1d6" stroke-width="1.3"/><path d="M3.6 1v3M9.8 1v3M3 6.6h7M3 9.2h2.4" stroke="#cdd1d6" stroke-width="1.2"/><path d="M7 11.5h6.6M11.4 9.4l2.2 2.1-2.2 2.1" stroke="#cdd1d6" stroke-width="1.3"/></svg>
<svg class="s" style="left:1578.6px;top:846.5px;" width="17" height="14" viewBox="0 0 17 14" fill="none"><circle cx="6" cy="4" r="3.1" stroke="#596069" stroke-width="1.2"/><path d="M.8 12.8C2.4 9.6 4.2 8.7 5.9 8.7s3.5.9 5 4.1" stroke="#596069" stroke-width="1.25"/><circle cx="12.6" cy="6.3" r="1.9" stroke="#596069" stroke-width="1.1"/><path d="M11.2 10.1c1.5-.5 3.3.1 4.6 2.4" stroke="#596069" stroke-width="1.15"/></svg>
<svg class="s" style="left:1600.6px;top:846px;" width="15" height="14" viewBox="0 0 15 14" fill="none"><path d="M1.4 4.9h12.2c0-2-2.7-3.7-6.1-3.7S1.4 2.9 1.4 4.9z" stroke="#cdd1d6" stroke-width="1.3" stroke-linejoin="round"/><path d="M4 6.4v4.4M7.5 6.4v4.4M11 6.4v4.4" stroke="#cdd1d6" stroke-width="1.3"/><rect x="1.5" y="11.3" width="12" height="2" rx="1" stroke="#cdd1d6" stroke-width="1.2"/></svg>
<svg class="s" style="left:1623px;top:845.2px;" width="13" height="16" viewBox="0 0 13 16" fill="none"><path d="M.8 14.8V2.7A2 2 0 0 1 2.8.7h6.6a2 2 0 0 1 2 2v12.1l-1.3-.9-1.3.9-1.3-.9-1.4.9-1.3-.9-1.3.9-1.3-.9z" stroke="#cdd1d6" stroke-width="1.1" stroke-linejoin="round"/><path d="M9.3 3.3c-.3-.5-.9-.8-1.6-.8-.9 0-1.6.5-1.6 1.2s.7 1 1.6 1.2 1.7.5 1.7 1.3-.7 1.2-1.7 1.2c-.7 0-1.4-.3-1.7-.9M7.7 1.7v.8M7.7 7.4v.9" stroke="#cdd1d6" stroke-width="1.05"/><path d="M2.4 8.9h1.8M2.4 10.8h6.6" stroke="#cdd1d6" stroke-width="1.05"/></svg>
<svg class="s" style="left:1642.4px;top:846.2px;" width="15" height="13" viewBox="0 0 15 13" fill="none"><rect x="1.3" y="1.2" width="12.6" height="10.2" rx="1.5" stroke="#21b24f" stroke-width="1.5"/><path d="M3.6 3.8l4 3 4-3" stroke="#21b24f" stroke-width="1.5"/></svg>
<svg class="s" style="left:1683.6px;top:846.5px;" width="13" height="15" viewBox="0 0 13 15" fill="none"><path d="M2.4 1h6l3.4 3.4v8a2 2 0 0 1-2 2H2.4a2 2 0 0 1-2-2V3a2 2 0 0 1 2-2z" stroke="#1f84d9" stroke-width="1.3"/><path d="M8.2 1.2v2.3a1 1 0 0 0 1 1h2.4" stroke="#1f84d9" stroke-width="1.1"/><circle cx="6.2" cy="9.3" r="2.9" fill="#1f84d9"/><path d="M6 7.9v1.7l1.2.8" stroke="#fff" stroke-width=".9"/></svg>
<div class="t" style="top:845.75px;font-size:14px;line-height:14px;color:#1f84d9;font-weight:400;letter-spacing:0.400px;-webkit-text-stroke:0.25px #1f84d9;left:1700.55px;">x 2</div>
<div class="b" style="left:1797px;top:841.3px;width:98px;height:23.5px;border:1.4px solid #1f84d9;border-radius:5px;box-sizing:border-box;background:#fff;"></div>
<div class="b" style="left:1869px;top:841.3px;width:1.400000000000091px;height:23.5px;background:#1f84d9;"></div>
<svg class="s" style="left:1802px;top:845.4px;" width="16" height="15" viewBox="0 0 16 15" fill="none"><path d="M3.8 6.6V2.9A2 2 0 0 1 5.8.9h4.9l3.6 3.6v7.5a2 2 0 0 1-2 2H5.8a2 2 0 0 1-2-2v-.4" stroke="#1f84d9" stroke-width="1.3"/><path d="M10.5 1.1v2.3a1.1 1.1 0 0 0 1.1 1.1h2.5" stroke="#1f84d9" stroke-width="1.1"/><rect x=".9" y="6.4" width="9" height="5.3" rx="1.3" fill="#1f84d9"/><path d="M2.3 10.5V7.7h.9a.75.75 0 0 1 0 1.5h-.9M5 10.5V7.7h.6a1.3 1.3 0 0 1 0 2.8zM7.9 10.5V7.7h1.3M7.9 9h1" stroke="#fff" stroke-width=".55"/></svg>
<div class="t" style="top:845.75px;font-size:14px;line-height:14px;color:#1f84d9;font-weight:400;letter-spacing:1.500px;-webkit-text-stroke:0.25px #1f84d9;left:1826.65px;"><span style="margin-left:-2.00px;letter-spacing:-0.800px">1</span>988<span style="margin-left:-2.00px;letter-spacing:-0.800px">1</span></div>
<svg class="s" style="left:1874.5px;top:849px;" width="15" height="10" viewBox="0 0 15 10" fill="none"><path d="M1.2 1.4l6.2 6.2 6.2-6.2" stroke="#1f84d9" stroke-width="1.3"/></svg>
<div class="b" style="left:15px;top:900px;width:1888px;height:1px;background:#dcdfe3;"></div>
<div class="b" style="left:31px;top:876px;width:16px;height:16px;background:#fff;border:1.5px solid #4b4f57;border-radius:4px;box-sizing:border-box;"></div>
<div class="b av" style="left:79px;top:873px;">CG</div>
<div class="t" style="top:876.15px;font-size:14px;line-height:14px;color:#1f84d9;font-weight:400;letter-spacing:1.350px;left:108.00px;">Constance Gottlieb (323)</div>
<div class="t" style="top:877.15px;font-size:14px;line-height:14px;color:#4b4f57;font-weight:400;letter-spacing:1.150px;right:1331.76px;"><span style="margin-left:-2.00px;letter-spacing:-1.150px">1</span><span style="margin-left:-2.00px;letter-spacing:-1.150px">1</span>.75</div>
<div class="t" style="top:877.15px;font-size:14px;line-height:14px;color:#4b4f57;font-weight:400;letter-spacing:1.150px;right:1186.69px;">$448.29</div>
<div class="t" style="top:877.15px;font-size:14px;line-height:14px;color:#4b4f57;font-weight:400;letter-spacing:1.150px;right:1046.83px;">$<span style="margin-left:-2.00px;letter-spacing:-1.150px">1</span>4.00</div>
<div class="t" style="top:877.15px;font-size:14px;line-height:14px;color:#c3c6cc;font-weight:400;letter-spacing:1.150px;right:893.52px;">$0.00</div>
<div class="t" style="top:877.15px;font-size:14px;line-height:14px;color:#4b4f57;font-weight:400;letter-spacing:1.150px;right:752.89px;">$434.29</div>
<div class="t" style="top:877.15px;font-size:14px;line-height:14px;color:#4b4f57;font-weight:400;letter-spacing:1.150px;right:616.78px;">$5<span style="margin-left:-2.00px;letter-spacing:-1.150px">1</span>.55</div>
<div class="t" style="top:877.15px;font-size:14px;line-height:14px;color:#4b4f57;font-weight:400;letter-spacing:0.970px;right:501.82px;">22 Sep 2024</div>
<div class="t" style="top:877.15px;font-size:14px;line-height:14px;color:#4b4f57;font-weight:400;letter-spacing:0.970px;right:396.02px;">23 Sep 2024</div>
<svg class="s" style="left:1538px;top:878px;" width="14" height="14" viewBox="0 0 14 14" fill="none"><path d="M3.2 1.2h7.6a2.4 2.4 0 0 1 2.4 2.4v3.9a2.4 2.4 0 0 1-2.4 2.4H6.2l-3 2.6V9.9A2.4 2.4 0 0 1 .8 7.5V3.6a2.4 2.4 0 0 1 2.4-2.4z" stroke="#cdd1d6" stroke-width="1.2" stroke-linejoin="round"/><path d="M3.6 4.3h6.6M3.6 6.7h2.6" stroke="#cdd1d6" stroke-width="1.1"/></svg>
<svg class="s" style="left:1558.6px;top:878px;" width="15" height="15" viewBox="0 0 15 15" fill="none"><path d="M12.6 7.4V4.6a2 2 0 0 0-2-2H2.8a2 2 0 0 0-2 2v7.2a2 2 0 0 0 2 2h3.4" stroke="#cdd1d6" stroke-width="1.3"/><path d="M3.6 1v3M9.8 1v3M3 6.6h7M3 9.2h2.4" stroke="#cdd1d6" stroke-width="1.2"/><path d="M7 11.5h6.6M11.4 9.4l2.2 2.1-2.2 2.1" stroke="#cdd1d6" stroke-width="1.3"/></svg>
<svg class="s" style="left:1578.6px;top:878.5px;" width="17" height="14" viewBox="0 0 17 14" fill="none"><circle cx="6" cy="4" r="3.1" stroke="#cdd1d6" stroke-width="1.2"/><path d="M.8 12.8C2.4 9.6 4.2 8.7 5.9 8.7s3.5.9 5 4.1" stroke="#cdd1d6" stroke-width="1.25"/><circle cx="12.6" cy="6.3" r="1.9" stroke="#cdd1d6" stroke-width="1.1"/><path d="M11.2 10.1c1.5-.5 3.3.1 4.6 2.4" stroke="#cdd1d6" stroke-width="1.15"/></svg>
<svg class="s" style="left:1600.6px;top:878px;" width="15" height="14" viewBox="0 0 15 14" fill="none"><path d="M1.4 4.9h12.2c0-2-2.7-3.7-6.1-3.7S1.4 2.9 1.4 4.9z" stroke="#cdd1d6" stroke-width="1.3" stroke-linejoin="round"/><path d="M4 6.4v4.4M7.5 6.4v4.4M11 6.4v4.4" stroke="#cdd1d6" stroke-width="1.3"/><rect x="1.5" y="11.3" width="12" height="2" rx="1" stroke="#cdd1d6" stroke-width="1.2"/></svg>
<svg class="s" style="left:1623px;top:877.2px;" width="13" height="16" viewBox="0 0 13 16" fill="none"><path d="M.8 14.8V2.7A2 2 0 0 1 2.8.7h6.6a2 2 0 0 1 2 2v12.1l-1.3-.9-1.3.9-1.3-.9-1.4.9-1.3-.9-1.3.9-1.3-.9z" stroke="#cdd1d6" stroke-width="1.1" stroke-linejoin="round"/><path d="M9.3 3.3c-.3-.5-.9-.8-1.6-.8-.9 0-1.6.5-1.6 1.2s.7 1 1.6 1.2 1.7.5 1.7 1.3-.7 1.2-1.7 1.2c-.7 0-1.4-.3-1.7-.9M7.7 1.7v.8M7.7 7.4v.9" stroke="#cdd1d6" stroke-width="1.05"/><path d="M2.4 8.9h1.8M2.4 10.8h6.6" stroke="#cdd1d6" stroke-width="1.05"/></svg>
<svg class="s" style="left:1642.4px;top:878.2px;" width="15" height="13" viewBox="0 0 15 13" fill="none"><rect x="1.3" y="1.2" width="12.6" height="10.2" rx="1.5" stroke="#21b24f" stroke-width="1.5"/><path d="M3.6 3.8l4 3 4-3" stroke="#21b24f" stroke-width="1.5"/></svg>
<svg class="s" style="left:1683.6px;top:878.5px;" width="13" height="15" viewBox="0 0 13 15" fill="none"><path d="M2.4 1h6l3.4 3.4v8a2 2 0 0 1-2 2H2.4a2 2 0 0 1-2-2V3a2 2 0 0 1 2-2z" stroke="#1f84d9" stroke-width="1.3"/><path d="M8.2 1.2v2.3a1 1 0 0 0 1 1h2.4" stroke="#1f84d9" stroke-width="1.1"/><circle cx="6.2" cy="9.3" r="2.9" fill="#1f84d9"/><path d="M6 7.9v1.7l1.2.8" stroke="#fff" stroke-width=".9"/></svg>
<div class="t" style="top:877.75px;font-size:14px;line-height:14px;color:#1f84d9;font-weight:400;letter-spacing:1.500px;-webkit-text-stroke:0.25px #1f84d9;left:1700.15px;">3<span style="margin-left:-2.00px;letter-spacing:-0.800px">1</span>66<span style="margin-left:-2.00px;letter-spacing:-0.800px">1</span></div>
<div class="b" style="left:1797px;top:873.3px;width:98px;height:23.5px;border:1.4px solid #1f84d9;border-radius:5px;box-sizing:border-box;background:#fff;"></div>
<div class="b" style="left:1869px;top:873.3px;width:1.400000000000091px;height:23.5px;background:#1f84d9;"></div>
<svg class="s" style="left:1802px;top:877.4px;" width="16" height="15" viewBox="0 0 16 15" fill="none"><path d="M3.8 6.6V2.9A2 2 0 0 1 5.8.9h4.9l3.6 3.6v7.5a2 2 0 0 1-2 2H5.8a2 2 0 0 1-2-2v-.4" stroke="#1f84d9" stroke-width="1.3"/><path d="M10.5 1.1v2.3a1.1 1.1 0 0 0 1.1 1.1h2.5" stroke="#1f84d9" stroke-width="1.1"/><rect x=".9" y="6.4" width="9" height="5.3" rx="1.3" fill="#1f84d9"/><path d="M2.3 10.5V7.7h.9a.75.75 0 0 1 0 1.5h-.9M5 10.5V7.7h.6a1.3 1.3 0 0 1 0 2.8zM7.9 10.5V7.7h1.3M7.9 9h1" stroke="#fff" stroke-width=".55"/></svg>
<div class="t" style="top:877.75px;font-size:14px;line-height:14px;color:#1f84d9;font-weight:400;letter-spacing:1.500px;-webkit-text-stroke:0.25px #1f84d9;left:1824.50px;"><span style="margin-left:-2.00px;letter-spacing:-0.800px">1</span>9882</div>
<svg class="s" style="left:1874.5px;top:881px;" width="15" height="10" viewBox="0 0 15 10" fill="none"><path d="M1.2 1.4l6.2 6.2 6.2-6.2" stroke="#1f84d9" stroke-width="1.3"/></svg>
<div class="b" style="left:15px;top:932px;width:1888px;height:1px;background:#dcdfe3;"></div>
<div class="b" style="left:31px;top:908px;width:16px;height:16px;background:#fff;border:1.5px solid #4b4f57;border-radius:4px;box-sizing:border-box;"></div>
<svg class="s" style="left:79px;top:905px;" width="24" height="24" viewBox="0 0 24 24" fill="none"><circle cx="12" cy="12" r="11.6" fill="#fff" stroke="#f0f0f0" stroke-width=".6"/><path d="M5.9 7.6a6 6.7 0 0 1 12 0c0 2.6-.9 4.6-2.1 5.6v6.4c1 .9 2.4 1.7 3.8 2.9-1.9 1-4.7 1.4-7.7 1.4s-5.7-.4-7.6-1.4c1.4-1.2 2.7-2 3.7-2.9v-6.4C6.8 12.2 5.9 10.2 5.9 7.6z" fill="#3d3d3f"/></svg>
<div class="t" style="top:908.15px;font-size:14px;line-height:14px;color:#1f84d9;font-weight:400;letter-spacing:1.350px;left:107.55px;">Danny O'Keefe (325)</div>
<div class="t" style="top:909.15px;font-size:14px;line-height:14px;color:#f3a01f;font-weight:700;letter-spacing:1.562px;right:1331.35px;">48.00</div>
<svg class="s" style="left:523.5px;top:908.7px;" width="15" height="15" viewBox="0 0 15 15" fill="none"><path d="M3.6 12.4A6 6 0 1 1 12.6 9.6" stroke="#f3a01f" stroke-width="1.05" stroke-dasharray="2 .45"/><circle cx="5.4" cy="13.5" r=".55" fill="#f3a01f"/><circle cx="7.3" cy="14" r=".55" fill="#f3a01f"/><path d="M11.2 9.4l2.6-.4-.9 2.3z" fill="#f3a01f"/><circle cx="7.3" cy="7.3" r="3.7" stroke="#f3a01f" stroke-width="1.15"/><path d="M6.6 5.6l.9 1.9" stroke="#f3a01f" stroke-width="1.2" stroke-linecap="round"/></svg>
<div class="t" style="top:909.15px;font-size:14px;line-height:14px;color:#4b4f57;font-weight:400;letter-spacing:1.150px;right:1186.77px;">$<span style="margin-left:-2.00px;letter-spacing:-1.150px">1</span>,678.05</div>
<div class="t" style="top:909.15px;font-size:14px;line-height:14px;color:#4b4f57;font-weight:400;letter-spacing:1.150px;right:1046.79px;">$789.00</div>
<div class="t" style="top:909.15px;font-size:14px;line-height:14px;color:#c3c6cc;font-weight:400;letter-spacing:1.150px;right:893.52px;">$0.00</div>
<div class="t" style="top:909.15px;font-size:14px;line-height:14px;color:#4b4f57;font-weight:400;letter-spacing:1.150px;right:752.94px;">$889.05</div>
<div class="t" style="top:909.15px;font-size:14px;line-height:14px;color:#4b4f57;font-weight:400;letter-spacing:1.150px;right:616.64px;">$<span style="margin-left:-2.00px;letter-spacing:-1.150px">1</span>70.72</div>
<div class="t" style="top:909.15px;font-size:14px;line-height:14px;color:#4b4f57;font-weight:400;letter-spacing:0.970px;right:501.82px;">22 Sep 2024</div>
<div class="t" style="top:909.15px;font-size:14px;line-height:14px;color:#4b4f57;font-weight:400;letter-spacing:0.970px;right:396.02px;">23 Sep 2024</div>
<svg class="s" style="left:1538px;top:910px;" width="14" height="14" viewBox="0 0 14 14" fill="none"><path d="M3.2 1.2h7.6a2.4 2.4 0 0 1 2.4 2.4v3.9a2.4 2.4 0 0 1-2.4 2.4H6.2l-3 2.6V9.9A2.4 2.4 0 0 1 .8 7.5V3.6a2.4 2.4 0 0 1 2.4-2.4z" stroke="#cdd1d6" stroke-width="1.2" stroke-linejoin="round"/><path d="M3.6 4.3h6.6M3.6 6.7h2.6" stroke="#cdd1d6" stroke-width="1.1"/></svg>
<svg class="s" style="left:1558.6px;top:910px;" width="15" height="15" viewBox="0 0 15 15" fill="none"><path d="M12.6 7.4V4.6a2 2 0 0 0-2-2H2.8a2 2 0 0 0-2 2v7.2a2 2 0 0 0 2 2h3.4" stroke="#cdd1d6" stroke-width="1.3"/><path d="M3.6 1v3M9.8 1v3M3 6.6h7M3 9.2h2.4" stroke="#cdd1d6" stroke-width="1.2"/><path d="M7 11.5h6.6M11.4 9.4l2.2 2.1-2.2 2.1" stroke="#cdd1d6" stroke-width="1.3"/></svg>
<svg class="s" style="left:1578.6px;top:910.5px;" width="17" height="14" viewBox="0 0 17 14" fill="none"><circle cx="6" cy="4" r="3.1" stroke="#cdd1d6" stroke-width="1.2"/><path d="M.8 12.8C2.4 9.6 4.2 8.7 5.9 8.7s3.5.9 5 4.1" stroke="#cdd1d6" stroke-width="1.25"/><circle cx="12.6" cy="6.3" r="1.9" stroke="#cdd1d6" stroke-width="1.1"/><path d="M11.2 10.1c1.5-.5 3.3.1 4.6 2.4" stroke="#cdd1d6" stroke-width="1.15"/></svg>
<svg class="s" style="left:1600.6px;top:910px;" width="15" height="14" viewBox="0 0 15 14" fill="none"><path d="M1.4 4.9h12.2c0-2-2.7-3.7-6.1-3.7S1.4 2.9 1.4 4.9z" stroke="#cdd1d6" stroke-width="1.3" stroke-linejoin="round"/><path d="M4 6.4v4.4M7.5 6.4v4.4M11 6.4v4.4" stroke="#cdd1d6" stroke-width="1.3"/><rect x="1.5" y="11.3" width="12" height="2" rx="1" stroke="#cdd1d6" stroke-width="1.2"/></svg>
<svg class="s" style="left:1623px;top:909.2px;" width="13" height="16" viewBox="0 0 13 16" fill="none"><path d="M.8 14.8V2.7A2 2 0 0 1 2.8.7h6.6a2 2 0 0 1 2 2v12.1l-1.3-.9-1.3.9-1.3-.9-1.4.9-1.3-.9-1.3.9-1.3-.9z" stroke="#cdd1d6" stroke-width="1.1" stroke-linejoin="round"/><path d="M9.3 3.3c-.3-.5-.9-.8-1.6-.8-.9 0-1.6.5-1.6 1.2s.7 1 1.6 1.2 1.7.5 1.7 1.3-.7 1.2-1.7 1.2c-.7 0-1.4-.3-1.7-.9M7.7 1.7v.8M7.7 7.4v.9" stroke="#cdd1d6" stroke-width="1.05"/><path d="M2.4 8.9h1.8M2.4 10.8h6.6" stroke="#cdd1d6" stroke-width="1.05"/></svg>
<svg class="s" style="left:1642.4px;top:910.2px;" width="15" height="13" viewBox="0 0 15 13" fill="none"><rect x="1.3" y="1.2" width="12.6" height="10.2" rx="1.5" stroke="#cdd1d6" stroke-width="1.5"/><path d="M3.6 3.8l4 3 4-3" stroke="#cdd1d6" stroke-width="1.5"/></svg>
<svg class="s" style="left:1683.6px;top:910.5px;" width="13" height="15" viewBox="0 0 13 15" fill="none"><path d="M2.4 1h6l3.4 3.4v8a2 2 0 0 1-2 2H2.4a2 2 0 0 1-2-2V3a2 2 0 0 1 2-2z" stroke="#1f84d9" stroke-width="1.3"/><path d="M8.2 1.2v2.3a1 1 0 0 0 1 1h2.4" stroke="#1f84d9" stroke-width="1.1"/><circle cx="6.2" cy="9.3" r="2.9" fill="#1f84d9"/><path d="M6 7.9v1.7l1.2.8" stroke="#fff" stroke-width=".9"/></svg>
<div class="t" style="top:909.75px;font-size:14px;line-height:14px;color:#1f84d9;font-weight:400;letter-spacing:0.400px;-webkit-text-stroke:0.25px #1f84d9;left:1700.55px;">x 3</div>
<div class="b" style="left:1797px;top:905.3px;width:98px;height:23.5px;border:1.4px solid #1f84d9;border-radius:5px;box-sizing:border-box;background:#fff;"></div>
<div class="b" style="left:1869px;top:905.3px;width:1.400000000000091px;height:23.5px;background:#1f84d9;"></div>
<svg class="s" style="left:1802px;top:909.4px;" width="16" height="15" viewBox="0 0 16 15" fill="none"><path d="M3.8 6.6V2.9A2 2 0 0 1 5.8.9h4.9l3.6 3.6v7.5a2 2 0 0 1-2 2H5.8a2 2 0 0 1-2-2v-.4" stroke="#1f84d9" stroke-width="1.3"/><path d="M10.5 1.1v2.3a1.1 1.1 0 0 0 1.1 1.1h2.5" stroke="#1f84d9" stroke-width="1.1"/><rect x=".9" y="6.4" width="9" height="5.3" rx="1.3" fill="#1f84d9"/><path d="M2.3 10.5V7.7h.9a.75.75 0 0 1 0 1.5h-.9M5 10.5V7.7h.6a1.3 1.3 0 0 1 0 2.8zM7.9 10.5V7.7h1.3M7.9 9h1" stroke="#fff" stroke-width=".55"/></svg>
<div class="t" style="top:909.75px;font-size:14px;line-height:14px;color:#1f84d9;font-weight:400;letter-spacing:1.500px;-webkit-text-stroke:0.25px #1f84d9;left:1826.65px;"><span style="margin-left:-2.00px;letter-spacing:-0.800px">1</span>985<span style="margin-left:-2.00px;letter-spacing:-0.800px">1</span></div>
<svg class="s" style="left:1874.5px;top:913px;" width="15" height="10" viewBox="0 0 15 10" fill="none"><path d="M1.2 1.4l6.2 6.2 6.2-6.2" stroke="#1f84d9" stroke-width="1.3"/></svg>
</div>
</body></html>
